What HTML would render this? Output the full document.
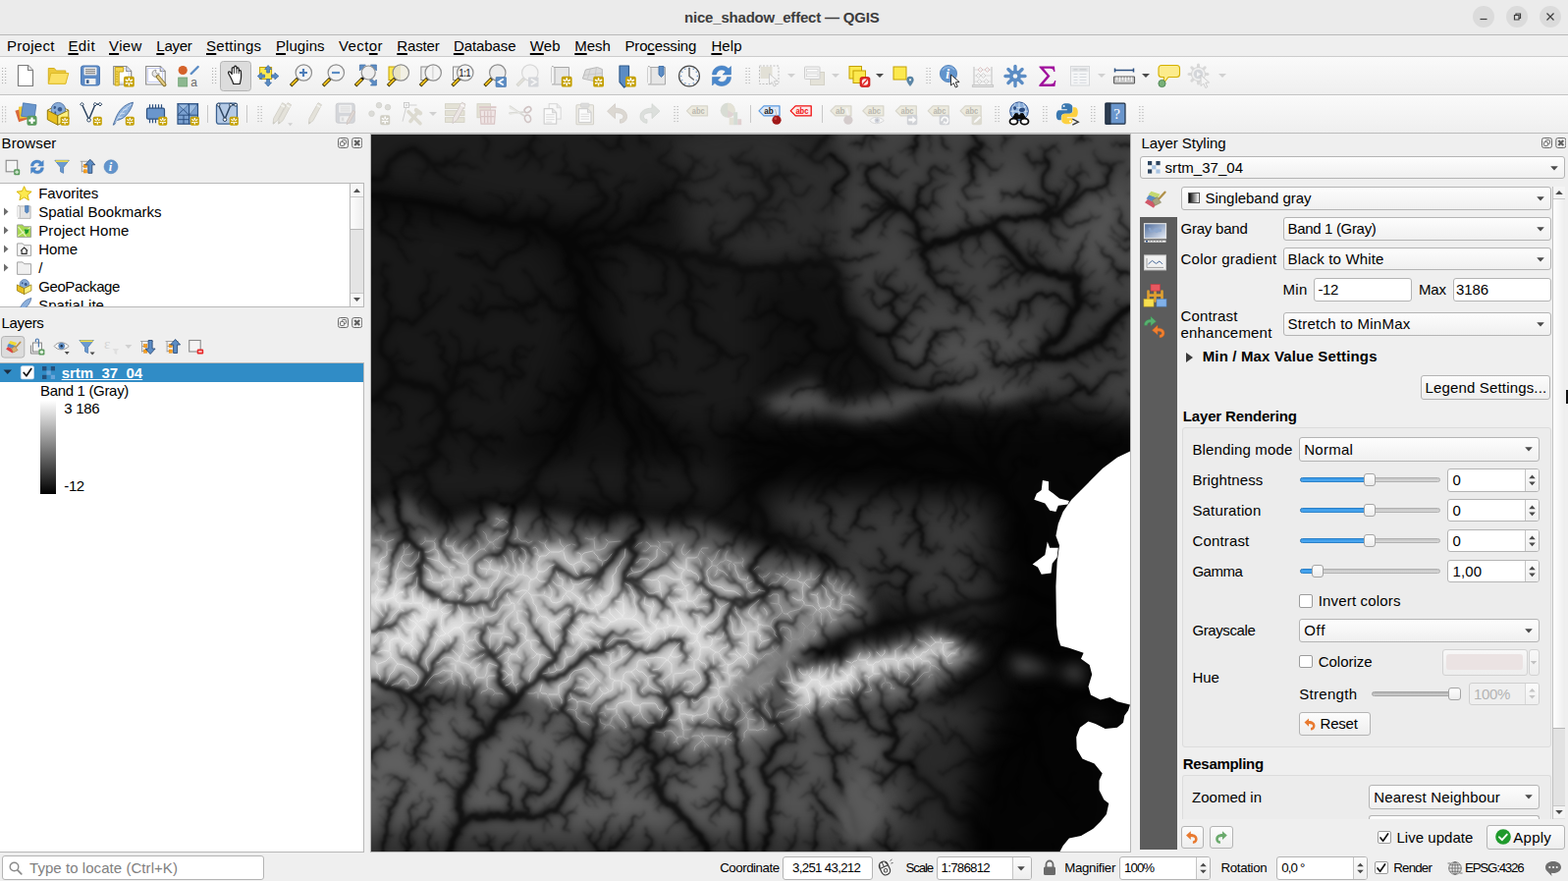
<!DOCTYPE html>
<html lang="en"><head><meta charset="utf-8"><title>nice_shadow_effect — QGIS</title>
<style>
html,body{margin:0;padding:0;background:#efefef;}
body{width:1597px;height:897px;overflow:hidden;font-family:"Liberation Sans",sans-serif;font-size:15px;color:#000;}
#app{position:relative;width:1597px;height:897px;overflow:hidden;background:#efefef;}
#app div,#app span.t,#app svg{position:absolute;box-sizing:border-box;}
span.t{white-space:nowrap;}
u{text-decoration:underline;text-underline-offset:2px;text-decoration-thickness:1.5px;}
.combo{background:linear-gradient(#fdfdfd,#f0f0f0);border:1px solid #b4b4b4;border-radius:3px;}
.btn{background:linear-gradient(#fcfcfc,#eeeeee);border:1px solid #b4b4b4;border-radius:3px;}
.edit{background:#fff;border:1px solid #b4b4b4;border-radius:3px;}
.chk{background:#fff;border:1px solid #9c9c9c;border-radius:2px;}
.grp{border:1px solid #dcdcdc;border-radius:3px;background:#ececec;}
.fs{font-family:"Liberation Sans",sans-serif;}
.fr{font-family:"Liberation Serif",serif;}

</style></head>
<body>
<div id="app">
<div style="left:0px;top:0px;width:1597px;height:35px;background:#ebebeb;"></div>
<div style="left:0px;top:35px;width:1597px;height:1px;background:#b9b9b9;"></div>
<span class="t" style="left:697px;top:7.5px;font-size:15px;line-height:20px;color:#3d3d3d;letter-spacing:-0.196px;font-weight:bold;">nice_shadow_effect — QGIS</span>
<div style="left:1500px;top:6px;width:22px;height:22px;background:#dbdbdb;border-radius:50%;"></div>
<div style="left:1534px;top:6px;width:22px;height:22px;background:#dbdbdb;border-radius:50%;"></div>
<div style="left:1568px;top:6px;width:22px;height:22px;background:#dbdbdb;border-radius:50%;"></div>
<svg style="left:1500px;top:6px" width="90" height="22" viewBox="0 0 90 22"><g stroke="#3d3d3d" stroke-width="1.2" fill="none"><path d="M7.5 13.5h7"/><path d="M42.5 9.5h4.5v4.5h-4.5z"/><path d="M44 9.5v-1.5h4.5v4.5h-1.5"/><path d="M75.5 7.5l7 7M82.5 7.5l-7 7"/></g></svg>
<div style="left:0px;top:36px;width:1597px;height:21px;background:#efefef;"></div>
<div style="left:0px;top:57px;width:1597px;height:1px;background:#cccccc;"></div>
<span class="t" style="left:7px;top:36.5px;font-size:15px;line-height:20px;color:#000;letter-spacing:0.273px;">Pro<u>j</u>ect</span>
<span class="t" style="left:69.4px;top:36.5px;font-size:15px;line-height:20px;color:#000;letter-spacing:0.435px;"><u>E</u>dit</span>
<span class="t" style="left:111px;top:36.5px;font-size:15px;line-height:20px;color:#000;letter-spacing:0.388px;"><u>V</u>iew</span>
<span class="t" style="left:159.3px;top:36.5px;font-size:15px;line-height:20px;color:#000;letter-spacing:-0.246px;"><u>L</u>ayer</span>
<span class="t" style="left:210px;top:36.5px;font-size:15px;line-height:20px;color:#000;letter-spacing:0.262px;"><u>S</u>ettings</span>
<span class="t" style="left:281px;top:36.5px;font-size:15px;line-height:20px;color:#000;letter-spacing:0.057px;"><u>P</u>lugins</span>
<span class="t" style="left:345px;top:36.5px;font-size:15px;line-height:20px;color:#000;letter-spacing:0.411px;">Vect<u>o</u>r</span>
<span class="t" style="left:404.3px;top:36.5px;font-size:15px;line-height:20px;color:#000;letter-spacing:-0.148px;"><u>R</u>aster</span>
<span class="t" style="left:461.9px;top:36.5px;font-size:15px;line-height:20px;color:#000;letter-spacing:-0.077px;"><u>D</u>atabase</span>
<span class="t" style="left:539.8px;top:36.5px;font-size:15px;line-height:20px;color:#000;letter-spacing:0.141px;"><u>W</u>eb</span>
<span class="t" style="left:585.3px;top:36.5px;font-size:15px;line-height:20px;color:#000;letter-spacing:-0.072px;"><u>M</u>esh</span>
<span class="t" style="left:636.4px;top:36.5px;font-size:15px;line-height:20px;color:#000;letter-spacing:-0.130px;">Pro<u>c</u>essing</span>
<span class="t" style="left:724.4px;top:36.5px;font-size:15px;line-height:20px;color:#000;letter-spacing:0.110px;"><u>H</u>elp</span>
<div style="left:0px;top:58px;width:1597px;height:38px;background:linear-gradient(#fafafa,#efefef);"></div>
<div style="left:0px;top:96px;width:1597px;height:1px;background:#c4c4c4;"></div>
<div style="left:0px;top:97px;width:1597px;height:38px;background:linear-gradient(#fafafa,#efefef);"></div>
<div style="left:0px;top:135px;width:1597px;height:1px;background:#bcbcbc;"></div>
<svg style="left:0;top:0" width="1597" height="137" viewBox="0 0 1597 137"><g fill="#b0b0b0"><rect x="2.0" y="69" width="1.1" height="1.1"/><rect x="5.1" y="69" width="1.1" height="1.1"/><rect x="2.0" y="72" width="1.1" height="1.1"/><rect x="5.1" y="72" width="1.1" height="1.1"/><rect x="2.0" y="75" width="1.1" height="1.1"/><rect x="5.1" y="75" width="1.1" height="1.1"/><rect x="2.0" y="78" width="1.1" height="1.1"/><rect x="5.1" y="78" width="1.1" height="1.1"/><rect x="2.0" y="81" width="1.1" height="1.1"/><rect x="5.1" y="81" width="1.1" height="1.1"/><rect x="2.0" y="84" width="1.1" height="1.1"/><rect x="5.1" y="84" width="1.1" height="1.1"/></g><g transform="translate(14.0 65.0)"><path d="M4.5 1.5h10l5 5v16h-15z" fill="#fff" stroke="#7c7c7c" stroke-width="1.2" stroke-linejoin="round"/><path d="M14.5 1.5v5h5" fill="#e8e8e8" stroke="#7c7c7c" stroke-width="1.1" stroke-linejoin="round"/></g><g transform="translate(46.8 65.0)"><path d="M2.5 4.5h6l2 2.5h9.5v13h-17.5z" fill="#edc93a" stroke="#d4b020" stroke-width="1"/><path d="M5 9.5h18l-3 10.8h-17.5z" fill="#fbe064" stroke="#dcb928" stroke-width="1" stroke-linejoin="round"/></g><g transform="translate(80.0 65.0)"><rect x="2.5" y="2" width="19" height="20" rx="2.2" fill="#5d8bc6" stroke="#4a78b4" stroke-width="1"/><rect x="5.5" y="3.5" width="13" height="8" rx="0.8" fill="#ededed"/><path d="M7 5.7h10M7 7.7h10M7 9.7h10" stroke="#6e6e6e" stroke-width="0.9"/><rect x="6.5" y="15" width="11" height="6" rx="0.6" fill="#f2f2f2"/><rect x="8" y="16.3" width="2.6" height="3.6" fill="#3d5f8f"/></g><g transform="translate(113.2 65.0)"><path d="M2.5 2.5h13l5 5v13.5h-18z" fill="#fff" stroke="#8a8a8a" stroke-width="1.2" stroke-linejoin="round"/><path d="M15.5 2.5v5h5" fill="#e8e8e8" stroke="#8a8a8a" stroke-width="1.1" stroke-linejoin="round"/><rect x="5" y="5" width="13" height="14" fill="none" stroke="#b8c8f0" stroke-width="0.8"/><path d="M4 3.5h8.5v4.5h-4.5v14h-4z" fill="#f5d550" stroke="#c8a410" stroke-width="1"/><path d="M5 8h2M5 10.5h1.5M5 13h2M5 15.500h1.5M5 18h2" stroke="#a88a00" stroke-width="0.7"/><rect x="12.8" y="12.8" width="10.8" height="10.8" rx="1.9" fill="#c4a000"/><g stroke="#fff" stroke-width="1.62" stroke-linecap="round"><path d="M18.200000000000003 14.74v6.91M15.18 16.47l6.05 3.46M15.18 19.93l6.05 -3.46"/></g><circle cx="18.200000000000003" cy="18.200000000000003" r="1.19" fill="#c4a000"/></g><g transform="translate(146.2 65.0)"><path d="M2.5 2.5h14.5l5 5v13.5h-19.5z" fill="#fff" stroke="#8a8a8a" stroke-width="1.2" stroke-linejoin="round"/><path d="M17.0 2.5v5h5" fill="#e8e8e8" stroke="#8a8a8a" stroke-width="1.1" stroke-linejoin="round"/><rect x="4.5" y="4.5" width="15" height="14" fill="none" stroke="#b8c0f0" stroke-width="0.8"/><path d="M11 6.5a3.6 3.6 0 1 0 5 3.3l-2 0.3-1.6-1.8 0.4-2.1z" fill="#e8e8e8" stroke="#8c8c8c" stroke-width="0.9"/><path d="M14.5 13l6.8 8.2" stroke="#8a7430" stroke-width="4" stroke-linecap="round"/><path d="M14.8 13.2l6.3 7.7" stroke="#e6cf86" stroke-width="2.2" stroke-linecap="round"/></g><g transform="translate(178.7 65.0)"><circle cx="7.5" cy="6.500" r="4.6" fill="#d4622a"/><rect x="3" y="14" width="9" height="9" fill="#8cb890" stroke="#6ea072" stroke-width="0.8"/><path d="M16 10l7-7" stroke="#5b8cc4" stroke-width="2.4" stroke-linecap="round"/><text x="15.5" y="22.500" class="fs" font-size="12" fill="#6a6a6a">a</text></g><g fill="#b0b0b0"><rect x="216.0" y="69" width="1.1" height="1.1"/><rect x="219.1" y="69" width="1.1" height="1.1"/><rect x="216.0" y="72" width="1.1" height="1.1"/><rect x="219.1" y="72" width="1.1" height="1.1"/><rect x="216.0" y="75" width="1.1" height="1.1"/><rect x="219.1" y="75" width="1.1" height="1.1"/><rect x="216.0" y="78" width="1.1" height="1.1"/><rect x="219.1" y="78" width="1.1" height="1.1"/><rect x="216.0" y="81" width="1.1" height="1.1"/><rect x="219.1" y="81" width="1.1" height="1.1"/><rect x="216.0" y="84" width="1.1" height="1.1"/><rect x="219.1" y="84" width="1.1" height="1.1"/></g><rect x="224.500" y="62.500" width="31" height="30" rx="3" fill="#dcdcdc" stroke="#b4b4b4" stroke-width="1"/><g transform="translate(228.0 65.0)"><path d="M6.200 12.500c-1.200-2.200-2.400-3.600-1.400-4.400 1.100-0.800 2.200 0.400 3.400 2.400l0.100-6c0-1.300 2-1.300 2.100 0l0.300-1.500c0.300-1.200 2.100-1.100 2.200 0.200l0.200 1.600c0.200-1.200 2-1.100 2.100 0.100l0.300 2.400c0.300-1 1.800-0.900 1.900 0.300 0.300 3.600 0.400 7-0.400 9.400l-0.700 3.500h-6.600c-0.300-2.100-1.800-4.600-3.500-8z" fill="#fff" stroke="#1a1a1a" stroke-width="1.2" stroke-linejoin="round"/><path d="M10.400 4.800v5M12.900 4.600v5.200M15.200 5.600v4.600" stroke="#1a1a1a" stroke-width="0.9" fill="none"/></g><g transform="translate(261.1 65.0)"><rect x="3.500" y="3.500" width="12" height="12" fill="#fce94f" stroke="#c4a000" stroke-width="1"/><g fill="#5b8cc4" stroke="#3e6da6" stroke-width="0.8" stroke-linejoin="round"><path d="M12 1.500l3.400 4h-2v3.500h-2.800v-3.500h-2z"/><path d="M12 23l3.400-4h-2v-3.500h-2.800v3.500h-2z"/><path d="M1.200 12.500l4-3.400v2h3.300v2.800h-3.300v2z"/><path d="M22.800 12.500l-4-3.400v2h-3.300v2.800h3.300v2z"/></g></g><g transform="translate(294.5 65.0)"><path d="M8.800 15L1.600 22.200" stroke="#3a3000" stroke-width="3.500" stroke-linecap="butt"/><path d="M8.200 15.600L2.300 21.500" stroke="#f4c21c" stroke-width="2"/><circle cx="9.300" cy="14.500" r="1.500" fill="#111"/><circle cx="14.800" cy="9" r="8.2" fill="#f4f4f4" stroke="#8e8e8e" stroke-width="1.200"/><path d="M10.500 9h8M14.500 5v8" stroke="#4c7cb8" stroke-width="2.2"/></g><g transform="translate(327.5 65.0)"><path d="M8.800 15L1.600 22.200" stroke="#3a3000" stroke-width="3.500" stroke-linecap="butt"/><path d="M8.200 15.600L2.300 21.500" stroke="#f4c21c" stroke-width="2"/><circle cx="9.300" cy="14.500" r="1.500" fill="#111"/><circle cx="14.800" cy="9" r="8.2" fill="#f4f4f4" stroke="#8e8e8e" stroke-width="1.200"/><path d="M10.500 9h8" stroke="#5b8cc4" stroke-width="2.2"/></g><g transform="translate(360.4 65.0)"><g fill="#5b8cc4" stroke="#3e6da6" stroke-width="0.7"><path d="M6 1h6l-2 2 3 3-2 2-3-3-2 2z"/><path d="M23 1v6l-2-2-3 3-2-2 3-3-2-2z"/><path d="M23 18v-6l-2 2-3-3-2 2 3 3-2 2z" transform="translate(0 4)"/></g><path d="M8.800 15L1.600 22.200" stroke="#3a3000" stroke-width="3.500" stroke-linecap="butt"/><path d="M8.200 15.600L2.300 21.500" stroke="#f4c21c" stroke-width="2"/><circle cx="9.300" cy="14.500" r="1.500" fill="#111"/><circle cx="14.800" cy="9" r="7" fill="#eeeeee" stroke="#8e8e8e" stroke-width="1.200"/></g><g transform="translate(393.5 65.0)"><rect x="2.500" y="3" width="11" height="13.500" fill="#fce94f" stroke="#c4a000" stroke-width="1"/><path d="M8.800 15L1.600 22.200" stroke="#3a3000" stroke-width="3.500" stroke-linecap="butt"/><path d="M8.200 15.600L2.300 21.500" stroke="#f4c21c" stroke-width="2"/><circle cx="9.300" cy="14.500" r="1.500" fill="#111"/><circle cx="14.800" cy="9" r="8.2" fill="#f2f0e4" stroke="#8e8e8e" stroke-width="1.200"/><path d="M14.500 2v14a7 7 0 0 1 0-14z" fill="#e8e2c0" opacity="0.9"/></g><g transform="translate(426.4 65.0)"><rect x="2.500" y="3" width="11" height="13.500" fill="#f0f0f0" stroke="#8c8c8c" stroke-width="1"/><path d="M8.800 15L1.600 22.200" stroke="#3a3000" stroke-width="3.500" stroke-linecap="butt"/><path d="M8.200 15.600L2.300 21.500" stroke="#f4c21c" stroke-width="2"/><circle cx="9.300" cy="14.500" r="1.500" fill="#111"/><circle cx="14.800" cy="9" r="8.2" fill="#f4f4f4" stroke="#8e8e8e" stroke-width="1.200"/><path d="M14.500 2.500v13" stroke="#c0c0c0" stroke-width="0.8"/></g><g transform="translate(459.0 65.0)"><rect x="2.500" y="3" width="11" height="13.500" fill="#f0f0f0" stroke="#8c8c8c" stroke-width="1"/><path d="M8.800 15L1.600 22.200" stroke="#3a3000" stroke-width="3.500" stroke-linecap="butt"/><path d="M8.200 15.600L2.300 21.500" stroke="#f4c21c" stroke-width="2"/><circle cx="9.300" cy="14.500" r="1.500" fill="#111"/><circle cx="14.800" cy="9" r="8.2" fill="#f4f4f4" stroke="#8e8e8e" stroke-width="1.200"/><text x="8.800" y="12.800" class="fs" font-size="10.500" font-weight="bold" fill="#3a3a3a" textLength="11.500" lengthAdjust="spacingAndGlyphs">1:1</text></g><g transform="translate(492.0 65.0)"><path d="M8.800 15L1.600 22.200" stroke="#3a3000" stroke-width="3.500" stroke-linecap="butt"/><path d="M8.200 15.600L2.300 21.500" stroke="#f4c21c" stroke-width="2"/><circle cx="9.300" cy="14.500" r="1.500" fill="#111"/><circle cx="14.800" cy="9" r="8.2" fill="#ececec" stroke="#8e8e8e" stroke-width="1.200"/><rect x="13" y="13.500" width="10.500" height="10" rx="0.8" fill="#5b8cc4" stroke="#3e6da6" stroke-width="0.6"/><path d="M20.800 15.500l-5 3 5 3" stroke="#fff" stroke-width="1.800" fill="none"/></g><g transform="translate(525.0 65.0)"><path d="M8.800 15L1.600 22.200" stroke="#d4d4d0" stroke-width="3.500" stroke-linecap="butt"/><path d="M8.200 15.600L2.300 21.500" stroke="#e2e0d8" stroke-width="2"/><circle cx="9.300" cy="14.500" r="1.500" fill="#dcdcdc"/><circle cx="14.800" cy="9" r="8.2" fill="#f4f4f4" stroke="#d8d8d8" stroke-width="1.200"/><rect x="13" y="13.500" width="10.500" height="10" rx="0.8" fill="#d4d6da"/><path d="M15.800 15.500l5 3-5 3" stroke="#f4f4f4" stroke-width="1.800" fill="none"/></g><g transform="translate(559.0 65.0)"><path d="M3 3.500h17.500v17.500h-15a2.500 2.500 0 0 1-2.500-2.500z" fill="#e6e6e6" stroke="#a8a8a8" stroke-width="1" stroke-linejoin="round"/><path d="M3 2.500c2.500 0 3 1.500 3 3v13.500c0 1.500-1 2-3 2" fill="#f4f4f4" stroke="#a8a8a8" stroke-width="1"/><rect x="12.8" y="12.8" width="10.8" height="10.8" rx="1.9" fill="#c4a000"/><g stroke="#fff" stroke-width="1.62" stroke-linecap="round"><path d="M18.200000000000003 14.74v6.91M15.18 16.47l6.05 3.46M15.18 19.93l6.05 -3.46"/></g><circle cx="18.200000000000003" cy="18.200000000000003" r="1.19" fill="#c4a000"/></g><g transform="translate(591.4 65.0)"><path d="M5 6l12-2.500 5 2v9l-4 4-16-3.500z" fill="#dcdcdc" stroke="#b4b4b4" stroke-width="0.9" stroke-linejoin="round"/><path d="M10 5l-3 10M16 4l-2 13M3.500 11.500l18-2" stroke="#c4c4c4" stroke-width="0.8" fill="none"/><rect x="12.8" y="12.8" width="10.8" height="10.8" rx="1.9" fill="#c4a000"/><g stroke="#fff" stroke-width="1.62" stroke-linecap="round"><path d="M18.200000000000003 14.74v6.91M15.18 16.47l6.05 3.46M15.18 19.93l6.05 -3.46"/></g><circle cx="18.200000000000003" cy="18.200000000000003" r="1.19" fill="#c4a000"/></g><g transform="translate(627.0 65.0)"><path d="M4 2h9.500v18.500l-4.800 3.500-4.700-5.500z" fill="#5b8cc4" stroke="#2f5a8c" stroke-width="1.200" stroke-linejoin="round"/><rect x="10" y="12.8" width="10.8" height="10.8" rx="1.9" fill="#c4a000"/><g stroke="#fff" stroke-width="1.62" stroke-linecap="round"><path d="M15.4 14.74v6.91M12.38 16.47l6.05 3.46M12.38 19.93l6.05 -3.46"/></g><circle cx="15.4" cy="18.200000000000003" r="1.19" fill="#c4a000"/></g><g transform="translate(657.0 65.0)"><path d="M3 3.500h17.500v17.500h-15a2.500 2.500 0 0 1-2.500-2.500z" fill="#e6e6e6" stroke="#a8a8a8" stroke-width="1" stroke-linejoin="round"/><path d="M3 2.500c2.500 0 3 1.500 3 3v13.500c0 1.500-1 2-3 2" fill="#f4f4f4" stroke="#a8a8a8" stroke-width="1"/><path d="M14 2.500h5v8.500l-2.500 2.500-2.500-2.500z" fill="#5b8cc4" stroke="#3e6da6" stroke-width="0.9"/></g><g transform="translate(690.0 65.0)"><circle cx="12" cy="12.500" r="10.400" fill="#f6f6f6" stroke="#4a4a4a" stroke-width="1.300"/><g fill="#5b8cc4"><circle cx="20.3" cy="12.5" r="0.700"/><circle cx="19.2" cy="16.6" r="0.700"/><circle cx="16.2" cy="19.7" r="0.700"/><circle cx="12.0" cy="20.8" r="0.700"/><circle cx="7.9" cy="19.7" r="0.700"/><circle cx="4.8" cy="16.6" r="0.700"/><circle cx="3.7" cy="12.5" r="0.700"/><circle cx="4.8" cy="8.3" r="0.700"/><circle cx="7.8" cy="5.3" r="0.700"/><circle cx="12.0" cy="4.2" r="0.700"/><circle cx="16.2" cy="5.3" r="0.700"/><circle cx="19.2" cy="8.3" r="0.700"/></g><path d="M12 4.500v8l4.300 3.500" stroke="#6a6a6a" stroke-width="1.500" fill="none" stroke-linecap="round"/></g><g transform="translate(723.0 65.0)"><g fill="#4a88cc" stroke="#3a70b0" stroke-width="0.500"><path d="M2.500 11c0-5.500 4.500-9 9.500-9 3 0 5.300 1.200 7 3l2.500-2.500v8.500h-8.500l3-3c-1-1.200-2.400-2-4-2-2.800 0-5 2-5.500 5z"/><path d="M21.500 13.500c0 5.500-4.500 9-9.500 9-3 0-5.300-1.200-7-3l-2.500 2.500v-8.500h8.500l-3 3c1 1.200 2.400 2 4 2 2.800 0 5-2 5.500-5z"/></g></g><g fill="#b0b0b0"><rect x="759.5" y="69" width="1.1" height="1.1"/><rect x="762.6" y="69" width="1.1" height="1.1"/><rect x="759.5" y="72" width="1.1" height="1.1"/><rect x="762.6" y="72" width="1.1" height="1.1"/><rect x="759.5" y="75" width="1.1" height="1.1"/><rect x="762.6" y="75" width="1.1" height="1.1"/><rect x="759.5" y="78" width="1.1" height="1.1"/><rect x="762.6" y="78" width="1.1" height="1.1"/><rect x="759.5" y="81" width="1.1" height="1.1"/><rect x="762.6" y="81" width="1.1" height="1.1"/><rect x="759.5" y="84" width="1.1" height="1.1"/><rect x="762.6" y="84" width="1.1" height="1.1"/></g><g transform="translate(772.0 65.0)"><rect x="1.500" y="2" width="19.500" height="18.500" fill="none" stroke="#c0c0c0" stroke-width="1" stroke-dasharray="2 1.500"/><rect x="2.500" y="3" width="12" height="12" fill="#e2e0d6"/><path transform="translate(11.5 10) scale(1.0)" d="M0 0l0 11 2.800-2.400 2 4.400 2-0.900-2-4.300 3.800-0.300z" fill="#f4f4f4" stroke="#c8c8c8" stroke-width="0.9" stroke-linejoin="round"/></g><g transform="translate(817.0 65.0)"><rect x="8.500" y="8.500" width="14" height="13" fill="#e4e2d8" stroke="#d4d2c8" stroke-width="1"/><rect x="2.500" y="3" width="15.500" height="12.500" rx="0.800" fill="#f2f2f2" stroke="#cfcfcf" stroke-width="1"/><rect x="4.500" y="5.500" width="11.500" height="2.500" fill="#fff" stroke="#d4d4d4" stroke-width="0.800"/><rect x="4.500" y="10.200" width="11.500" height="2.500" fill="#fff" stroke="#d4d4d4" stroke-width="0.800"/></g><g transform="translate(863.0 65.0)"><rect x="2" y="2.500" width="12.500" height="12.500" fill="#fce94f" stroke="#c4a000" stroke-width="1"/><rect x="6" y="7" width="12.500" height="12.500" fill="#fce94f" stroke="#c4a000" stroke-width="1"/><rect x="13" y="13.500" width="10" height="10" rx="2" fill="#e02828" stroke="#b80000" stroke-width="0.600"/><circle cx="18" cy="18.500" r="3.200" fill="#fff" opacity="0.900"/><path d="M15.800 20.700l4.400-4.400" stroke="#e02828" stroke-width="1.500"/></g><g transform="translate(907.5 65.0)"><rect x="2.500" y="3" width="13" height="13" fill="#fce94f" stroke="#c4a000" stroke-width="1"/><path d="M19.500 13a3.300 3.300 0 0 1 3.300 3.300c0 2.500-3.300 6.200-3.300 6.200s-3.300-3.700-3.300-6.200a3.300 3.300 0 0 1 3.300-3.300z" fill="#5a86a8" stroke="#45708f" stroke-width="0.600"/><circle cx="19.500" cy="16.300" r="1.100" fill="#fff"/></g><path d="M802 75h8l-4 4z" fill="#d0d0d0"/><path d="M847 75h8l-4 4z" fill="#d0d0d0"/><path d="M892 75h8l-4 4z" fill="#4a4a4a"/><g fill="#b0b0b0"><rect x="943.5" y="69" width="1.1" height="1.1"/><rect x="946.6" y="69" width="1.1" height="1.1"/><rect x="943.5" y="72" width="1.1" height="1.1"/><rect x="946.6" y="72" width="1.1" height="1.1"/><rect x="943.5" y="75" width="1.1" height="1.1"/><rect x="946.6" y="75" width="1.1" height="1.1"/><rect x="943.5" y="78" width="1.1" height="1.1"/><rect x="946.6" y="78" width="1.1" height="1.1"/><rect x="943.5" y="81" width="1.1" height="1.1"/><rect x="946.6" y="81" width="1.1" height="1.1"/><rect x="943.5" y="84" width="1.1" height="1.1"/><rect x="946.6" y="84" width="1.1" height="1.1"/></g><g transform="translate(955.0 65.0)"><circle cx="11" cy="10" r="8.600" fill="#6294cc" stroke="#4a7cb8" stroke-width="0.800"/><path d="M5 6.500a7.500 7.500 0 0 1 12-0.500" stroke="#9cc0e8" stroke-width="1.400" fill="none" opacity="0.700"/><text x="8.200" y="15" class="fr" font-size="14" font-weight="bold" font-style="italic" fill="#fff">i</text><path transform="translate(13.5 11) scale(1.0)" d="M0 0l0 11 2.800-2.400 2 4.400 2-0.900-2-4.300 3.800-0.300z" fill="#fff" stroke="#1a1a1a" stroke-width="0.9" stroke-linejoin="round"/></g><g transform="translate(989.0 65.0)"><path d="M3 3v18.500M21 3v18.500M1.500 21.500h21v2h-21z" stroke="#c8c8c8" stroke-width="1.200" fill="#e0e0e0"/><path d="M3 6h18M3 12h18M3 18h18" stroke="#d4d4d4" stroke-width="0.800"/><g fill="#f0f0f0" stroke-width="0.900"><path d="M7 6l2.500-2.500 2.500 2.500-2.500 2.500z" stroke="#dcc0c0"/><path d="M14 6l2.500-2.500 2.500 2.500-2.500 2.500z" stroke="#dcc0c0"/><path d="M5 12l2.500-2.500 2.500 2.500-2.500 2.500z" stroke="#d0d0d0"/><path d="M10 12l2.500-2.500 2.500 2.500-2.500 2.500z" stroke="#d0d0d0"/><path d="M6 18l2.500-2.500 2.500 2.500-2.500 2.500z" stroke="#d0d0d0"/><path d="M13 18l2.500-2.500 2.500 2.500-2.500 2.500z" stroke="#d0d0d0"/></g></g><g transform="translate(1022.0 65.0)"><g stroke="#5b8cc4" stroke-width="3.400" stroke-linecap="round"><path d="M17.00 12.50L22.00 12.50" /><path d="M15.54 16.04L19.07 19.57" /><path d="M12.00 17.50L12.00 22.50" /><path d="M8.46 16.04L4.93 19.57" /><path d="M7.00 12.50L2.00 12.50" /><path d="M8.46 8.96L4.93 5.43" /><path d="M12.00 7.50L12.00 2.50" /><path d="M15.54 8.96L19.07 5.43" /></g><circle cx="12" cy="12.500" r="6" fill="#5b8cc4"/><circle cx="12" cy="12.500" r="2.300" fill="#f4f4f4"/></g><g transform="translate(1055.0 65.0)"><path d="M3.500 2.500h15.500l0.500 5.500h-1.200c-0.500-2.500-1.500-3.300-4-3.300h-6.300l6.500 7.800-7 8h7.500c2.500 0 3.500-1 4.200-3.500h1.200l-1 6h-16v-1.500l8-9.300-7.900-8.700z" fill="#a0109c"/></g><g transform="translate(1088.0 65.0)"><rect x="2.500" y="2.500" width="19" height="19.500" fill="#f4f5f6" stroke="#d6d8da" stroke-width="1"/><rect x="3.500" y="3.500" width="17" height="4.500" fill="#e2e4e6"/><path d="M5.500 5.800h4M11.500 5.800h7" stroke="#cfd2d4" stroke-width="1.600"/><path d="M5.500 10.500h4M11.500 10.500h7M5.500 13.500h4M11.500 13.500h7M5.500 16.500h4M11.500 16.500h7M5.500 19.300h4M11.500 19.300h7" stroke="#d4d8dc" stroke-width="0.900"/></g><g transform="translate(1133.0 65.0)"><path d="M2 6.500h20M2.500 4.500v4M21.500 4.500v4" stroke="#2c5080" stroke-width="1.500" fill="none"/><rect x="1.500" y="13" width="21" height="7" rx="0.800" fill="#c8c8c8" stroke="#5a5a5a" stroke-width="1.100"/><path d="M4.500 13.500v3M7.500 13.500v4.500M10.500 13.500v3M13.500 13.500v4.500M16.500 13.500v3M19.500 13.500v4.500" stroke="#f4f4f4" stroke-width="1.100"/></g><g transform="translate(1178.0 65.0)"><path d="M5 1.500h15.500a3 3 0 0 1 3 3v6a3 3 0 0 1-3 3h-8.500l-5 6.500 0.500-6.500h-2.500a3 3 0 0 1-3-3v-6a3 3 0 0 1 3-3z" fill="#fcec8c" stroke="#d4b000" stroke-width="1.100" stroke-linejoin="round"/><circle cx="5.500" cy="20" r="3.600" fill="#78b078" stroke="#4a8050" stroke-width="0.900"/></g><g transform="translate(1210.0 65.0)"><g stroke="#d8d8d8" stroke-width="3" stroke-linecap="round"><path d="M15.50 10.50L20.00 10.50" /><path d="M14.04 14.04L17.22 17.22" /><path d="M10.50 15.50L10.50 20.00" /><path d="M6.96 14.04L3.78 17.22" /><path d="M5.50 10.50L1.00 10.50" /><path d="M6.96 6.96L3.78 3.78" /><path d="M10.50 5.50L10.50 1.00" /><path d="M14.04 6.96L17.22 3.78" /></g><circle cx="10.500" cy="10.500" r="7" fill="#f0f0f0" stroke="#d0d0d0" stroke-width="0.900"/><circle cx="10.500" cy="10.500" r="4.800" fill="#d4d6da"/><path d="M9 8l4 2.500-4 2.500z" fill="#f4f4f4"/><path transform="translate(13 11.5) scale(1.0)" d="M0 0l0 11 2.800-2.400 2 4.400 2-0.900-2-4.300 3.800-0.300z" fill="#f4f4f4" stroke="#c8c8c8" stroke-width="0.9" stroke-linejoin="round"/></g><path d="M1118 75h8l-4 4z" fill="#d0d0d0"/><path d="M1163 75h8l-4 4z" fill="#4a4a4a"/><path d="M1241 75h8l-4 4z" fill="#d0d0d0"/>
<g fill="#b0b0b0"><rect x="2.0" y="108.3" width="1.1" height="1.1"/><rect x="5.1" y="108.3" width="1.1" height="1.1"/><rect x="2.0" y="111.3" width="1.1" height="1.1"/><rect x="5.1" y="111.3" width="1.1" height="1.1"/><rect x="2.0" y="114.3" width="1.1" height="1.1"/><rect x="5.1" y="114.3" width="1.1" height="1.1"/><rect x="2.0" y="117.3" width="1.1" height="1.1"/><rect x="5.1" y="117.3" width="1.1" height="1.1"/><rect x="2.0" y="120.3" width="1.1" height="1.1"/><rect x="5.1" y="120.3" width="1.1" height="1.1"/><rect x="2.0" y="123.3" width="1.1" height="1.1"/><rect x="5.1" y="123.3" width="1.1" height="1.1"/></g><g transform="translate(14.0 103.7)"><rect x="3" y="7" width="12" height="12" fill="#d8683a" transform="rotate(-18 9 13)"/><rect x="5.500" y="4.500" width="12" height="12" fill="#f0c830" transform="rotate(-6 11 10)"/><rect x="8.500" y="2" width="13.500" height="13.500" fill="#6a96cc" stroke="#4a78b0" stroke-width="0.800" transform="rotate(8 15 9)"/><rect x="13.500" y="14" width="10" height="10" rx="2" fill="#5a9a5c"/><path d="M18.500 15.800v6.400M15.300 19h6.400" stroke="#fff" stroke-width="2.200"/></g><g transform="translate(46.8 103.7)"><circle cx="12.500" cy="8" r="7.300" fill="#88acd8" stroke="#4a6a9a" stroke-width="0.800"/><path d="M8 4.500c2-1 3 0.500 2 2s-3 1-2-2zM12.500 6c1.500-1.500 4-0.500 4 1.500s-2 3-3.500 2-1.500-2.500-0.500-3.500zM9 9.500c1.500 0 2 1.500 1 2.500s-2-1-1-2.500z" fill="#3a5a8c"/><path d="M1.500 8.500l10.500 5.500v9.500l-10.500-5.500z" fill="#e8c020" stroke="#8a7000" stroke-width="0.900" stroke-linejoin="round"/><path d="M12 14l11-5.500v9.500l-11 5.500z" fill="#fcf080" stroke="#8a7000" stroke-width="0.900" stroke-linejoin="round"/><path d="M1.500 8.500l4-2M23 8.500l-3.500-1.700" stroke="#8a7000" stroke-width="0.900"/><rect x="14.8" y="15" width="9" height="9" rx="1.6" fill="#c4a000"/><g stroke="#fff" stroke-width="1.35" stroke-linecap="round"><path d="M19.3 16.62v5.76M16.78 18.06l5.04 2.88M16.78 20.94l5.04 -2.88"/></g><circle cx="19.3" cy="19.5" r="0.99" fill="#c4a000"/></g><g transform="translate(80.0 103.7)"><path d="M3.500 2.500l7 15.500 6.500-15.500h5" stroke="#2c4460" stroke-width="1.500" fill="none" stroke-linejoin="round"/><g fill="#fff" stroke="#2c4460" stroke-width="1"><path d="M3.500 0.700l1.800 1.800-1.800 1.800-1.800-1.800z"/><path d="M17 0.700l1.800 1.800-1.800 1.800-1.800-1.800z"/><path d="M22 0.700l1.800 1.800-1.800 1.800-1.800-1.800z"/><circle cx="10.500" cy="18.500" r="1.800"/></g><rect x="14.8" y="15" width="9" height="9" rx="1.6" fill="#c4a000"/><g stroke="#fff" stroke-width="1.35" stroke-linecap="round"><path d="M19.3 16.62v5.76M16.78 18.06l5.04 2.88M16.78 20.94l5.04 -2.88"/></g><circle cx="19.3" cy="19.5" r="0.99" fill="#c4a000"/></g><g transform="translate(113.0 103.7)"><path d="M22.500 0.500c-9 2-15 8-18.500 18.500l-1.800 4.500 1.500-0.500 2-4c5-1 9-3.500 12-8 2.500-3.500 4-7 4.800-10.500z" fill="#8cb0dc" stroke="#4a6c9c" stroke-width="0.900" stroke-linejoin="round"/><path d="M21 2.500c-7 4-12 9.500-16.500 19M9 12.500l5-1M12 8.500l5-1.500M7.500 16l4-0.500" stroke="#dce8f8" stroke-width="0.800" fill="none"/><rect x="14.8" y="15" width="9" height="9" rx="1.6" fill="#c4a000"/><g stroke="#fff" stroke-width="1.35" stroke-linecap="round"><path d="M19.3 16.62v5.76M16.78 18.06l5.04 2.88M16.78 20.94l5.04 -2.88"/></g><circle cx="19.3" cy="19.5" r="0.99" fill="#c4a000"/></g><g transform="translate(146.5 103.7)"><rect x="3" y="6.500" width="18" height="11" rx="1.500" fill="#6a96cc" stroke="#2c5080" stroke-width="1.200"/><path d="M6 2.500v4M9 2.500v4M12 2.500v4M15 2.500v4M18 2.500v4M6 17.500v4M9 17.500v4M12 17.500v4" stroke="#2c5080" stroke-width="1.200"/><rect x="14.8" y="15" width="9" height="9" rx="1.6" fill="#c4a000"/><g stroke="#fff" stroke-width="1.35" stroke-linecap="round"><path d="M19.3 16.62v5.76M16.78 18.06l5.04 2.88M16.78 20.94l5.04 -2.88"/></g><circle cx="19.3" cy="19.5" r="0.99" fill="#c4a000"/></g><g transform="translate(179.0 103.7)"><rect x="2" y="2" width="20.500" height="20.500" fill="#7aa0d0" stroke="#2c5080" stroke-width="1.200"/><path d="M13.500 2v20.500M2 13.500h20.500M2 2l11.500 11.500M13.500 2l-11.500 11.500M22.500 2l-9 11.500M8 13.500v9M2 18h11.500" stroke="#2c5080" stroke-width="1" fill="none"/><path d="M3 3h9.500l-4.700 4.500zM14.500 3.500v9l7-9z" fill="#a8c4e4" opacity="0.800"/><rect x="14.8" y="15" width="9" height="9" rx="1.6" fill="#c4a000"/><g stroke="#fff" stroke-width="1.35" stroke-linecap="round"><path d="M19.3 16.62v5.76M16.78 18.06l5.04 2.88M16.78 20.94l5.04 -2.88"/></g><circle cx="19.3" cy="19.5" r="0.99" fill="#c4a000"/></g><g transform="translate(219.0 103.7)"><rect x="1.500" y="1.500" width="21" height="21" rx="2.500" fill="#b4cae6" stroke="#3a6090" stroke-width="1.300"/><path d="M3.500 3l6.500 14.500 6-14.500h5" stroke="#2c4460" stroke-width="1.500" fill="none" stroke-linejoin="round"/><g fill="#fff" stroke="#2c4460" stroke-width="1"><circle cx="3.500" cy="3" r="1.500"/><circle cx="16" cy="3" r="1.500"/><circle cx="21" cy="3" r="1.500"/><circle cx="10" cy="18" r="1.800"/></g><rect x="14.8" y="15" width="9" height="9" rx="1.6" fill="#c4a000"/><g stroke="#fff" stroke-width="1.35" stroke-linecap="round"><path d="M19.3 16.62v5.76M16.78 18.06l5.04 2.88M16.78 20.94l5.04 -2.88"/></g><circle cx="19.3" cy="19.5" r="0.99" fill="#c4a000"/></g><path d="M211.5 107v18" stroke="#c8c8c8" stroke-width="1"/><path d="M251.5 107v18" stroke="#c8c8c8" stroke-width="1"/><path d="M764.5 107v18" stroke="#c8c8c8" stroke-width="1"/><path d="M837.5 107v18" stroke="#c8c8c8" stroke-width="1"/><g fill="#b0b0b0"><rect x="262.5" y="108" width="1.1" height="1.1"/><rect x="265.6" y="108" width="1.1" height="1.1"/><rect x="262.5" y="111" width="1.1" height="1.1"/><rect x="265.6" y="111" width="1.1" height="1.1"/><rect x="262.5" y="114" width="1.1" height="1.1"/><rect x="265.6" y="114" width="1.1" height="1.1"/><rect x="262.5" y="117" width="1.1" height="1.1"/><rect x="265.6" y="117" width="1.1" height="1.1"/><rect x="262.5" y="120" width="1.1" height="1.1"/><rect x="265.6" y="120" width="1.1" height="1.1"/><rect x="262.5" y="123" width="1.1" height="1.1"/><rect x="265.6" y="123" width="1.1" height="1.1"/></g><g transform="translate(275.6 103.7)"><g transform="translate(1 0.5)"><path d="M11 0.500l3.500 2-8.500 16-4.500 3.500 0.500-5.500z" fill="#e4e2da" stroke="#d0cec6" stroke-width="0.900" stroke-linejoin="round"/><path d="M9.800 2.800l3.500 2" stroke="#f4f4f0" stroke-width="1.600"/><path d="M1.800 19.500l1.700 1.500-2 1z" fill="#c8c8c0"/></g><g transform="translate(6.5 0.5)"><path d="M11 0.500l3.500 2-8.500 16-4.500 3.500 0.500-5.500z" fill="#e4e2da" stroke="#d0cec6" stroke-width="0.900" stroke-linejoin="round"/><path d="M9.800 2.800l3.500 2" stroke="#f4f4f0" stroke-width="1.600"/><path d="M1.800 19.500l1.700 1.500-2 1z" fill="#c8c8c0"/></g><path d="M17.500 21.500h5l-2.500 3z" fill="#d0d0d0"/></g><g transform="translate(308.0 103.7)"><g transform="translate(5 0.5)"><path d="M11 0.500l3.500 2-8.500 16-4.500 3.500 0.500-5.500z" fill="#e4e2da" stroke="#d0cec6" stroke-width="0.900" stroke-linejoin="round"/><path d="M9.800 2.800l3.500 2" stroke="#f4f4f0" stroke-width="1.600"/><path d="M1.800 19.500l1.700 1.500-2 1z" fill="#c8c8c0"/></g></g><g transform="translate(340.7 103.7)"><rect x="1.500" y="1.500" width="19" height="20" rx="2.200" fill="#d4d6da" stroke="#cccdd0" stroke-width="1"/><rect x="4.500" y="3" width="13" height="8" rx="0.800" fill="#f0f0f0"/><path d="M6 5.200h10M6 7.200h10M6 9.200h10" stroke="#d8d8d8" stroke-width="0.900"/><rect x="5.500" y="14.500" width="11" height="6" rx="0.600" fill="#f0f0f0"/><rect x="7" y="15.800" width="2.600" height="3.600" fill="#dcdcdc"/><g transform="translate(11.500 8.500) scale(0.660)"><path d="M11 0.500l3.500 2-8.500 16-4.500 3.500 0.500-5.500z" fill="#e0d8d4" stroke="#ccc4c0" stroke-width="1.200" stroke-linejoin="round"/></g></g><g transform="translate(374.0 103.7)"><g fill="#dcdcd8" stroke="#d0d0cc" stroke-width="0.800"><circle cx="4.500" cy="12" r="2.800"/><circle cx="12" cy="3.500" r="2.800"/><circle cx="21" cy="5.500" r="2.800"/></g><rect x="13.2" y="13.5" width="10" height="10" rx="1.8" fill="#d0cec4"/><g stroke="#fff" stroke-width="1.50" stroke-linecap="round"><path d="M18.2 15.30v6.40M15.40 16.90l5.60 3.20M15.40 20.10l5.60 -3.20"/></g><circle cx="18.2" cy="18.5" r="1.10" fill="#d0cec4"/></g><g transform="translate(408.0 103.7)"><rect x="3.500" y="0.800" width="5" height="5" fill="#f4f4f4" stroke="#c8c8c8" stroke-width="0.900"/><path d="M5 3.300l2 0M6 2.300v2" stroke="#c8c8c8" stroke-width="0.700"/><path d="M8.500 3.300h8M5.500 6l-3.500 14" stroke="#d0d0d0" stroke-width="1" fill="none"/><path d="M8 10l12 12M18 10l-8 10" stroke="#dcdad0" stroke-width="3.600" stroke-linecap="round"/><path d="M16 8.500l4 3" stroke="#dcdad0" stroke-width="4.500" stroke-linecap="round"/></g><g transform="translate(452.0 103.7)"><g fill="#e4e2d6" stroke="#d4d2c6" stroke-width="0.900"><rect x="1.500" y="2" width="19.500" height="4.800"/><rect x="1.500" y="9" width="19.500" height="4.800"/><rect x="1.500" y="16" width="19.500" height="4.800"/></g><g transform="translate(7.500 0)"><path d="M11 0.500l3.500 2-8.500 16-4.500 3.500 0.500-5.500z" fill="#ece6e4" stroke="#d0c8c6" stroke-width="0.900" stroke-linejoin="round"/><path d="M9.800 2.800l3.500 2" stroke="#faf8f8" stroke-width="1.600"/></g></g><g transform="translate(484.0 103.7)"><rect x="2" y="2" width="13.500" height="14" fill="#e4e2d6" stroke="#d4d2c6" stroke-width="0.900"/><path d="M4 4.500h17.500v2h-17.500z" fill="#dcc8c8"/><path d="M5 8.500h15.500l-1 14h-13.500z" fill="#f0e6e6" stroke="#d8c4c4" stroke-width="1.200" stroke-linejoin="round"/><path d="M9.500 9.500v12M12.800 9.500v12M16 9.500v12M6 15h13.500" stroke="#d8c4c4" stroke-width="1.200"/></g><g transform="translate(518.0 103.7)"><path d="M1.500 4.500l14 9.500M1 11.500l14-1" stroke="#d8d8d4" stroke-width="1.800" stroke-linecap="round" fill="none"/><path d="M0.800 4l13 8.500-13-5.500zM0.500 11.800l13.500-1.300-13 3z" fill="#e8e8e4"/><ellipse cx="19.500" cy="8" rx="3.600" ry="2.600" transform="rotate(-30 19.500 8)" fill="none" stroke="#d0c4c4" stroke-width="1.600"/><ellipse cx="19.500" cy="17" rx="3" ry="3.800" transform="rotate(-20 19.500 17)" fill="none" stroke="#d0c4c4" stroke-width="1.600"/></g><g transform="translate(550.7 103.7)"><path d="M8.5 2h8l4 4v11.5h-12z" fill="#f8f8f8" stroke="#dcdcdc" stroke-width="1.2" stroke-linejoin="round"/><path d="M16.5 2v4h4" fill="#e8e8e8" stroke="#dcdcdc" stroke-width="1.1" stroke-linejoin="round"/><path d="M3.5 7h8.5l4 4v11.5h-12.5z" fill="#fbfbfb" stroke="#d0d0d0" stroke-width="1.2" stroke-linejoin="round"/><path d="M12.0 7v4h4" fill="#e8e8e8" stroke="#d0d0d0" stroke-width="1.1" stroke-linejoin="round"/><path d="M5.500 13h8.500M5.500 15.500h8.500M5.500 18h8.500M5.500 20.500h6" stroke="#d8d8d8" stroke-width="0.900"/></g><g transform="translate(584.0 103.7)"><rect x="3" y="3" width="17.500" height="20" rx="1" fill="#eeece6" stroke="#d4d2ca" stroke-width="1.100"/><rect x="7.500" y="1.500" width="8.500" height="4" rx="0.800" fill="#dcdcdc" stroke="#d0d0d0" stroke-width="0.800"/><path d="M5.5 7h9.0l3.5 3.5v10.5h-12.5z" fill="#fbfbfb" stroke="#d0d0d0" stroke-width="1.2" stroke-linejoin="round"/><path d="M14.5 7v3.5h3.5" fill="#e8e8e8" stroke="#d0d0d0" stroke-width="1.1" stroke-linejoin="round"/><path d="M7.500 12.500h8.500M7.500 15h8.500M7.500 17.500h8.500" stroke="#d8d8d8" stroke-width="0.900"/></g><g transform="translate(616.5 103.7)"><path d="M2 9.500l8-7.500v4.500c7 0 12 3 12 8.500 0 4-3.500 6.500-7 6.500v-3.500c2 0 3.500-1 3.500-3 0-2.500-3-4-8.500-4v6z" fill="#dcd8d2" stroke="#d0ccc6" stroke-width="0.800" stroke-linejoin="round"/></g><g transform="translate(650.0 103.7)"><path d="M22 9.500l-8-7.500v4.500c-7 0-12 3-12 8.500 0 4 3.500 6.500 7 6.500v-3.500c-2 0-3.500-1-3.500-3 0-2.500 3-4 8.500-4v6z" fill="#dcdfdc" stroke="#d0d4d0" stroke-width="0.800" stroke-linejoin="round"/></g><path d="M437 114h8l-4 4z" fill="#d0d0d0"/><g fill="#b0b0b0"><rect x="686.5" y="108" width="1.1" height="1.1"/><rect x="689.6" y="108" width="1.1" height="1.1"/><rect x="686.5" y="111" width="1.1" height="1.1"/><rect x="689.6" y="111" width="1.1" height="1.1"/><rect x="686.5" y="114" width="1.1" height="1.1"/><rect x="689.6" y="114" width="1.1" height="1.1"/><rect x="686.5" y="117" width="1.1" height="1.1"/><rect x="689.6" y="117" width="1.1" height="1.1"/><rect x="686.5" y="120" width="1.1" height="1.1"/><rect x="689.6" y="120" width="1.1" height="1.1"/><rect x="686.5" y="123" width="1.1" height="1.1"/><rect x="689.6" y="123" width="1.1" height="1.1"/></g><g transform="translate(698.0 103.7)"><path d="M1.5 9.2l5 -5h16v10h-16z" fill="#eceade" stroke="#d8d6cc" stroke-width="1.3" stroke-linejoin="round"/><text x="6.7" y="12.8" class="fs" font-size="9.5" font-weight="bold" fill="#b8b6ae" textLength="13" lengthAdjust="spacingAndGlyphs">abc</text></g><g transform="translate(731.7 103.7)"><circle cx="9.500" cy="8.500" r="7.500" fill="#d8dcd4"/><path d="M9.500 8.500v-7.500a7.500 7.500 0 0 1 6.500 11.200z" fill="#e4e2d6"/><path d="M9.500 8.500l6.500 3.700a7.500 7.500 0 0 1-6.500 3.800z" fill="#e0d4d4"/><rect x="11" y="16" width="4.500" height="7.500" fill="#e4e2d6"/><rect x="15.500" y="10.500" width="4" height="13" fill="#d4dcd4"/><rect x="19.500" y="17.500" width="4" height="6" fill="#e0d0d0"/></g><g transform="translate(771.5 103.7)"><path d="M1.5 9.2l5 -5h16v10h-16z" fill="#dce8f8" stroke="#5b9ae0" stroke-width="1.3" stroke-linejoin="round"/><text x="6.7" y="12.8" class="fs" font-size="9.5" font-weight="bold" fill="#1a1a1a" textLength="9.5" lengthAdjust="spacingAndGlyphs">ab</text><path d="M18 7.500l1.500 6" stroke="#f4f4f4" stroke-width="2.200" stroke-linecap="round"/><path d="M18 7.500l1.500 6" stroke="#8a8a8a" stroke-width="0.600"/><circle cx="19.500" cy="18.500" r="4.600" fill="#a01818"/><circle cx="18.300" cy="17" r="1.400" fill="#d05050" opacity="0.800"/></g><g transform="translate(803.7 103.7)"><path d="M1.5 9.2l5 -5h16v10h-16z" fill="#fde8e8" stroke="#f01010" stroke-width="1.3" stroke-linejoin="round"/><text x="6.7" y="12.8" class="fs" font-size="9.5" font-weight="bold" fill="#f01010" textLength="13" lengthAdjust="spacingAndGlyphs">abc</text></g><g transform="translate(844.4 103.7)"><path d="M1.5 9.2l5 -5h16v10h-16z" fill="#eceade" stroke="#d8d6cc" stroke-width="1.3" stroke-linejoin="round"/><text x="6.7" y="12.8" class="fs" font-size="9.5" font-weight="bold" fill="#b8b6ae" textLength="9.5" lengthAdjust="spacingAndGlyphs">ab</text><path d="M18 7.500l1.500 6" stroke="#f4f4f4" stroke-width="2.200" stroke-linecap="round"/><circle cx="19.500" cy="18.500" r="4.600" fill="#d4cccc"/></g><g transform="translate(877.3 103.7)"><path d="M1.5 9.2l5 -5h16v10h-16z" fill="#eceade" stroke="#d8d6cc" stroke-width="1.3" stroke-linejoin="round"/><text x="6.7" y="12.8" class="fs" font-size="9.5" font-weight="bold" fill="#b8b6ae" textLength="13" lengthAdjust="spacingAndGlyphs">abc</text><path d="M8.500 19c3-4.500 10-4.500 14.500 0-4.500 4-11.500 4-14.500 0z" fill="#f6f6f6" stroke="#d4d4d4" stroke-width="0.900"/><circle cx="16" cy="18.800" r="2.600" fill="#d0d4dc"/><circle cx="16" cy="18.800" r="1" fill="#b8b8c0"/></g><g transform="translate(910.8 103.7)"><path d="M1.5 9.2l5 -5h16v10h-16z" fill="#eceade" stroke="#d8d6cc" stroke-width="1.3" stroke-linejoin="round"/><text x="6.7" y="12.8" class="fs" font-size="9.5" font-weight="bold" fill="#b8b6ae" textLength="13" lengthAdjust="spacingAndGlyphs">abc</text><rect x="13" y="13" width="10.500" height="10.500" rx="1.800" fill="#d0d2d6"/><path d="M14.500 17h4v-2.500l4 3.800-4 3.800v-2.500h-4z" fill="#fafafa"/></g><g transform="translate(943.7 103.7)"><path d="M1.5 9.2l5 -5h16v10h-16z" fill="#eceade" stroke="#d8d6cc" stroke-width="1.3" stroke-linejoin="round"/><text x="6.7" y="12.8" class="fs" font-size="9.5" font-weight="bold" fill="#b8b6ae" textLength="13" lengthAdjust="spacingAndGlyphs">abc</text><rect x="13" y="13" width="10.500" height="10.500" rx="1.800" fill="#d0d2d6"/><path d="M15.500 19.500a3.200 3.200 0 1 1 3.200 2.500" stroke="#fafafa" stroke-width="1.700" fill="none"/><path d="M16.500 22.500l3-1.500-1.500-2z" fill="#fafafa"/></g><g transform="translate(976.6 103.7)"><path d="M1.5 9.2l5 -5h16v10h-16z" fill="#eceade" stroke="#d8d6cc" stroke-width="1.3" stroke-linejoin="round"/><text x="6.7" y="12.8" class="fs" font-size="9.5" font-weight="bold" fill="#b8b6ae" textLength="13" lengthAdjust="spacingAndGlyphs">abc</text><rect x="13" y="13" width="10.500" height="10.500" rx="1.800" fill="#dcdad0"/><path d="M15 21.500l1-2.500 5-4.500 1.500 1.500-5 4.500z" fill="#fafafa"/></g><g fill="#b0b0b0"><rect x="1013.5" y="108" width="1.1" height="1.1"/><rect x="1016.6" y="108" width="1.1" height="1.1"/><rect x="1013.5" y="111" width="1.1" height="1.1"/><rect x="1016.6" y="111" width="1.1" height="1.1"/><rect x="1013.5" y="114" width="1.1" height="1.1"/><rect x="1016.6" y="114" width="1.1" height="1.1"/><rect x="1013.5" y="117" width="1.1" height="1.1"/><rect x="1016.6" y="117" width="1.1" height="1.1"/><rect x="1013.5" y="120" width="1.1" height="1.1"/><rect x="1016.6" y="120" width="1.1" height="1.1"/><rect x="1013.5" y="123" width="1.1" height="1.1"/><rect x="1016.6" y="123" width="1.1" height="1.1"/></g><g transform="translate(1026.0 103.7)"><circle cx="12" cy="9.500" r="9.300" fill="#88acd8" stroke="#2c5090" stroke-width="1"/><path d="M3 9.500h18M12 0.500v13M5 4.500c4 2 10 2 14 0M4.500 14c4-2 11-2 15 0M8 1.500c-3 5-3 11 0 16M16 1.500c3 5 3 11 0 16" stroke="#e8f0fc" stroke-width="0.700" fill="none"/><path d="M6 5c2-1 4 0 3 2s-3 2-3-2zM13 6.500c2-1.500 5-0.500 5 1.500s-3 3-5 2-1-2.500 0-3.500z" fill="#2c4c80"/><path d="M5 17.500l3-5.500h2.500l1.500 3 1.500-3h2.500l3 5.500" fill="#0a0a0a" stroke="#0a0a0a" stroke-width="1" stroke-linejoin="round"/><ellipse cx="6.500" cy="20" rx="4" ry="3" fill="#fff" stroke="#0a0a0a" stroke-width="1.800"/><ellipse cx="17.500" cy="20" rx="4" ry="3" fill="#fff" stroke="#0a0a0a" stroke-width="1.800"/></g><g fill="#b0b0b0"><rect x="1062.3" y="108" width="1.1" height="1.1"/><rect x="1065.4" y="108" width="1.1" height="1.1"/><rect x="1062.3" y="111" width="1.1" height="1.1"/><rect x="1065.4" y="111" width="1.1" height="1.1"/><rect x="1062.3" y="114" width="1.1" height="1.1"/><rect x="1065.4" y="114" width="1.1" height="1.1"/><rect x="1062.3" y="117" width="1.1" height="1.1"/><rect x="1065.4" y="117" width="1.1" height="1.1"/><rect x="1062.3" y="120" width="1.1" height="1.1"/><rect x="1065.4" y="120" width="1.1" height="1.1"/><rect x="1062.3" y="123" width="1.1" height="1.1"/><rect x="1065.4" y="123" width="1.1" height="1.1"/></g><g transform="translate(1074.8 103.7)"><path d="M11.500 1.500c-4.500 0-5 2-5 3.500v2.500h5.500v1h-8c-2 0-3 2-3 5s1 5 3 5h2v-3c0-2 1.500-3.500 3.500-3.500h5c1.500 0 3-1.200 3-3v-4c0-1.500-1.500-3.500-6-3.500z" fill="#3a78b0"/><circle cx="8.800" cy="4.300" r="1" fill="#fff"/><path d="M12.500 22.500c4.500 0 5-2 5-3.500v-2.500h-5.500v-1h8c2 0 3-2 3-5s-1-5-3-5h-2v3c0 2-1.500 3.500-3.500 3.500h-5c-1.500 0-3 1.200-3 3v4c0 1.500 1.500 3.500 6 3.500z" fill="#fcd040"/><circle cx="15.200" cy="19.700" r="1" fill="#fff"/><path d="M17.500 17.500l6 3-6 3" stroke="#3a3a3a" stroke-width="1.300" fill="none"/></g><g fill="#b0b0b0"><rect x="1111.2" y="108" width="1.1" height="1.1"/><rect x="1114.3" y="108" width="1.1" height="1.1"/><rect x="1111.2" y="111" width="1.1" height="1.1"/><rect x="1114.3" y="111" width="1.1" height="1.1"/><rect x="1111.2" y="114" width="1.1" height="1.1"/><rect x="1114.3" y="114" width="1.1" height="1.1"/><rect x="1111.2" y="117" width="1.1" height="1.1"/><rect x="1114.3" y="117" width="1.1" height="1.1"/><rect x="1111.2" y="120" width="1.1" height="1.1"/><rect x="1114.3" y="120" width="1.1" height="1.1"/><rect x="1111.2" y="123" width="1.1" height="1.1"/><rect x="1114.3" y="123" width="1.1" height="1.1"/></g><g transform="translate(1124.0 103.7)"><rect x="2" y="1.500" width="20" height="21" rx="1" fill="#6a96cc" stroke="#1c2c40" stroke-width="1.200"/><rect x="2" y="1.500" width="5" height="21" fill="#2c3c50" stroke="#1c2c40" stroke-width="1"/><text x="10.300" y="17.500" class="fr" font-size="15" fill="#fff">?</text></g><g fill="#b0b0b0"><rect x="1160.3" y="108" width="1.1" height="1.1"/><rect x="1163.4" y="108" width="1.1" height="1.1"/><rect x="1160.3" y="111" width="1.1" height="1.1"/><rect x="1163.4" y="111" width="1.1" height="1.1"/><rect x="1160.3" y="114" width="1.1" height="1.1"/><rect x="1163.4" y="114" width="1.1" height="1.1"/><rect x="1160.3" y="117" width="1.1" height="1.1"/><rect x="1163.4" y="117" width="1.1" height="1.1"/><rect x="1160.3" y="120" width="1.1" height="1.1"/><rect x="1163.4" y="120" width="1.1" height="1.1"/><rect x="1160.3" y="123" width="1.1" height="1.1"/><rect x="1163.4" y="123" width="1.1" height="1.1"/></g></svg>
<span class="t" style="left:1.5px;top:136.0px;font-size:15px;line-height:20px;color:#000;letter-spacing:0.141px;">Browser</span>
<div style="left:0px;top:186px;width:371px;height:127px;background:#fff;border:1px solid #b8b8b8;border-left:none;"></div>
<span class="t" style="left:39.2px;top:187.0px;font-size:15px;line-height:20px;color:#000;letter-spacing:-0.076px;">Favorites</span>
<span class="t" style="left:39.2px;top:206.0px;font-size:15px;line-height:20px;color:#000;letter-spacing:0.020px;">Spatial Bookmarks</span>
<span class="t" style="left:39.2px;top:225.0px;font-size:15px;line-height:20px;color:#000;letter-spacing:0.119px;">Project Home</span>
<span class="t" style="left:39.2px;top:244.0px;font-size:15px;line-height:20px;color:#000;letter-spacing:-0.054px;">Home</span>
<span class="t" style="left:39.2px;top:263.0px;font-size:15px;line-height:20px;color:#000;">/</span>
<span class="t" style="left:39.2px;top:282.0px;font-size:15px;line-height:20px;color:#000;letter-spacing:-0.393px;">GeoPackage</span>
<div style="left:0px;top:302px;width:356px;height:10px;overflow:hidden;"><span class="t" style="left:39.2px;top:-1px;font-size:15px;line-height:20px;">SpatiaLite</span></div>
<div style="left:356px;top:187px;width:14px;height:125px;background:#e4e4e4;border-left:1px solid #b8b8b8;"></div>
<div style="left:357px;top:187px;width:13px;height:14px;background:#f6f6f6;border-bottom:1px solid #c8c8c8;"></div>
<div style="left:357px;top:298px;width:13px;height:14px;background:#f6f6f6;border-top:1px solid #c8c8c8;"></div>
<div style="left:357px;top:201px;width:13px;height:33px;background:linear-gradient(90deg,#fdfdfd,#ededed);border-bottom:1px solid #b8b8b8;"></div>
<svg style="left:357px;top:187px" width="13" height="125" viewBox="0 0 13 125"><path d="M3 9l3.5-4 3.5 4z M3 116l3.5 4 3.5-4z" fill="#505050"/></svg>
<span class="t" style="left:1.5px;top:319.0px;font-size:15px;line-height:20px;color:#000;letter-spacing:-0.339px;">Layers</span>
<div style="left:0px;top:369px;width:371px;height:499px;background:#fff;border:1px solid #b8b8b8;border-left:none;"></div>
<div style="left:0px;top:370px;width:370px;height:19px;background:#308cc6;"></div>
<span class="t" style="left:62.7px;top:370.0px;font-size:15px;line-height:20px;color:#fff;letter-spacing:-0.008px;font-weight:bold;text-decoration:underline;">srtm_37_04</span>
<span class="t" style="left:41px;top:388.0px;font-size:15px;line-height:20px;color:#000;letter-spacing:-0.325px;">Band 1 (Gray)</span>
<div style="left:41px;top:408px;width:16px;height:95px;background:linear-gradient(#ffffff,#000000);"></div>
<span class="t" style="left:65.3px;top:406.0px;font-size:15px;line-height:20px;color:#000;letter-spacing:-0.309px;">3 186</span>
<span class="t" style="left:65.3px;top:485.0px;font-size:15px;line-height:20px;color:#000;letter-spacing:-0.396px;">-12</span>
<div style="left:377px;top:136px;width:775px;height:732px;background:#0c0c0c;border:1px solid #b8b8b8;"></div>
<svg style="left:378px;top:137px" width="773" height="730" viewBox="378 137 773 730">
<defs>
<filter id="bE" filterUnits="userSpaceOnUse" x="278" y="38" width="973" height="929" color-interpolation-filters="sRGB"><feGaussianBlur stdDeviation="14"/></filter>
<filter id="bM" filterUnits="userSpaceOnUse" x="278" y="38" width="973" height="929" color-interpolation-filters="sRGB"><feGaussianBlur stdDeviation="7"/></filter>
<filter id="bF" filterUnits="userSpaceOnUse" x="278" y="38" width="973" height="929" color-interpolation-filters="sRGB"><feGaussianBlur stdDeviation="5"/></filter>
<filter id="bV" filterUnits="userSpaceOnUse" x="278" y="38" width="973" height="929" color-interpolation-filters="sRGB">
<feGaussianBlur in="SourceGraphic" stdDeviation="0.9" result="core"/>
<feGaussianBlur in="SourceGraphic" stdDeviation="2.4" result="h0"/>
<feComponentTransfer in="h0" result="halo"><feFuncA type="linear" slope="1.5"/></feComponentTransfer>
<feGaussianBlur in="SourceGraphic" stdDeviation="5" result="h1"/>
<feComponentTransfer in="h1" result="halo2"><feFuncA type="linear" slope="1.7"/></feComponentTransfer>
<feGaussianBlur in="SourceGraphic" stdDeviation="10" result="h2"/>
<feComponentTransfer in="h2" result="halo3"><feFuncA type="linear" slope="1.2"/></feComponentTransfer>
<feMerge><feMergeNode in="halo3"/><feMergeNode in="halo2"/><feMergeNode in="halo"/><feMergeNode in="core"/></feMerge>
</filter>
<filter id="bR" filterUnits="userSpaceOnUse" x="278" y="38" width="973" height="929" color-interpolation-filters="sRGB">
<feGaussianBlur in="SourceGraphic" stdDeviation="0.7" result="core"/>
<feGaussianBlur in="SourceGraphic" stdDeviation="2.2" result="h0"/>
<feComponentTransfer in="h0" result="halo"><feFuncA type="linear" slope="2.2"/></feComponentTransfer>
<feMerge><feMergeNode in="halo"/><feMergeNode in="core"/></feMerge>
</filter>
</defs>
<g filter="url(#bE)"><rect x="178" y="-62" width="1173" height="1129" fill="#121212"/>
<g fill="#1e1e1e"><polygon points="300,100 640,100 700,150 640,215 520,215 440,195 300,185"/></g>
<g fill="#191919"><polygon points="300,215 440,225 560,250 575,330 540,420 470,470 300,470"/></g>
<g fill="#1b1b1b"><polygon points="620,245 700,250 770,290 770,420 700,440 650,400 625,330"/></g>
<g fill="#0a0a0a"><polygon points="300,192 440,200 510,218 560,225 595,245 610,300 618,345 640,400 700,450 720,503 690,503 640,440 615,400 590,440 550,480 520,470 570,420 595,360 590,300 575,255 540,240 500,232 430,215 300,207"/></g>
<g fill="#424242"><polygon points="850,100 1200,100 1200,440 1100,410 1000,395 930,395 880,330 850,260 830,200"/></g>
<g fill="#2e2e2e"><polygon points="680,130 780,120 860,150 860,260 770,275 700,250"/></g>
<g fill="#505050"><ellipse cx="1010" cy="205" rx="50" ry="30"/></g>
<g fill="#545454"><ellipse cx="1120" cy="230" rx="40" ry="50"/></g>
<g fill="#505050"><ellipse cx="990" cy="355" rx="80" ry="30"/></g>
<g fill="#3a3a3a"><ellipse cx="1110" cy="340" rx="50" ry="40"/></g>
<g fill="#080808"><polygon points="740,435 1000,430 1200,420 1200,530 1000,515 900,505 740,500"/></g>
<g fill="#202020"><polygon points="298,475 740,475 740,505 298,505"/></g>
<g fill="#3a3a3a"><polygon points="780,505 1000,508 1010,620 950,625 870,600 830,560 790,528"/></g>
<g fill="#626262"><polygon points="298,700 780,712 780,850 298,850"/></g>
<g fill="#545454"><polygon points="780,712 1000,720 1000,850 780,850"/></g>
<g fill="#303030"><polygon points="298,848 1000,848 1000,950 298,950"/></g>
<g fill="#2a2a2a"><polygon points="925,740 1010,720 1010,950 940,950 915,800"/></g>
<g fill="#050505"><polygon points="1035,490 1200,490 1200,950 990,950 975,860 990,780 1010,730 1030,700 1012,650 1025,600 1018,540"/></g>
<g fill="#070707"><polygon points="1040,440 1200,420 1200,520 1040,520"/></g>
</g>
<g filter="url(#bM)">
<g fill="#585858"><polygon points="301.2,535.6 323.9,529.2 379.6,516.8 412.8,502.3 448,535.5 495.3,521.7 504.7,515.9 574,526.7 619.6,536.9 630.8,527.6 685.7,535.9 712.6,530 758.7,553 791.1,562.3 823,569.2 874.5,580.2 889.4,619.1 889.7,634.5 848.5,648.9 817.1,679.6 801.7,728.9 786.9,765.6 750.7,760.1 717.7,766.4 700.7,770.2 664.3,776.7 646.1,746.4 610.6,734.5 568.4,738.9 551,721.6 518.5,722.2 493.8,706.2 477.1,719.4 441.7,710.2 413.3,704.9 380,698.7 361.5,706.2 325.6,707.8 302.8,717.8 295.5,675.2 299.8,645.1 309.5,634.9 304.2,599.4 304.7,583.7 302.5,545.6"/></g>
<g fill="#8e8e8e"><polygon points="282.8,556.5 322.2,537.7 360.7,545.7 367.2,539.1 412.6,553.9 432.9,546.5 483.8,559.8 510.2,517.5 534.2,549 580.6,564.9 603.6,544.8 634.6,553.2 651.5,554.8 691.5,547.9 700.8,560.4 739.4,558.7 782.1,583.4 827,595.4 846.2,609.2 862.1,598.4 863.7,625.2 831.1,652.6 800.4,678 779.6,706.2 792.1,740.1 756.3,756.4 722.2,760.2 701.9,766.3 660.9,740.4 624.1,741.7 604.8,738.2 571.4,729.9 559.9,717.8 538.6,703.5 494.7,713.7 475.8,697.4 441.3,697.9 421.1,708.3 378.2,706.1 352.4,701.1 327.4,695.8 301.8,704.1 301.8,679.5 295.6,625.9 293.6,610.6 298.2,583.6"/></g>
<g fill="#c6c6c6"><polygon points="305.3,572.9 327.4,563.5 368.1,568.4 379.5,559.2 415.9,581.6 457,550.8 478.9,569.6 515.6,571.5 534.2,573.3 565,550.6 593.6,565.8 641.9,584.2 657.3,578.9 700.8,567.1 711.5,587.2 761.2,590.6 775.6,615.7 784.8,652 757.1,689.8 735,718.1 695,738.5 669.7,719.3 638.7,725.9 597.7,712.8 590.5,701.8 572.7,711.3 531,700.4 525.5,691.8 473.3,690.4 442.8,681.5 430.9,689.2 405,696.8 369.7,690 348,685.2 316.7,693.4 296.7,693 307,670.1 288,624.3 295.7,604.1"/></g>
<g fill="#e4e4e4"><ellipse cx="415" cy="630" rx="62" ry="36"/></g>
<g fill="#dcdcdc"><ellipse cx="645" cy="635" rx="92" ry="38" transform="rotate(4 645 635)"/></g>
<g fill="#9c9c9c"><ellipse cx="835" cy="606" rx="42" ry="20" transform="rotate(18 835 606)"/></g>
<g fill="#747474"><polygon points="800.4,713.3 816.1,684.2 861.1,681.9 870.9,655.1 902.7,657.1 944,638.8 979.5,652.7 1000.8,665.1 957.1,699 930.2,713 891,716.6 851.1,730.5 849.6,719.5 794.3,750.1"/></g>
<g fill="#dcdcdc"><polygon points="798.7,687.9 840.5,675.2 867.3,673.7 873.6,670.2 929.8,662.4 964.5,650.7 983.9,666.4 942.5,677.2 889.1,689.3 851,712.3 815.4,724.1"/></g>
<g fill="#505050"><polygon points="772.6,409.9 827.7,386 847.6,412 871.4,408.4 920.5,395.6 965.4,390.5 996.6,383.1 1049.1,391.5 1057.8,395.7 1014.7,413.3 952.9,404.6 906.2,425.9 870.8,428.4 846.9,421.3 800.1,425.1"/></g>
<g fill="#484848"><polygon points="1027.8,668.9 1045.8,669.1 1102.9,696.9 1101.7,676.5 1076.9,682.5 1036.2,687.6"/></g>
<g fill="#222222"><polygon points="1096.8,723.5 1132.1,729.6 1161.4,731 1155.4,729.5 1114.5,731.5"/></g>
</g>
<g filter="url(#bV)" fill="none" stroke="#000" stroke-linecap="round" stroke-linejoin="round" opacity="0.5">
<path d="M420 505l2 0M868 293l-2 2M826 241l-2 2M776 235l2-2M930 837l4-4M930 819l4 0M956 719l2-2M390 507l-2-2M1078 403l2 2M742 185l0 2M982 687l2 2M904 603l2 2M810 233l-2 0-2 2M718 159l-2 2M638 527l2-2M896 519l-2-2-2 0M1040 407l2 0M842 401l2-2M784 243l0-2M754 179l2 0M930 857l2 2M822 519l-2-2M1146 415l0 2-2 2M972 409l0 2M1052 403l0 2M802 171l0 4-2 2M846 147l-6 0M922 859l-6 4M968 723l2-2 2 0M852 651l0 2 2 0M934 611l2 2 2 0M448 529l2-2M782 245l0-4M736 173l-4 0M822 163l2-2M794 163l-2 2M732 163l-2 0 0 2-2 2M932 817l6 0M938 755l0 2-2 2M974 739l0 2M954 709l2 0 2-2M970 641l0-2 2 0M628 527l0-4M766 241l0-2-2-2M816 237l0 4-2 2 0 2M816 219l0-4-2-2M730 217l0 2-4 4M736 207l-4-4M732 191l2 0 2 2M794 189l-6 4M810 161l0-2M772 159l-2 2 0 4 2 2M846 139l-2 0M916 865l-6 2M960 703l0 2M966 639l2-2 2 0M872 641l0 6M870 641l0 6M938 635l-2-2 0-2 2-2M794 559l2-2M694 531l-4-4 0-2M692 531l-4-4 0-2M590 527l2-2M446 529l2-2 0-2M532 517l-2-2M1024 411l0 6M978 409l-2 2 0 2 2 2M1076 401l0 2 2 0M840 231l0 4-2 2M828 213l4 4 4-4M830 193l0-2-2-2-2 0M752 193l-2 2 0 2 2 2M820 179l-2 2-2 0M842 175l0-2M776 165l-2 2 0 2M846 137l-2 0M856 665l0-2M972 641l0-2" stroke-width="0.8" stroke-opacity="0.36"/>
<path d="M1044 593l-2 2M1006 413l-2 2M522 391l-2-2M638 363l-2 0M692 247l-2 2M422 243l-2 2M590 505l2 2M560 475l-4-4M496 405l-2 2-2 0M686 373l2-2M726 209l-2 0M506 199l2 2M604 139l2 2M1102 815l-4 4M1080 701l2 2 0 2M702 159l2 0M492 157l2-2M582 375l2 0M536 365l0-2M772 299l2 2 0 2M1022 717l4 4 2 0M910 637l0-2 2 0M740 507l4 0M670 311l-2-2 0-4M548 175l4-4M980 795l2 0 4 6M452 235l-6-6M802 203l-4 0M648 181l0 2-2 2M986 641l2 2 4 0M1032 631l2 2 0 2M774 511l-4-4M388 471l4 4M576 465l2-2 4 0M550 425l0-4M1002 765l0 2 2 2M964 519l0-4M490 503l-2 2 0 2M544 351l0 2M638 323l-2-2 0-2M538 215l0 2M978 817l2 0M946 753l2 2 0 2-6 4M904 613l4 4M1000 555l2 2 8 0M732 515l6 2M842 171l-4-4M976 797l2 0 2-2M1012 737l-2 2 2 2 0 2M978 417l0 6M712 399l-4 0M802 257l-2 2M386 239l2-2M782 237l0-2-4-4M678 209l-2-2 0-2-2 0M984 805l2-2 4 0M660 149l2-2-2-2M1018 687l0-2M1078 675l-6-6M892 601l0-2 2-2M712 517l-4 0M502 465l2-2 0-2M406 463l2 2 4 0M484 291l2 0 0 2 4 4M634 281l2-2 2 0 0-8M844 235l-6 6M598 143l2 0 4-4M932 799l2-2 0-2 2 0 2-2M1070 745l-4-4 2-2 0-2M466 417l-6 2M1044 409l2 2 0 2 2 0M624 177l-6 0M1032 861l0 2M528 427l2 2 0 4 2 2M488 391l-6-2M746 389l4 0 2-2M392 379l4-4M856 339l4 4 2 0M696 243l-4 4M524 153l2 2 4 0M442 513l2-2 0-4M676 495l-4-4 0-2M484 481l2-2 0-2M576 469l0-4M816 295l4-4-2-2M660 271l2-2 0-4-2-2-2-6M424 233l-4-4-2 0M664 201l2 2 0 2-2 2M676 191l2 2 0 4M454 159l0 2M716 517l-2-2-2 2M754 491l2 2M460 481l-2-2M590 387l4 0 2 2 2 0 2-2M574 343l0-4M798 307l-2 2-2-2-2 0-2 2M456 297l-2 2 0 2-4 0M800 235l0-8-2 0M470 185l-2 2-2 0M718 171l-2-2 0-2-2 0-2-2M532 171l2-2M1062 855l2 2 4 0 2 2 2 0M1102 785l-2 2-4 0M982 643l2-2 2 0M764 515l0-4M920 495l2-2 0-2M468 453l-2-2 0-4-2 0M774 415l0 2-6 2M552 379l-2 2 0 4-2 2M690 377l-4-4M670 375l2-2 0-4M684 327l-4-4 0-4M640 297l6 0 2 2 4 0 2-2 2 2M762 243l-4-4 0-4M494 239l4 0 2-2M836 217l2-2 0-2M808 205l-4 0-2-2M500 197l2 2 4 0M1016 835l2-2 2-6M1048 649l-2-2 0-2M1048 589l0 2-2 0-2 2M742 431l2 0 0 2 2 0 4 4 2 0M746 419l2 2 0 10 4 0M1130 411l-4 6M636 355l-2 2M490 329l0-2 2-2M654 307l2-2 2 0 0-2M504 217l-2 2 0 2M864 503l-6 2M1062 463l-4 4M430 245l-2 0-2-2-4 0M832 233l6 6M702 211l2-2-2-6M400 183l-4-4-2 0M678 175l6-4M934 761l0 6M1078 479l2 2 4 0M384 465l0 2 4 4M602 439l6-6 0-2M502 437l0 4-2 2-2 0M694 397l-2 2 0 2M772 387l4 4 2-2 2 0M646 357l-2 2 0 2-4 0-2 2M390 267l0 4M1016 721l2 2 0 2M630 521l4-4M948 501l2-2 4 0 2-2-2-2 2-2-2-2M382 441l-2-2 0-2-2 0M862 407l-4-4M758 409l4-4M492 175l-6-6-2 2M1028 705l2 0 0 2 2 2M1010 653l-4-4M900 627l0 6M652 511l0-2 2-2 0-4-2-2 0-2M570 509l-6 4-4 0M502 497l4 0 2 2M596 489l6 0M394 443l2-2 0-2 2 0 2-2M524 425l2 0 2 2M670 421l-4 4M772 351l4 4M632 345l0 8M486 345l2 2-2 6M690 343l-4 0M696 155l2 2 2 0 0 2 2 0M938 861l2-2 2 0 0-2 2-2M1084 767l4-4 2 0M984 753l-2 2 2 2M964 735l0 4 4 4M890 605l0-2M892 603l0-2M680 495l-2 2-2-2M1140 425l-2 0-6 4M514 411l0-2-4-4M710 381l0-2 4-4M614 313l-2 0M432 277l4 4M744 537l2 0 4-4M738 469l2-2 0-2 2 0 6-4M436 463l2-2 0-2 4-4M1060 447l-2 2-4 0-2-2 0-2M706 439l-2 0-2 2M1050 409l0 2 2 2M718 401l-4 0-2-2M720 363l2-2 6 2 0-2 2-2M794 359l2 0 2 2 4 0 2 2 4-4M550 327l-2 0-2-2M458 293l-2 0 0 4M422 265l-2 2-4 0M566 207l-2 2-2 0 0 2-4 4M532 193l0 4-2 2 0 4-4 4M674 187l0 2 2 2M592 167l6 2M654 149l-2-2 0-4M970 713l-2-2 0-2M1034 585l0 8-2 2M1008 547l2 2 0 6 2 2M996 523l0-2 2-2 0-4M722 475l-2 0-6-6M1110 469l2-2 0-4 2-2M1096 465l2-2 0-2 2 0 2 2 2 0 2-2M796 423l-2 0-4 4 0 2M728 411l-2 2M554 375l0 2-2 2M404 353l0 6M398 269l-2 2-2 0M550 253l2-2 0-2-2-2-2 0M814 247l4 4 2 0 2-2 2 2M644 213l4 0 2 2M740 191l0 4M526 175l6-4M620 155l0-2 2-2M766 149l0 2-4 4-4 0M706 139l-2-2-2 0M1108 817l-2-2-4 0M1090 747l2 0 2-2M1136 719l-4-4 0-2M1000 719l2 2M1002 657l0-6M932 635l0-2M1056 629l2-2 2 2 2 0M1026 543l2 2 8 0 4 4M470 501l4 4 0 2 2 2 2 0M608 467l-2 0-2 2M586 449l0-14M434 441l2 2 2 0 4 4M1144 437l-4 4M428 435l2-2 0-2-2-2M718 419l0-2 2-2 2 2 2 0M522 397l0-6M796 371l2 0 2-2 2 0 2 2M408 361l-2-2-2 0M566 311l0 4M482 289l0 2 2 0M536 273l-2 2 2 2M538 209l2 2 0 2-2 2M562 177l4 0M564 155l-4 0-4 4M1038 861l-2 2-4 0M990 851l4 0 6 4M1034 833l6-6 0-4-4-4M1060 797l0-2 2-2 2-6M988 781l10 0 2-2M1002 743l2 0M1032 691l6 6M1018 691l2 0 0-2-2-2M994 679l6 0 2 2 6 0M894 649l0-8M1006 631l0 6 2 2M422 501l0-2 2 0M516 499l0 2 4 4 2 0 2-2M746 477l4 0 2-2 4 0 2-2M414 455l2-2 4 4 4 0M1030 447l-2-2-2 0-2 2 0 2M842 433l-2 0-4 4 4 4M702 429l0 2-4 4 0 4M814 427l0 4 2 2M392 425l6-6M384 417l4-4 0-2-4-4-2 0M1016 413l0 2 4 4 4 0M480 405l0-2-2-2 2-2M424 367l-2 2-2 0M690 363l-2 2 0 2M576 359l2 0 2-2 2 2M716 351l4-6M594 351l0-8 2-2 2 0 0-2M690 349l-4-6M430 341l4 0M460 335l-2 2M568 329l0-2 2 0 2-2M728 317l-4-4-2 0-2-2M478 305l2-2M748 279l0-4-4-6M724 277l0-8-6 0-2-2M508 251l2 0 2 2 0 2 4 4M454 221l2-2 0-6M650 201l0 2 2 2 0 8M576 193l2-2 2 0M430 183l-2 0 0-2 4-4 0-2M472 181l-2 2 0 2M398 173l-4 6M986 841l2 2 8 0M1102 837l-2-2-2 0 0-2M996 761l6 4M1010 733l0 2 2 2M1112 715l0-6M982 707l0-4M1052 663l6 0M1060 643l6-6 2 0 2-2M972 639l0-2M912 607l2 2 2 0 6 6M994 547l0 2 6 6M1012 531l4-4 4 0M588 525l2 0M566 493l0 4 2 2 0 2M1096 483l-6 0-2 2 0 4 2 2M482 483l0-2 2 0M528 479l6 4 4 0M604 463l0 4M1076 453l2-2 0-2M512 445l-4 0M806 437l-2 6M1072 425l0 2 2 2 4 0 2 2M690 419l-2 0-2 2 0 2-6 6 0 2M568 415l2-2 6 4 6 0 6-4M686 405l0-2-2-2M570 349l0-2 2 0 0-2 2-2M754 325l2 2 2 0M786 305l2 2 0 4M492 285l4 0 0 2 2 0M432 273l2 2-2 2M380 273l-2 2 2 2 0 2-2 0M482 269l4 0 2-2 4 0M486 255l0 4M828 229l4 4M396 209l0-6-2-2M600 201l2 2 4-4 2 0M494 197l6 0M516 195l2 2 2 0 4 4 0 6-2 0M498 165l-2 0-4-4 0-4M512 157l2 2 2 0M552 145l-4-4-4 0M970 855l0 4M940 833l-4 0-2-2M1102 799l-2 2 0 2-2 0-2 2M988 725l2 0 2 2 6-6 4 0M1130 721l0-6 2-2M1010 691l2 0 6-6M1022 547l2 2 16 0M744 535l2-2 4 0M1030 533l4 0M674 521l4 4 2-2 2 0M942 519l-2-2 0-4-4-4M386 503l-2 0 0-2-4-6M750 497l2 0 2-2 0-2 2 0M710 495l-2 0-4-4M452 485l2-2 2 0 0-2 2-2M678 477l0-4-6-2-2-2 0-2-4-4M690 441l-4 4-6 0M1104 433l0 6 2 2M1076 433l2-2 2 0M498 411l0-4-2-2M432 399l4 0 2-2-4-4M1066 399l2 6-2 2-2 0M402 393l-4 0-2 2M658 387l-2 2-4 0M504 353l2 2 0 2M796 337l4-4 4 0 6 4M590 337l0-2 2 0 6-6M446 299l2 2 0 2M834 293l2 2 4 0M730 293l-2 0 0-2-2-2M732 289l-6 0M446 277l-6 0-2 2M396 195l-2 6M640 177l-4 4 0 2-2 2M424 173l2 0 2 2 4 0M604 165l-4 4 0 2M514 163l2-2 0-2M476 155l-2-2-4 0M664 153l-4-4M804 147l2 0 4 4M576 145l-2 2 0 2 2 2 0 6M684 143l-2 2 0 2 2 2 0 2-2 2M998 565l4 0 0 2 4 6M884 519l-2-2 0-2M846 407l0-2 2-2 4 0 4-4M942 615l4 4M956 613l2 2 0 4 4 0M788 169l2-2 2 0 2 2M840 557l-4 6M808 531l0 6 2 2M736 193l0 2 4 0M934 413l4 4 0 4-2 2 2 2M928 803l4-4M790 235l-4-4-2 0-6-6M800 225l-2 0-2 2M1000 589l-6-6M798 561l0-2M814 531l-2 2 0 4-2 2M740 225l-2 2-10 0M850 245l-2-2-2 2 0 4-2 2-2 0-2-2-2 2M800 215l-10 0M720 169l0 2-2 0M978 643l4 0M884 427l4 6 2 0 2-2M814 425l0 2M848 219l0-8-2-2 2-2 0-6M788 163l-2 2 0 2 2 2M812 563l0-2M830 545l-2-2M422 505l0-4M866 295l-2-2-4 0-2 2M824 243l0 4 2 2M778 233l0-2M934 833l0-2M934 819l2 0M958 717l2 0M388 505l-2-2M1080 405l0 2M742 187l-2 2 0 2M932 765l0 2 2 2M984 689l0 2-2 2 2 2M906 605l4 4 2-2M870 405l-2-2 0-4-4-4M806 235l-2 2-2 0-2-2M716 161l-2 2-4 0-2 2M942 749l4 4M640 525l2-2 0-2M892 517l-2 0-4-4 0-2M1042 407l2 2M844 399l0-6 4-4 0-2 6-6M784 241l-2-2 0-2M848 237l-2-2-2 0M756 179l2 2 2 0 2-2 2 2 2 0M932 859l6 2M936 759l-2 2M950 713l4 4M820 517l0-6 4-4 0-2M1144 419l0 2-4 4M972 411l6 6M1052 405l0 2-2 2M1062 399l4 6-2 2M840 147l0-6M916 863l-4 0M972 721l0-6-2-2M902 651l0-2-8-8M842 657l2 0M932 637l0-2M938 613l2 0 2 2M974 611l2 2 0 2 2 0M450 527l0-2-2-2M884 403l4-4M782 241l0-2M732 173l-2 2M824 161l0-2M792 165l0 2M728 167l0 2 4 4M974 741l0 2M958 707l6 0M858 663l-2 0M740 541l4-4M612 531l2-6M628 523l2-2M828 423l2 2 0 8M764 237l-2-2 2-2 0-4-4-4M814 245l0 2M814 213l-4-4 0-2-2-2M726 223l2 2 0 2M732 203l-6 6M788 193l-2 2M810 159l0-2 6-4M772 167l2 2 0 4M844 139l0-2-2 0M930 787l2 2M954 635l2-2 0-4-2-2 0-2 2-2M760 551l4-4M992 543l0 2 2 2M690 525l0-4 4-6M688 525l0-2 2-2M592 525l2-2 0-2M448 525l0-2M530 515l0-2 6-6M1024 417l0 2M780 413l-2 2-4 0M978 415l0 2M960 407l0 2-4 4M838 237l0 2M836 213l2 0M752 199l2 0M816 181l-6-4M842 173l0-2M998 661l4-4M894 651l0-2M930 639l0-6 2 0M598 529l2-6M838 665l0-2M992 679l2 0M916 645l0-2-6-6M866 645l2 2M966 697l2 2 0 4-2 0 0 2" stroke-width="1.0" stroke-opacity="0.5"/>
<path d="M726 439l2 2M1028 561l2-2M544 159l0-2M464 259l4 0M964 757l2-2 0-2M706 453l-4 0M848 199l2-2M724 235l2 2M446 351l2 2 4 0M758 281l0-2 2-2-2-2M994 641l2-2 6 0M532 153l2-2 4 0M1086 803l-2 2-4 0-2 2-2 0M1026 725l6-6M624 297l-6-4M576 283l2-2 0-4 2-2M930 775l-2 0M548 441l6 0 2-2 2 0M906 497l0-4 2-2M724 427l0 4-2 2 4 6M550 397l6 4M756 361l-2 0-2 2-6 2M628 195l2 2 2 0M998 809l2 2 0 2 2 0 4 4M982 491l0-6 2-2 2 0M882 637l0 4 2 0M482 461l8-10M556 413l2-2 0-6 2-2M446 341l2 2 0 2-4 4 2 2M968 783l2-2 6-2M766 413l2 2 0 4M676 357l-4 0-4 4M1088 799l-2 2 0 2M454 529l2-2 0-6M482 397l-6-6-2 0-4 4-2-2M534 353l-6 0-4 4M1054 703l2-2 4 0M858 265l-2-2M660 229l-4-4M996 579l6-2M724 421l0 6M462 169l-4-4-2 0M382 511l-4-6M678 167l2 2 0 2 4 0M408 255l-2-2 0-6-2-2 0-2-2 0M478 317l4 0 2 2M820 157l2 2 2 0 2-2M408 419l0-2M1090 435l4 6 6 0 2 2M984 609l2 2 0 2 2 0M542 355l-2 2-2 0-4-4M792 377l2 2M436 283l2 2 0 2-2 2 0 8M994 629l8 8 2 0M756 291l2-2 0-2-2-2 0-2 2-2M708 205l-2-2-2 2-2-2M990 803l4 4 2 0 2 2M444 415l2-2 0-2-2-2 2-2-2-2 2-2 0-2M588 527l2-2M1088 431l2 2 0 2M410 257l0-2-2 0M468 209l0 4M910 507l-4-4 2-2 0-2-2-2M750 547l0-2 4-4M1086 489l2 2 2 0M404 369l-2 2-2 0 0 2M698 401l-2 2-2 0-2-2-6 0M388 279l6 6 0 2-4 4 4 4M1046 821l-10-10M410 233l0-2 4-4 0-6 2 0M466 159l-4 4-4 0-2 2M1014 559l4 0 6 4 2 0 2-2M578 229l-2 2-2-2-6 6-4 0-2 2M534 441l2 2 8 0 2-2 2 0M652 141l0-4-2 0M408 429l-2-2 0-2 4-4-2-2M792 277l-4-4M442 311l-2 2-2 0-4 4M960 789l4-4 2 0 2-2M970 511l-2-2 0-2 2-2-4-4 0-2M960 755l2 2 2 0M1050 537l0 6-4 4M756 295l0-4M650 217l0 4 2 2-4 4-2 0M764 407l2 2 0 4M410 367l-4 0-2 2M988 629l2-2 2 0 2 2M1000 505l4-4 2 0 2-2 6 0 2-2 2 0M684 365l0-4-2-2 0-2-6 0M814 199l-4 0-4-4 0-6-6-6M944 611l-2 2 4 4 0 2 6 6M390 273l-2 6M636 269l-2-2-4 0-2-2M752 297l2 0 2-2M564 289l2 0 0-2 2-2 4 0 2-2 2 0M956 785l4 4M608 173l-2 2-2-2-4 4M588 325l6 0M420 475l0 6M748 203l2 0 6-6 2 0 2 2 2-2 2 0M1032 517l4 0M602 471l-2 6 6 6 0 2 2 2M1084 813l-2 0M750 301l2-2 0-2M484 401l-2 0-2-2 2-2M396 289l-2 0 0 6M960 749l0 6M984 511l2-2 0-2-2-2 0-2-4-4 0-6 2-2M720 181l-2 2-6 0-2 2-4 0-4-4-2 2M766 325l6 0 2-2M540 161l0-4 2-2M408 435l2-2-2-2 0-2M398 481l0 2 4 4M436 421l4 0 0-2 4-4M974 517l-4-6M1084 433l2-2 2 0M474 167l-10 0 0 2-2 0M670 223l-4 4-6 2M778 353l6-6 0-6 14-14 2 0 2-2M558 207l2 2 0 2-2 2 0 4M462 185l-2-2-4 0-2-2 0-2-4 0-4-4M402 361l-4 4 0 2M930 825l0-2 2 0 2-2M1074 729l0-2 4-4M474 203l-6 2 0 4M952 853l0 2 2 2 2 0M1090 791l0 6-2 2M468 313l2-2 2 2 0 2 6 2M982 635l2 0 0-2 4-4M810 359l2 2 2 0 4 4M718 203l-2 0-4 4-2-2-2 0M574 173l-2 2 2 2M1066 655l6 2M804 511l4-4 0-6 6-6 0-4 14-10M862 283l-2 2-2 0-4-4 0-2M770 315l-2 2 6 6M718 291l-4-4 0-2-2-2-2 0-4-4-4 0M794 225l-2 0-2-2-4 0-2 2-2-2-2 2-2 0-2-2-6 0M614 173l-6 0M568 177l6 0M1034 713l0 2 2 0 2 2 6 2 4 4M434 455l4-4 4 0M512 393l2-2 0-4 2 0 2-2M612 145l2 0 0 2 4 4 8 0 4-4M684 341l-2 0-6-4-4 0-2 2-2 0-4 4 0 4M820 197l-2 2-4 0M550 163l-2 0-4-4M752 161l-2 2 0 2 2 2M456 477l0-4 2-2-8-8-2 0-2-2M1052 535l-2 0 0 2M416 243l-2 0-6-6 0-2 2-2M566 503l-2 2 0 2-2 0-2 2-6-4-4 0M480 171l-4-4-2 0M520 161l6-2 0-2 2 0 4-4M686 313l4-4 6-2M1032 637l0 2 6 6M430 495l4-4 0-4M752 379l0-2 10-10 0-4-2-2-4 0M722 205l-2-2-2 0M972 693l2 2 10 0 2 2M670 489l-10 0-4-4 2-2 0-6 2-2-2-2 0-2-6-6M588 363l4 4 0 6 2 2 6 0 2 2 6-4M460 341l2 2 2 0 4 4 0 8 2 2-2 2 0 10M952 845l0 4 2 2-2 2M1060 661l2-2 0-4 4 0M1078 441l2-2 6 0 2 2 0 4 2 2 12-4M956 415l-2 2 0 2 6 6 2 0 8 10-2 6M502 359l-4 0-4 4-2 0-2 2-4 0M576 339l6-4 0-4 6-6M1050 467l-2 2 0 2M680 225l-4 0-2-2-4 0M638 185l-4 0 0 2-2 2-2 0-4 4 2 2M744 159l4 4 0 2 2 0M1094 787l-2 0-2 2 0 2M484 475l-4-4 0-8 2-2M414 467l2 2 2 0 2 6M528 363l0-2-4 0M574 163l4 4 0 2-2 0 0 2-2 2M1040 701l4 4 6 0 2-2 2 0M824 565l-2-2-2 2-2-2-6-2-4-4M974 519l0-2M818 289l-8-8 2-2-4-4-4 0-4-4M824 191l-4 6M588 377l6 6 2-2 4 4 2 0M434 341l2 0 6-4 4 4M760 325l2-2 2 0 2 2M986 819l4 0 2 2 0 4 2 0 4 4-6 6M582 461l0-4-4-4 0-10 8-8 0-8M482 433l-2 0-4 4-4 0M430 427l6-6M512 401l0-4-2-2 2-2M1094 831l-2-2 0-4-6-6 0-2-4-4M974 637l6-4 2 2M918 519l0-2-2-2-2-6-2 0-2-2M858 503l-2-2-2 0-4-4-2 0 0-2 2-2M1118 421l-2-2-2 2-2 0-2-2-2 2-4 0 0-2-6-2-10-10-2 2-4-4M794 289l2-2 0-4-2 0 0-4-2-2M678 435l-2 0-2-2M532 275l2 2 2 0 6 6 0 4 4 4 0 2M658 145l-6-2 0-2M1024 521l4-4 4 0M544 419l4 0 2-2 2 0 4-4M492 323l-2-2 2-2M772 307l-2 2 0 6M746 257l-4 4 0 2-4 0-6 4M942 761l-2 2-2 0-2 2 0 2-2 0 0 2-4 6M398 417l-2-2 0-4M728 177l-4 4-4 0M426 497l2 0 2-2M426 455l2 0 2-2 2 2 2 0M532 363l-2 2-2-2M910 619l4 4 2 0 4 4 0 2 4 0M502 461l-4-4-2 0-6-6M618 531l0-4 2 0 0-4M714 465l2-6-4-4-6-2M594 509l2-2 4 4 2-2 2 0 6 6 2 0 2 2 4 0M508 499l0 4-4 4 0 2M1052 463l-2 2 0 2M574 159l0 4M484 355l0 6 2 2 0 2M756 233l-4 0M548 199l4 4 4 0 0 2 2 2M646 185l-8 0M464 447l-4-4-2-6M400 437l6 0 2-2M816 433l0 2-2 2 0 4 8 8 2 0 4 4 6 0 2 2 0 2 2 2 2 0M394 271l-2-2-2 2 0 2M682 153l-6 6-2 0-4 4 4 4 4 0M1036 535l0 6 2 0M1096 805l-4 4-2 0-2 2-8 0M460 419l-2 2-4 0M1126 417l-2 2 0 2-6 0M570 389l6 6 0 2 2 2 4 0 4 4M794 169l0 6-6 2-4 4M636 153l-4-4-2 0 0-2M1042 595l0 4M428 511l0-2 4-4 2 0 0-4 2-2M1004 415l0 8-2 0-4 6 4 4 2 6M520 389l0-2-2-2M636 363l-8 0-2-2-2 0M690 249l0 4-6 4M420 245l-2 0-2-2M592 507l0 2 2 0M556 471l0-2M492 407l-6-6-2 0M688 371l0-4-2 0-2-2M724 209l-2-2 0-2M508 201l2 0 4 4 0 6 2 2 0 2M606 141l6 4M1098 819l0 2-2 2-2 0-2-2-2 0-2-2 0-2-4-4M1082 705l2 2 2-2 4 4M866 285l-2 0-2-2M704 159l4 6-2 2 0 2M494 155l2-2 0-4 2-2 0-2-2-2 0-2-2 0-2-2M584 375l2 0 2 2M536 363l-4 0M774 303l-2 2 0 2M1028 721l2-2 2 0M744 507l4 0M668 305l6-4M552 171l0-4-2-2M986 801l4 0 0 2M696 531l0-4-4-4 0-2 4-4M446 229l-4 0-2-2 0-18M798 203l-8 12-4-4-4 4-4-4-4 4-4 0M992 643l2-2M1034 635l-2 2M770 507l-4-4 0-2M392 475l6 6M582 463l0-2M550 421l0-2 2-2M964 515l0-14 2-2M488 507l2 2M544 353l-2 2M636 319l-2-2-2 0 0-4 2-2-4-4 0-2-4-4 0-2-2-2M538 217l0 4-4 4M980 817l4 0 2 2M908 617l2 2M1010 557l2 0 2 2M738 517l2-2M838 167l-2-2M1012 743l0 2 2 2 4-4 2 0 2 2M460 529l0-4-2 0 0-2-2-2M978 423l2 2 8 0 4 4 0 2 4 4-4 6 2 2 0 2M708 399l-6 0-2 2-2 0M800 259l2 6-2 2-2 0-6 6M388 237l0-4M778 231l-8-8M660 145l-2 0M1018 685l0-2-2-2 0-6-2-2M1072 669l0-4-2-2 0-4 2-2M894 597l2-2M708 517l-4-4 0-2 2-2 0-4M504 461l-2 0M412 465l2 2M490 297l0 10-4 4 0 2M638 271l-2-2M838 241l0 6-4 4M1068 737l4-4 0-2 2-2M1048 413l4 4M618 177l-4-4M1032 863l-4 4M532 435l-2 2 4 4M1002 413l2 2M482 389l-2-2-4 0-6 6-2 0M752 387l0-4 2-2-2-2M396 375l2 2 0 4 2 2 0 2M862 343l2 2 4-4M672 489l-2 0M486 477l-2-2M658 257l-4-4 0-2M418 229l-2-2 0-6M454 161l0 4-4 4M756 493l4 4M458 479l-2-2M600 387l2-2M574 339l2 0M790 309l-2 2 2 2-2 2M450 301l-4 4 0 2-2 0-2 2 0 2M798 227l-2 0-2-2M466 187l-2 0-2-2M712 165l-4 0M534 169l0-2 6-6M1072 859l2 2-2 2 0 2 2 2M1096 787l-2 0M548 387l2 2-4 4 4 4M672 369l-4-4-2 0M680 319l6-6M656 299l2 0 2 2 4 0 2-2 6 0M758 235l-2-2M500 237l2-2 0-8-2 0-2-2-2 2M838 213l8-8 2-6M1020 827l4-4 0-10 2-2-2-2 0-4 12-12M986 525l-2-2-2 0 0-2-2-2 0-2 4-6M752 437l2 2 4 0M752 431l2 2 0 2 4 4M634 357l0 2-2 0-4 4M492 325l0-2M658 303l2-2M858 505l0-2M1058 467l-2 0-2 2 2 2 0 2-2 2-2 0-4-4M838 239l0 2M394 179l-2 0M844 655l0 2 2 0 2-2 4 0 4-4M1084 481l2 2 0 6M608 431l0-2 2 0 4-4M780 389l2-2 0-2 6-6 2 0 2-2M954 743l2 2 0 2 2 0 2 2M1018 725l8 0M954 491l6-6M858 403l8-10 0-4 2-2-2-2 0-2-4-4 0-8 2-2M762 405l2 2M484 171l-4 0M1032 709l0 2 2 2M1006 649l6-6 4 0 4-4M900 633l2 0M800 561l-6-6 0-2-2-2M652 499l-2-2 0-4-2-2-2 0-2-2 0-2M560 513l-4 0-2-2M602 489l2 0 4 4M776 355l2-2M632 353l2 2 0 2M486 353l-2 2M686 343l-2-2M944 855l8 0M1090 763l2 0 2-2M968 743l2 2 2 0 0 2M1132 429l-4 4-6 0-4 4 0 2-2 2-4 0-2 2 0 2M510 405l2-2 0-2M714 375l2 2 2 0 4-4 6-2 4-4-2-2 4-4M612 313l-2-2 0-2-12-12M436 281l0 2M750 533l4 0 4 4M748 461l2 0 2-2 2 2 6 0 2-2 6 0 2 2 2 0 10 6M1052 445l-8-8 2-6M702 441l-2-2-6 0-2 2 0 6-6 6M730 359l2-2M808 359l2 0M546 325l-4 4-2 0-4-4 0-2-4-4 0-2M416 267l-6-10M526 207l-2 2-2-2-4 4 0 2-2 2M598 169l2 2 0 6M998 515l-2-2 2-2 0-4 2-2M714 469l0-4M1114 461l6-4M1106 461l8 0M790 429l0 6 2 2 0 2 4 4M726 413l-2 2 0 2 2 2-2 2M404 359l-2 2M548 247l0-4-2-2 0-2-2-2-4 0M824 251l2-2 2 2 2-2 4 4M650 215l0 2M740 195l2 0 4 4 0 2 2 2M758 155l-6 6M1002 721l2 0 2 2 6 0 4 4 2-2M854 665l0-8M1002 651l2-2 2 0M932 633l4-4M1062 629l0 2 2 2M478 509l2 0 2 2 6 0M604 469l-2 2M442 447l4 0M1140 441l0 2 2 2 0 6-2 2-6 0-2 2 0 6M428 429l2-2M566 177l2 0M556 159l-2 0-4 4M1000 855l4 4 2 0M1036 819l2-2-2-2 0-4M1004 743l2 2 6 0M1038 697l0 2 2 2M880 651l-2-6M894 641l0-4M424 499l2-2M524 503l4-4 2 0 6-6 2 0M758 473l2 2 6 0 2-2 4 4 10-10M424 457l2-2M840 441l2 0 2 2M398 419l0-2M1024 419l0 2-8 8 0 4-8 8 0 2M420 369l-2 2-4 0-4-4M582 359l2 0 4 4M598 339l0-2 4-4M458 337l0 2 2 2M572 325l2-2 0-4 2-2M720 311l-4-4-4 0-2-2-2 2-2 0-2-2M480 303l4 4 0 2 2 2M716 267l-2-2 0-2M652 213l-2 2M580 191l4-4 0-2 2-2 2 0M432 175l4-4 0-8M1098 833l-2 0-2-2M1058 663l2 0 0-2M972 637l2 0M1020 527l4-4 0-2M568 501l-2 2M538 483l2-2 0-2 4 0 2-2 2 0M604 467l0 2M1078 449l-2-2 0-4 2-2M804 443l2 2 0 2 6 6M1080 431l2 2 2 0M680 431l0 2-2 2M758 327l2-2M498 287l2 0 2 2 6 0 4 4 0 6 6 6 2-2 2 2 2 0M608 199l2 0 2-2M516 159l2 0 2 2M934 831l2-2 0-4-2-2 0-2M680 531l0-2 2-2 0-4 4-4M1034 533l2 2M666 463l0-6 2-2-4-4 2-2 0-2-2-2 2-2-2-2 0-2-4-4-2 0-2-2M1064 407l-2 2M506 357l-2 2-2 0M810 337l4-6M726 289l-4 4-2 0-2-2M438 279l-2 2M470 153l-4 6M810 151l6 2 4 4M576 157l-2 2M1006 573l-4 4M718 531l6-6 4 0 10-8M856 399l0-6-2-2 0-2 4-6 0-2-2-2 2-2 2-6M848 665l0-4M986 649l6-2 0-4M810 539l0 8-2 2M938 425l6 6 2 0 2 2 0 2 6 6 6 0 6 6M728 227l-6 6 2 2M838 251l-4 0M892 431l2 0 2-2 2 2 4 0 6 6M828 543l-2 0-6 6-2 0-2 2-2-2-6 0M960 717l2 0 2-2 0-8 2-2M856 663l-2-2M926 639l-2-2 0-4 2 0 4-4M854 381l2-2M766 181l2 0 2-2-2-2 0-2 2-2M954 717l2-2 2 0 2 2M824 505l6-6 0-4 6-6 0-2 4-4 4 0 4-4 0-2 2-2M902 399l-6-6 0-2-2-2M800 177l-2 2M912 863l-2 2M960 705l6 0M448 523l2-2 0-6M888 399l6-6-2-2 2-2M730 175l-2 2M830 433l0 4 2 0 6 6 2 0 2 2 2-2M764 547l2-2 0-2-2-2 0-8-2 0M956 413l0 2M826 189l-2 2M810 177l-6 0-2 2-2-2M600 523l2 0 2-2" stroke-width="1.4" stroke-opacity="0.66"/>
<path d="M482 445l-2-2 0-2-2 0-6-4M834 565l-4-4-2 0-6-6-2 2-2 0-2-2-2 2-2-2-2 2-2 0M602 267l-6-6 0-2-2-2M986 697l10-8 2 0 2-2 2 0 4-4 2 0 0-2 2-2 2 0 0-4 2-2M1090 403l-4 0-6 4M732 353l-6-6-2 2-6-6M668 361l-2 2 0 2-6 6-4 0-6 4-2 0-2-2-4 4-2 0-6-4M434 317l-10 10-2 0 0 2-2 2-6-6-2 0-2 2-4-4-2 0-8 8M818 365l8-8 4 0 2-2M1036 793l0-2 4-4 0-8 4-4 0-2 2-2-4-4 2-6 4-4-2-2 0-2M850 493l2-2 0-6 2-2 4 0 6-6M696 517l6-6 0-2 8-10-6-6 0-2-2-2 0-4-2-2M1076 807l-8-10M944 445l4 4M554 511l-2-2 0-2-6-6 0-2-4-4 0-4 2-2M788 315l6 6 2 0 4 4 4 0 10 6M922 391l-2 0-2 2-4-4-4 0-8-8 0-2-6-6-2 2-16-16 0-2-2-2-2 0M696 183l-6 0-2 2 0 2-2 2 0 4-2 2M1048 723l2 2 2 0M932 519l0-4 4-4 0-4 2-2 0-2-2-2 2-2-2-2 2-6 2-2 6 0 2 2 2 0 2-2 0-2 4-4M488 511l4-4 6 0 2 2 4 0 6 4M512 513l2 2M516 513l4 0 2 2M758 439l2 2 4 0 2 2 0 2 4 4M652 389l-4-4-2 0-6-6-2 0-6-6M1020 781l2-2 0-2 6-6 0-2 6-6M450 515l-2-2 0-2-10-8 0-2-2-2 2-2-2-2 2-2-4-6M760 451l6-4 2 2 2 0M846 157l-2 0-8 8-6 0-4-4 0-4 4-4M602 183l4 0 2 2 0 4 2 2 0 2 4 4M830 479l6-4 2 2 8-8 2 0 4-4 8 0 4-4 0-2M984 757l4 4 2 6 2 0 4 4 4 0 2-2 4 0 2-2 6 2M920 605l0 2 2 2 0 6M614 525l2 0 2-2 2 0 4-4 4 0 2-2M398 311l0 4-2 2 0 6 2 2-2 2 0 4M1008 639l4 0 2-2 2 0 2 2 4 0 4 4 4 0 2 2 2-2 2 2 2 0M678 277l0-2 2-2-4-4 0-2-4-4-2 0-6-6-2 0-4-6M618 507l6 6 2 0 4 4M614 401l0-2-6-6 0-2-2-2M452 381l2 2 0 2 4 4 2 6M444 167l-2 2-6-6M530 385l-2 0-2-2-6 0-2 2-4-4 0-4-2-2-2 0-2-2-4 4-6 0-4-4 0-2-2 0-2-2-4 0M968 453l8 8M1006 445l0 2 2 2 0 2-2 2 4 6-2 2 2 6M866 365l2-2 0-2 4-4M394 219l-2-2 0-6-2-2 0-6-2-2-2 0M490 265l2 2 2 0 0 2 4 4 2 0 2 2 4-4 0-4 4-4 2 0 6-6 6 0 2-2 2 0 4-4 2 0 4-4-2-6 2-2 2 0 0-2M982 703l0-4 2-2 2 0M676 287l2-2 0-4-2-2 2-2M656 397l-2-2 0-4-2-2M666 349l0 10 2 2M834 255l4 4 2 0 2 2 0 2-6 4M772 173l2 0 0 4 2 2 0 4 4 4 0 2 6 6M944 813l8 0 4-4M762 535l0-8 2-2 0-2 2-2 0-4 2-2M392 409l-4-4-4 0M388 225l2-2 2 0 2-2 0-2M942 815l0-2 2 0M1104 443l2-2 4 4 2 6 6 6 2 0M666 401l-4-4-6 0M786 181l-2 0-2 2 0 4 4 4 0 4M758 499l4-4 2 0 6-6 2 0 10-10 2 0 4-4 2 0 2-2 4 0M496 445l-2 2-4 0-2-2-6 0M390 299l8 12M540 153l-2 0 0-2 2-2 0-4 4-4 0-4M670 403l-2-2-2 0M834 507l6-6-2-2 4-4 2 0 2-2 4 0M524 369l-2 2 2 2 2 0 8 8-4 4M796 177l-4 0-6 4M780 319l2-2 4 0 2-2M676 299l2 0 0-6-2-2 0-4M1060 707l2 6M524 365l0 4M978 861l4 4 0 2M456 165l-4 4-2 0-2-2-4 0M1062 703l0 2-2 2M972 707l2-2 6 0 2-2M752 503l4-4 2 0M688 195l-4 0M970 859l2 2 2-2 2 0 2 2M876 519l0-2 2-2 4 0 4-4 0-4 2-2 4 0 2-2 0-2 4-4 0-2 4 0 4-4 2 0 2 2 6-6 2 0 4 4 8-8M416 215l-2 0-2-2 0-8M630 145l0-2 2-2 0-4M1034 475l2 2 0 2-4 4 0 2-8 8 0 2-2 2M480 263l4-4 2 0 4 6M514 217l-2 2 0 4-2 0-2-2-2 2-2 0M698 197l-2-2-8 0M966 857l2 0 2 2M506 445l-2 2-2 0-4-4-2 2M966 705l2 2 0 2 2 0 2-2M1014 813l0-4 4-6-2-2 0-6-2-2 4-4 0-2 2-2 0-4M472 261l6 0 2 2M984 775l2-2 2 0 2 2 6 0 4 4 2 0 6-6 2 0 4-4M796 377l4-6 6 0 2 2 4 0 6-6 0-2M844 515l-6-4-6 0 0-2 2-2M1008 819l6-6M726 247l0 2 6 0M556 219l-2 2 0 4-2 0-2 2M406 415l-4-4-8 0-2-2M760 167l6 0 0 2 4 4 2 0M980 777l2-2 2 0M628 207l2 6-18 18M908 867l2 0M846 519l0-2-2-2M560 401l4 0 8 8 2 0 4-4 2 2 4-4 2 0 2 2 6 0M970 749l2-2 6 2 2 2 0 4 2 2 2 0M490 519l0-6-2-2M744 511l8-8M1032 557l0-2 4-4 4 0M616 291l-8-8 0-2-2-2 2-2-4-4 0-4-2-2M398 239l-2 0-4-4-2 0-2-2 0-2-2-2 0-2 2-2M632 201l-4 6M484 315l0 4 2 2 2-2 6 0 4-6 10 0 2 2 2-2 2 2 2-2 6 0 4 4 6-6M724 241l0 4 2 2M996 575l6 0 0 2 2 2 2 0 8 8-2 2 4 4 6 0 2-2 2 2 4 0 2 2-4 4 2 2M576 177l6 0 8 8 2-2 10 0M512 449l-4-4-2 0M764 197l2 0 2 2 0 4 4 4 0 2M740 515l2-2 2 0 0-2M728 441l6 4 2 0 2-2 6 0 2 2 2 0 2-2 10 8M1030 559l2-2M544 157l-4-4M468 259l2 0 2 2M966 753l4-4M702 453l-2 0-2 2-10 0-2-2-2 0M848 193l0-2 2-2M726 237l0 2-2 2M452 353l0 6-4 4 10 10 0 2-6 6M1002 639l2-2 2 2 2 0M1032 719l6 4 2-2 4 4 2-2 2 0M618 293l-2-2M580 275l2-2M558 439l4 4 4 0 6-6 0-2 12-14M556 401l4 0M746 365l-2-2-2 0-10-10M632 197l0 4M1006 817l2 2M490 451l-4-4-2 0-2-2M840 565l-2 0-2-2-2 2M976 779l2 0 2-2M768 419l-2 2-2 6-8 8 2 2 0 2M456 521l0-2-6-4M468 393l-6 4M524 357l0 4-2 2 2 2M1060 701l2 2M856 263l-6 0-2 2-2-2-4 4-2 0-2 2M684 171l2 0 8 8-4 4M402 243l-4-4M408 417l-2-2M1102 443l2 0M794 379l2-2M436 297l-2 2-2 0-4 4 0 2 4 4-2 2 0 2 4 4M702 203l-4-4 0-2M590 525l4-4 0-2 2 0 2-2 2 0 4 4 2 0 2 2 6 2M754 541l4-4 2 0 2-2M1090 491l6 6M686 401l-4 0-2 2-2-2-4 0-2 2-2 0M394 295l-4 4M1036 811l0-2-2-2 0-2 4-4 0-6-2-2M416 221l2-2 0-2-2-2M552 519l0-6 2-2M966 499l10-14M1046 547l0 2-2 2M834 393l6 0 0-2 2-2-2-2 0-2 2-2 0-2-2-2 2-2 2-6 12-14M800 183l-4-6M628 265l-2-2-2 2-2-2-2 0-2 2-6 0-4-4-6 6M600 177l4 6M608 487l0 6 4 4 0 6 4 4 2 0M1082 813l-6-6M700 183l-4 0M774 323l4-4 2 0M558 217l-2 2M446 175l-4-4 0-2M934 821l4-4 2 0 2-2M956 857l4 4 4-4 2 0M574 177l2 0M1072 657l2-2M828 481l2-2M770 223l-2-2-4 4-2-2M630 147l0-2M664 347l2 2M752 167l2-2 6 2M652 465l0-2 2-2-2-2 0-2-4-4M468 369l-2 2 0 2M968 441l-2 2 0 4 2 2 0 4M486 365l-4 4M1048 471l-2 0-6-6-2 0-6 4 0 4 2 2M546 293l8 8M618 517l2 2 4 0M1004 439l4 4-2 2M516 215l-2 2M706 169l0 2-2 2-2 0 0 4-6 6M674 301l2-2M1022 745l6 0 2 2 2-2 4 4 4 0 2-2 2 0 2 2 4-4 2 0 2-2M994 445l2 2 2 6 2 0 8 10M486 313l-2 2M834 251l0 4M672 299l2 2M856 651l2 0M614 425l-2-2 0-4 2-2-2-2 0-2 4-4-4-6 2-2M864 369l0-2 2-2M792 551l-2 2-6-6M734 361l0-2-2-2 0-4M782 467l4 0 2-2 4 0 6 6M532 317l2-2 0-2M796 443l12 12 2-2 8 0 2 2 0 2M844 443l4 4 8-8 2 2 6 0 10 8 4 0 2 2M524 305l6 6 2 0M686 519l6-6 4 4M656 433l-2-2 0-6-2-2 0-8 2-2 0-2M840 295l8-8M860 371l2-2 2 0M808 549l-6 0M908 437l4 4 2 0 2 2 2-2 2 2 2 0 2-2 2 0 4-4 6 6 2 0 2 2 4 0M850 475l2-2 2 2 4 0 2 2 2-2 2 2M894 389l0-8-4-4-2 0-2-2 0-2-4-4 0-2-10-10" stroke-width="1.9" stroke-opacity="0.82"/>
<path d="M472 437l-2 0-2 2-8 0-6-6M808 557l-4-4 0-2-6-6-2 0-2-2-4 4-2-2-2 2-4 0M522 515l6-6 2 0 10-10-2-2 0-4 4-4 2 0 2-2 0-4 2-2 0-4 8-8 0-2 6-4 0-2 6-6-2-2 0-2 2-2 2 0 6-6 0-2 4-4 2-6 4-4M1014 673l4-4 4-12 6-2 0-4 2-2 4 0 4-4 2 2 4 0 4-4 2 0 2-2 0-2 2 0 6-6 4 0 2 2 8 0M1080 407l-4 4-6 0-2-2-2 0-2 2-2-2-4 4-6 0 0 4 2 2 0 4 4 4-4 4-8 0-2-2-6 0-16 16 0 2 2 2-2 2 0 2-2 2-2 0-4 4 0 4-6 6 2 2-2 2 6 6 0 4 4 4 0 2 2 2 0 2 2 2 2 6M718 343l-2-2-4 0-2-2-2 0 0-4-2-2 0-10 2-2 0-2-2-2 0-2-2-2-2 0-4-4 0-2 4-4-2-6 4-4 0-4-2-2 0-8-4-4-2 0 0-2-4-4 0-2 2-2-2-2M634 373l-2 0-4-4 0-4-4-4-2 0M782 557l2 0 2-2 0-4-4-4M396 331l-2 6-4 4 0 2-2 2 0 14 10 10 0 2 2 2 0 4 4 4-4 4M832 355l2 2 4 0 6 4 4-4 10 0 12-12M1046 753l4-4 2 0 2-2M652 529l-4-4 0-6-2-2-2 0-2 2-2-2-2 0M864 477l2 2 4 0 2-2 2 2 10-8 6 0 4-4 2 2 2 0 4 4 6 0 4-4 2 0 8 8 2 0 2-2 10 8 2 0 4-4 2 0 2 2 2 0 2-2 4 4 4 0 2 2M700 483l0-2-2-2 2-2 0-4-2-2 0-4-6-6-2 0-4-4 0-2-4-4-2-6-6-6 2-2-2-2 0-2-2-2-2 2-6-6 2-2-6-6 0-2-22-22-2 0-2-2 0-2-4-6M1068 797l-2-2 2-2-4-6 2-2-8-8 0-4 2-2-2-6 2-2-4-6 2-2 0-2-4-4 0-2M814 331l2 0 4-4 2 2 2-2 6 6 0 2-2 2-2 0-4 4 0 2 6 6 0 2 4 4M838 663l6-4 2 2 4 0 6-6 0-2 2-2 2 2 6-6 8 0 2-2 4 0 6-6 2 0 2 2 4-4 4 0 4-4 2 2 2-2 2 2 2-2 10 0 4-4 2 0 2-2M874 355l-4-4 0-6M684 195l-2 2-6 0 0 6-2 2-4 0-2 2-4 0-4 4 0 2 2 2-6 6 0 4-2 0-4 4-2 0-2-2-6 0 0 2-2 2-6 2-4 4-6 0-2 2-8-8-4 4-4 0-2 2-2-2-2 0-2 2-4 0-6 6-2 0-2 2-4 0M402 501l2-2 0-2-4-6 0-2 2-2 6-2 4-4 8 0 2 2 2-2 2 0 4-4M770 449l2 2 6 0 2 2 4-4 4 4 2 0 2-2 2 2 6 2 4 4 2-2 2 0 6 4M930 781l2 2 0 6 4 4 4 0 16 16M1034 763l8-8 2 0 2-2M434 487l-2-2 0-6-2-2M830 153l2-2 0-2 2 0 2-6 2 0 4-4 0-2M614 197l4 4 0 2-2 2 0 2-2 0 0 2-6 6-2-2-6 6-6 2-6 6 0 2-8 8-2 0-6 4-4 0M1014 769l4-4 2 2 2 0 2-2 4 0 2-2 4 0M922 615l0 2 2 2 0 4 2 2 0 2 2 0M630 517l8 0M894 341l-6-6-4 0-10-10-12 0M460 395l0 2-4 4 0 2-6 2M436 163l-8-8-2 0-4-4-2 0-2 2-4 0-2 2-4 0-8 8-2 0-2 2 0 2-2 2 0 6-2 2 0 2-4 4-6 0-2-2-2 2M486 369l-6 0-2 2-2 0-2-2-2 2-4 0-4 4 0 2 2 2-4 4 0 10-2 2M872 357l2-2M540 237l-4-6-6-2M786 195l-2 6-12 8 0 2-6 10-2 0-4 4-2 0-2 2 0 2-10 10-2 0-2 2-4 0-4 4-2 0-2 2 4 4 0 2-2 2 0 2-4 4-6 0-2 2-2-2-2 2-2 0M1120 457l2-2 6 2 2 2 2 6M930 483l2-2 2 0M532 311l2 2 4-4 2 2 6-2 0-4 4-4 4 0 6 6 0 4 4 4 2 0 2 2 10 0 2-2 2 2 8 0 0-2 4-4" stroke-width="2.6" stroke-opacity="0.93"/>
<path d="M454 433l2-2-2-2 2-2-2-2 2-2-4-4 0-2-4-6 4-4-14-14-4 0-2 2-6-4-2 2-2 0-2-2 0-2-10 0-2-2-4 0-2-2-2 0-2 2-2 6-2 2-2 0-4 4 0 2-6 6-4 0M782 547l-4-4 0-4 2-2 0-6-2-2 0-4-2-2 0-2-4-4 0-2-4 0-6-6 0-4 2-2 0-2 2 0 2-2 0-2 14-14 2 2 2-2 2 2 4-4 0-2 4-4 0-2 2-2 2 0 2-2 4 0 12-12 2 0 4 4 2 0 6 6 2 0 4-4 0-2 2-2 2 0 4-4 6 6 2-2 4 0 2 2 14-10 10 0 2-2 2 0 2 2 2 0 8 8 4 0 4 4 2-2 4 0 2 2 2-2 6 0 2-2 2 0 2-2 0-2 4 0 2-2 2 2 2 0 4-4 2 0 2-2 6 6 4 0 2 2 2-2 2 0 6 6 6 0 6 6 2-2 16 16 2 0 4 4-2 2 4 4 2 0 4 4 2 0 6 6 2 0 2 2 0 4 6 6 2 0 0 2 4 4 0 4 4 4 0 2-4 6 0 6 4 4-2 2 0 4 4 4 0 2-2 2 0 2 2 2 0 4 6 4M586 427l0-4-2-2 4-4 0-4 6-6 0-2 2-2 2-6 2-2 2 0 4-4 0-2-4-4 4-4-2-2 8-10 0-6 2-2-4-4 0-2 2-2-4-4 2-2-6-6 0-4-2-2 0-2-8-8 2-2-4-4 0-2 4-4-4-4 0-2-2-2 8-8-10-10 4-6-8-8-2 0-4-4 0-4 4-4-6-10 2-2-6-6-2 0-2-2-2 0-4-4-2 0-12-12-2 2-2 0-2-2-8 0-4 4-8 0-2 2-4-4-2 0-2 2-10-8-2 0-6 4-6 0-2-2-6-2-4-4-4 0-4-4-6 2-4-4-2 2-2 0-4-4-2 2-2 0-2-2-6 0-2-2-6 0-2-2-8 0-2-2-2 2-4 0-2-2-12 0-2-2-4 0-2-2-2 0-2 2-2 0-2-2-4 0M594 257l-4-4-2 0-4-4-2 0-6-6-4 0M692 263l-2 0-6-6-2 2-2-2-4 0-6-6-2 2-4 0-2-2-8 0-4-4-4 0-6-6-2 2-4 0-4 4-6 0-2-2-4 0-6 6-2 0-2-2-4 0-8 8-2 0M622 361l-6-6-2 0-2-2M870 345l-2-6 4-4-6-6-2 0 0-2-6-6 0-6-4-6 2-2-2-2 0-4 2-2 0-4-8-8 4-4 0-2 2-2-8-8-2 0-2-2-4 0-2-2-6 4-6-6-10 8-2-2-4 0-2-2-2 0-2 2-4 0-4 4-2-2-8 0-2-2-2 0-4 4-2 0-2-2-4 0-2 2-2 0-2-2-2 2-6 0-6-6-6 0-2-2-2 2-4 0-2-2-2 2-4-4-10 0-8-8-2 2-4 0-2 2-2-2-2 0-4 4M1054 747l0-8-6-6 0-2 2-2 0-2 2-2 2 0 4-4-2-2 6-6 2 2 2 0 2-2 10 10 4-4 2 0 6-6-2-2 4-4 2 0 2-2 2 2 8 0 2-2M638 517l0-2 2-2 0-4 4-4-4-4 0-2-2-2 6-10-4-4 0-6 4-4 0-4-4-4 0-4 10-10-4-4 0-2-2-2 2-2-6-6 0-2-8-8 0-2-2-2 0-2 2-2-6-4 0-4 2-2 0-2-2-2 0-8 2-2-2-2 0-2 4-4 0-2-10-10 0-2 2-2 0-4-2-2 2-2M960 485l6 2 2-2 8 0 4-4 4 0 6 6 2 0 2-2 6 6 8 0M928 627l2 2 12 0 6-6 2 2 2 0 2-2 4 0 4-4 4 4 2-2 6-2 4-4 2 2 2 0 6-4 10 0 2 2 2-2 4 0 2-2 2 2 6-4 2 0 2 2 10-10 4 0 2 2 2 0 4-4 4 4 4 0 6 6 2 0 4 4 2-2 2 0 6 6M430 477l0-2 2-2 4 0 10-10 0-2-4-4 0-6 8-8 0-2-2-2 6-6M956 809l2 0 4 4 0 2 2 2 0 6 4 4 2 0 6 6 6 0 2-2 6 0 0 2 4 4 2 6 2 2 2 0 6 6 0 2 2 2-2 2 0 2 2 2-2 2-2 0 0 2-6 2" stroke-width="3.4" stroke-opacity="1.0"/>
</g>
<g filter="url(#bV)" fill="none" stroke="#000" stroke-linecap="round" stroke-linejoin="round" opacity="0.8">
<path d="M666 861l-2 0M914 801l-2-2M472 787l2 0M574 773l2 2M734 757l0 2M406 755l0 2M656 655l-2 2M864 621l2 2M410 607l2 2M970 565l2 0M812 565l0-2M920 559l0-2M834 545l-2 0M946 523l-2-2M1048 393l-2-2M1078 385l2 0M974 363l-2 2M1146 337l-2-2M1002 273l0-2M922 265l2-2M1060 245l-2 2M1000 187l-2 2M1010 179l-2 0M984 175l2 0M1146 163l-2 2M890 155l-2-2M692 861l-2 2M584 861l2 2M798 853l2 0M472 849l-2 0M402 849l-2 2M742 845l0 2M562 843l0-2M810 835l2 2M766 801l-4 4M726 801l2 0M710 801l-2 0M636 789l-2-2M876 783l2-2M894 773l-2 2M552 747l2-2M382 737l0-2M962 729l0 2M676 683l-2 2M940 679l-4 4M484 675l2-2M890 669l0-2M390 669l-2-2M858 665l-2-2M612 625l0-2M840 611l-2-2 0-2M694 607l-2 0M926 597l-2 2M848 591l0-2M478 591l0 2M960 577l2 2M662 563l-2 2M500 545l2-2M568 533l-2 0M990 369l4 4M924 335l-2-2M880 293l2 2 2 0M992 273l-2-2M1124 251l0 2M1142 239l4 4M1018 205l2 0M956 205l-2 2-2 0M924 159l2-2M1034 139l-4 0M680 867l-4 0M588 829l-2-2M822 825l2 0 2-2M794 811l-4 0M498 811l-2-2M814 799l-4-4M634 799l2-2 2 0M834 791l0 2M824 787l-6 0M928 763l2 0 2 2M542 755l-2 0M436 755l-2 0M400 745l-2 0M928 743l-4 4M412 741l-2-2 0-2M440 735l-2 0 0-2M556 717l2 2M642 691l2 2M978 683l4 4M664 675l0 2M926 665l-4-4M672 629l-2 0M486 623l0-2M532 617l4 4M690 595l-2 0M962 555l-2 2 0 2M868 551l-4 0M638 543l0-2 2-2M870 413l0-2M964 355l-4-4-2 0M1104 343l4 4M1054 341l2 2M1146 329l-2 0M1014 313l0 4M1038 293l0-2M994 291l-2 0M978 279l-2-2M892 275l0 2M1048 243l0 2M1122 219l-2 2M1098 211l-2-2-2 0M966 187l-2 0-2 2M1024 147l0-4M1078 145l-2 2M484 851l0 2M528 845l0 2-2 2M442 843l-2 6M488 805l-2-2 0-2M826 797l0 2M868 791l0 2M608 789l-6 0M722 781l-2-2M418 781l2 0 2-2M528 749l4 4M450 749l-2-2M386 749l2 0 0 2M566 747l2-2 2 2M944 745l-2 2M768 737l2 0M670 727l-2 2M896 717l0 2M582 717l-4 0M780 707l-2 2 0 4M570 677l-4-4-2 0M454 677l-2-2M462 667l-4-4M464 629l-2-2 0-2M578 613l2 2 0 2M920 571l-2 2M876 569l2 2-2 2M598 569l2 2 2 0M466 557l2-2M384 545l0-4M702 541l0-2-2-2M926 533l2 0 2-2M840 403l2-2M1106 363l-4-4M1014 347l0 2 2 0M1080 333l2 2M974 333l-2 0M944 317l-2 0M1068 255l-2 2-2 0M1036 247l-2 2-2 0M914 237l2-2 2 0M856 235l-2 0-2 2M1036 215l0 6M1140 209l0 4M888 203l0 2 2 0 2 2M990 199l-2 2-4 0M1148 197l4 0M1076 191l2 2M1096 173l0 2 2 2M936 169l-2-2M962 167l2 2 2 0M896 145l-4-4M1150 143l2 2M446 857l-2 2M480 855l2-2M840 835l-2 0M926 833l0-2 2-2M824 817l2 2 0 2M814 813l2-2 2 0M438 811l-2 2 0 2M562 803l-2 0-2-2M532 795l0 2M886 789l2 2 0 4M884 779l2 2M812 765l-2 2 0 2M932 755l4 4M852 755l0 2-2 2M764 749l2 2M412 735l-2-2 0-4M888 723l-2 2-2 0M900 717l0 4M944 713l2 0M888 695l2 0M830 683l2-2 0-6M876 679l-2 2 4 4M604 659l2 0M406 655l-2 2M752 641l0-4M522 629l-4 4 0 2M628 617l-2-2M528 607l-4 0-2-2M882 599l2 0 2-2M976 585l2 2M408 583l4-4M820 575l0-2M956 551l-2 2M664 549l-2-2M908 535l2-2M502 531l-4 4M836 529l4-4M908 415l0-4M972 407l0 2M1120 403l-2-2M1058 395l4 4M1126 391l-2 0-2-2M968 383l-2 0-2-2 0-2M998 359l2 0M1032 357l0 2 4 4 0 2M992 353l2 0 2-2M982 353l-2-2M1112 343l4 0M948 333l0 2 2 2 2 0M1016 329l2-2M1052 323l0-2M1008 321l2-2 0-2M1070 313l4-4M966 299l-2-2M982 289l-2 0M1004 259l0-2M1082 257l-2-2 0-2M1116 245l0 2 2 2M1132 229l0 2M1008 219l2 0 0 2M874 187l2 0 2 2M926 173l-4 0M914 153l2 2 2 0M1020 145l2 0M902 143l-2 0-2-2M654 865l2 2M634 861l-2 0-2-2M676 859l-2 2 2 2M420 853l0 2 2 2M918 851l0 4-4 4M504 851l0 2M646 849l-4 4M626 849l-4 4M656 843l2 2M826 841l4 0M658 841l0 2M450 837l2 0 2 2M386 837l4 4 2 0M916 835l2-2 0-2M792 815l-2 0-2 2M770 807l-2 2-4 0 0 2M568 797l-6-2M706 791l-6 4M858 757l0 2 2 0M528 755l6 0M706 745l2-2M830 739l2 0 2 2M920 735l-4-4M838 731l-2 2M476 731l4 0M820 727l4 4M636 727l2 0M450 727l-4-4-2 0M568 715l2 6M954 701l2 2 2 0M564 701l-2-2-2 0M680 699l2 0M862 681l-4-4-2 0M626 681l2 0M692 679l0-2M942 677l0 2-2 0M922 675l0 2M906 665l0-6M840 657l2 0M946 651l-8-8M850 649l2 2M826 647l0 2-2 2 0 4M780 633l4-6M824 629l-4-4M542 625l0 2-2 2M412 619l2 2 0 2-2 2M552 611l2 2M968 605l4 4M936 603l4 4 2 0M764 599l4 0M990 595l0-4M950 595l2 0 2 2M520 589l-2 0-2-2M952 585l4 0 2-2M980 581l4 0 4-4M806 581l2 0M918 545l2 0 2-2M446 535l0-4 2-2M852 527l0-2M888 415l-2-2 0-4M1132 405l0 4M1036 395l2-2 0-2M1002 395l0 2-2 2M1060 377l-2 0-2-2M1008 375l2-2M1046 347l-4 0M1140 341l-2 0M984 337l-2-2-2 0M954 335l0 4M934 333l-2-2-2 0M944 297l-2 2M1062 295l-2 2 2 2M1032 291l4-4 0-2M1086 271l2 2 0 4M912 271l0 4M860 257l0 4-2 2M904 243l-4-4M896 243l-2-2 2-2M1038 235l-4 0M1076 233l-2-2M1110 215l2 6M918 203l-2 2-2 0 0 2M1122 175l2 2M1052 173l2 0 0-2M864 169l-4 0M1116 153l-2 0 0 4M884 867l-8 0M784 857l-2 0 0 2M388 857l2 0M734 853l-2 2M696 853l2 2 2-2 4 0M494 849l4 4M494 847l4 4M434 841l-2 2 0 2M632 839l0 4M878 837l-6 2 0 2M814 833l-2 0-2 2M888 829l4-4M666 825l4-4M656 825l0 4M624 823l-2-2 0-2M908 821l2 0 0 2M446 817l-4-4M804 807l-2-2 0-4M842 801l-4 0M518 773l0 2-2 2M552 771l4 4M542 769l-2 2 0 4M828 767l2 0M900 765l0 2M532 737l2-2 0-2M576 735l2 2M648 733l0 6 2 0M516 733l0-2-2 0M896 731l2 0 2-2M420 731l2 0 2-2M798 729l0 4M938 725l-2 2 0 2M942 715l2 0 2-2M848 715l2 2 0 2-2 2M636 701l0 2M476 701l0 2-2 2M780 699l2 2 2 0 0 2 2 2M700 697l0 2M542 673l-6 4M766 671l2 2 0 2M626 669l2-2M866 667l-4 0-4-4M964 663l2-2 2 0M812 659l2 0 2 2M790 657l0-2 4 0M450 657l2 2 0 2M756 651l-2 0M778 647l2-2 2 0 2 2M652 641l-4 0M434 637l2 2 2 0M674 633l0-2-2-2M612 633l-2-2-2 0 0-2M552 617l4 0M712 615l2-2 4 0M388 607l4-4M492 605l-2 2 0 6M698 587l2 2M470 581l-4-4M746 579l0 2-2 2M380 579l0 4M752 577l4 4 2 0 2-2M736 575l2 2M492 573l-2-2 0-2M944 569l0-2M676 567l0 4M744 565l0-2 2-2M692 553l-2 0-2 2M738 543l2-2M674 539l4-4M980 537l-2-2 0-2M610 537l2-2 0-4M922 533l2-2 2 2M630 533l-2-2 0-4M946 531l-2 0 0 2M398 513l4 0 2-6M828 415l0 8M808 407l-2-2 0-2M1118 383l2 2 0 6M934 379l-4-4M982 373l-2 2 0 2-2 2-2 0M1146 361l0 2M1142 347l-4-4 0-2M940 333l0 2-2 2M1068 325l-4 4 0 2M1118 317l-4-6M952 311l-2-2M954 299l-2-2 2-2 0-2M1008 297l0-2M1126 293l-4 0M922 287l0 2 2 2M974 285l-2 2 0 2M942 281l2-2M914 281l-6-2M966 271l-4 0M990 259l2-2M1094 257l4 0M1062 235l0-2 4-4 0-2M1052 227l0-2-2-2M952 221l-2 0-2-2 0-2M858 207l0-2 2-2M1102 205l-6-2M1136 199l-4 0M862 191l-2 0-2 2M930 187l4 0M974 181l-4-4M902 179l2 0 0-4-2-2M994 177l-2-2-2 0M910 159l-2 2M970 155l-4-4M950 155l-2 0-2-2M1046 151l2 2 0 2M1056 149l2 2 4 0M1060 147l0 2 2 2M1132 145l0 2M1100 145l0-4M850 143l-4-4M726 867l-4 0M658 863l0 4M576 863l-2 0M426 863l0 4M774 859l0 2-2 2M534 859l0 6M554 857l4 4M504 857l-6 0M596 855l2-2 2 0M910 849l-2 2-2 0M456 845l4 0M894 843l-2 2M884 841l-4 4M874 833l-4 0M806 831l-2 0-2 2-2-2M744 829l4-4M482 823l4 4 0 2M462 819l2-2M704 817l0 2 2 0 2 2M858 815l2 0 2 2M624 803l2 2 0 2M528 803l2-2M840 795l0 2-2 2M924 789l2 0 2-2M900 781l-2 2 0 2M526 761l2 6M872 757l-2 0-2 2 0 2M884 751l2-2 2 0M882 745l0-2M858 741l0-2 6-4M806 741l-2 2 0 2M550 739l2-2 2 0M850 735l0-2M948 733l0 4M730 721l-2 0M716 715l-2 0 0 2-2 2M382 711l-2 0M758 709l0 2M658 703l0 2 2 2M960 699l0 4M902 699l0 2-4 4M618 697l-4-4 0-2 2-2M458 695l-4 4M564 693l-4 4-2-2M922 689l-4 4 0 2M650 689l4 4M562 679l0-2-2-2M514 679l-4 0M830 671l4-4M474 669l2 2 2 0M730 657l4-4 2 0 2 2M506 651l0 4-2 2M952 647l0-2 2-2M606 645l2 2M424 645l2 2 0 4M964 641l2-2M942 639l-4-4M596 629l2-2 0-2M532 625l6 6M624 619l0-6M884 613l0-2 2 0 0-2M436 613l4-4 0-2M860 611l2 0 2 2M882 609l4 0M982 595l4-4M532 591l-4 4M502 587l-4 0M448 587l0-2-4-4M938 585l-6 0-2 2M830 585l4-4M938 583l-4 0M508 575l-2-6M792 561l2 0 0-2M758 561l0-2 2-2M864 559l-2-2-2 0 0-2M972 555l4 4M982 553l2 2 0 2M726 549l2 2 0 2 2 0M968 543l2-2 0-2M988 541l2 2 2 0M694 537l0-6M680 537l0-2M494 537l2-2 2 0M590 531l0-4M828 529l-2 2 0 2M434 527l-4-4M950 523l-4 0M534 521l0-2-2-2M510 517l2 0 2-2M804 413l0 4-2 2M784 411l-2 0-2 2M962 403l-2 2M826 403l4-4 0-4M1012 393l0 6M996 377l0 2-2 2M1108 375l0-2M970 375l0 4-2 2-2 0-2-2M1002 367l4 0 2-2M954 361l-2 0 0-2M1024 359l0 2 4 4M1096 351l0 4M960 349l-4 0M1128 347l-2-2 0-4M966 343l-4 0M1090 337l-2-2-2 0M1094 333l-2-2-4 0M1108 331l2 2 0 2 6 4M1014 319l4 0M1028 309l0 2-2 2M1110 305l-4 0-2 2M1140 303l-2 2M936 275l6-2 0-4-2-2M916 275l-4 0M1070 273l0 4 2 2M1014 271l6 0M864 267l-2 0-2-2M1108 265l-4 4M888 263l0-4M958 261l-4-4M1136 251l4 0M1106 251l-4 0M878 249l-2-2 0-2-2 0M962 241l-2 2 0 2 2 2M1128 239l2 2 2 0M920 239l0-2 2 0M1096 233l-2-2-2 0M1092 221l-6-6M1134 213l6 0M1122 207l0-4M1060 207l2-2 2 0M1112 197l0-4M920 197l-2-2M1044 187l0 2-2 2M1080 183l6 2M956 183l-4 0M1102 167l-2 2M1022 167l-2 0 0 2M1100 165l0 4M904 161l2 0 0 2M1022 155l-2-2 0-4M982 155l6 0M950 141l-2-2M1094 139l2 2 2 0M942 139l2 0 2-2M852 137l-6 0M630 829l-2 0-2 2M610 823l-2-2-2 0 0-4M498 821l0 4M708 815l0 6M638 807l4-4 0-2-2-2M396 797l2-2 0-2 2 0M458 775l0-2 2-2M416 775l4 0 4-4M604 767l-2-2-4 0M500 763l-2-2-2 0M612 757l-4-4M584 757l0-8M414 757l-2 6M682 749l0 2-2 2M608 743l-2 0-2 2M476 743l2 2 0 2-2 2M486 739l6 0M564 713l2 2 0 2 4 4M778 705l2 0 0 2M490 697l-2 0 0 2M762 695l-2 0M682 693l-2 2 0 2 2 2M758 691l2 2 0 2M656 679l2 0 2 2M936 677l-2 2 0 6M618 671l0-2M988 667l2 0 6-4M918 667l2-2 0-4M722 667l-2 2 0 2M466 663l-4-4M896 661l-2 0M482 657l2 0 2 2 0 2 2 2 2 0M940 649l-4-4-2 0M768 649l2 0 0 4M468 649l-4 0M388 647l0 4M800 645l-2-2-4 6M402 645l0-2-2-2M812 643l0-2M488 635l2 2 0 4M832 629l0 4 2 2M848 623l6 4M860 619l2 0 2 2M402 619l-2 2-4 0M396 615l0 2M828 613l-2-2-2 0M606 609l-2-2 0-4 2-2M548 609l2 0 2 2M566 607l2 0M426 607l0-4 2-2 0-2M548 603l2 0 4-6M382 601l-2 2-2 0M408 599l2 0 2-2M826 595l2 2 2 0 2-2M756 585l4-4 2 0M462 581l2 0 2-2 0-2M528 579l0-6M552 575l4-4 2 0M704 573l2 0 2 2M532 569l0-6M468 569l-2-2-6 0M586 567l-2-2 0-4M750 565l-2-2-2 0 0-2M704 563l2-2 0-4M418 561l4-4 0-2M700 559l2-2 2 0M612 553l0-2-2-2M680 547l0-2M458 825l2 0 2-2 4 0M426 825l-2-2-2 0 0-2-2 0M472 817l-4 0M656 813l4 0M616 807l-2 0-2 2M400 807l2 0 2 2 0 2M538 797l0 6M620 793l6-4M416 791l0 2M544 789l2 2 4 0M444 785l0 4M616 775l0-2 2 0M490 771l-6 0M438 771l-4-4M722 763l0 4-2 2M508 755l2-2M632 753l2 2 0 4M626 753l2 0 6 6M562 747l4 0M536 741l2 0 2-2M756 737l-2 2-2 0 0 2M700 733l0 4M404 733l4 0M596 729l2 0M622 727l-4 6M404 723l-4-6-2 0-2 2M492 719l2-2 6 2M508 715l2 0M916 711l0 2 2 2M882 709l-2 0M906 707l-8 0M840 707l-6 6 0 2M860 703l2 2 2 0M870 693l0 2 2 2 0 2-2 2M502 693l4 0 0 2M420 693l-4-4M842 691l2 0 0-2M708 689l-2 0-2 2-6 0M906 685l2 0M488 683l4-4 0-4M906 677l2 2 0 4M398 677l-2 0-2 2M782 671l2 2 2 0 0 2 2 2M514 669l-4 4 0 4M772 667l0-2 2-2M540 667l-4 4M584 661l-4-4M704 659l2 2-2 2M930 657l0-6M390 657l-2 0-2 2M380 657l2 0 0 2M820 653l6 6M702 651l-4 0-2-2M836 647l4 0M572 647l2 0 0 2M478 647l0-4M596 645l4 0 2 2M446 641l-2 0-2-2M662 637l-2 0-2-2 0-6M442 631l0 2-2 2M768 627l0-4 2 0 2-2M418 627l-2 0-2-2M456 621l2-2 4 0 2-2M644 619l-2-6M814 617l-6 0M714 611l6 0M660 611l0-4M482 593l0 2-2 0M554 589l6 0M690 585l-2-2M572 585l8 0M792 581l-2-2 6-6M594 577l0 2M718 567l0 2-2 2M612 567l4 0 4-4M544 567l-2-2M476 563l0-2 2-2M468 559l0-4M560 553l0-4M458 551l0-2 4-4M650 549l-4 0-2-2M428 547l-6 6-2 0M602 545l2-2-4-4 0-2-2-2M440 543l-6-6-2 0M596 541l-2-2 0-2 2-2M504 827l0 2-2 2M602 821l-2 0-2-2M666 819l6-6 2 0M422 815l-2 2 0 2M714 813l4 0M628 813l-6 0M384 813l2 0 2 2M658 807l4-6 6 0M432 805l-2 2-2 0 0 4M416 801l-2 0 0 2-2 2M498 799l4 4M386 797l-2-2 0-2-2 0M390 793l0-2 2-2 4 0M658 791l4 0M462 791l0 2 2 2M524 789l0 2-4 0M578 787l0-4 2 0M714 785l-2-2 2-2 0-2M468 785l0 2 4 0M766 783l2-2 4 0M644 783l2-6 2 0M732 777l4 0M586 775l-2 2 0 4-2 2M450 771l2-2 2 0M712 769l2 0M692 767l-4 0-2 2M446 765l2-2 2 0 2 2M714 763l2 2-2 2M554 763l6 4M570 759l0-4M462 759l0 2 2 2M726 757l0 2 4 4M668 755l-2-2M418 751l0 4 6 0 2-2M548 745l4-4 2 0M466 737l-4-6M626 733l0 2 6 6M386 733l-6-6M396 731l-2 0-2-2M644 727l-2 0-2 2M494 727l4 4 0 4M828 725l2 0M760 719l6 0M856 717l2-2 2 0M744 715l2 2M730 715l-2 2 0 2M768 713l4 0M494 709l4 0M848 705l4 4M740 705l0 2M940 703l-6 6M592 703l-4 0-2 2M442 703l-2 0-2-2-4 0M852 701l2 2 0 4M750 701l4 0 6 6 0 4M384 699l2 0 2-2M486 697l-2 6M726 695l-2 0M594 695l-2 2-2 0-2-2M412 695l0 2-4 4-2-2M736 693l0-2M690 693l2 2 0 4M802 691l-2-2-2 0 0-2M464 689l2 2 0 4M456 687l-2 0-4 4M626 685l2-2 0-2M872 683l2 2 0 4 2 2M838 683l0-2 2-2 0-8M406 683l2 2 0 2M824 681l-2-6 4-4 2 0 2-2M820 681l-2-2M458 679l-2 0-2-2M668 677l-2 2-2 0M982 675l6 0M734 675l-2 0M858 673l0-4-2-2 0-2M558 673l0 4M422 667l4 6M882 665l0-2-2-2 0-6M478 665l6 0M412 663l2 2M956 661l-2 2 4 4M916 655l0-8M580 655l-2 0-2-2M588 653l0 2-4 4-2-2-2 0M454 653l2 2 0 2M554 651l0 4M776 643l4 0M542 643l4 0M708 639l0-4M582 639l-6 0M508 639l-4 0 0-2-2 0M842 637l-2 0M768 637l0-2-4-4-4 0M416 637l-2-2 0-4-2-2M860 635l0 4M856 635l4 4M572 635l2 0 0 2M552 635l-4 4 0 2M824 623l-8 0M824 621l-6 0-2 2M516 621l-2 2-2 0 0 2M702 619l2 2 2 0M852 617l0-4M378 617l0 2 6 6M388 615l2 6M786 611l-4 0-2-2M584 611l2 2-4 4M688 609l-2-2-2 0M464 607l0 6-2 0M706 605l0-2 2-2M592 605l0-2 2-2M466 601l2 2 4 0M666 599l-2 2-2 0-2-2M448 599l-2 2 0 2-2 0M388 597l6 0M456 595l0 2-2 2-2 0M796 593l0 2-2 2M678 593l4 6M568 593l-4-4 0-2-2 0M496 593l0-2-2-2M390 587l8 0M492 585l-2 2-2 0M726 583l-2 2 0 2M434 583l-4 0-2-2M780 579l0 2-2 2-2 0M694 573l-4-4M656 573l-4 4M384 567l0-2 2-2M720 563l2 2 2 0 2-2M400 557l2 0 4-4M600 553l-4 0-2 2M580 547l0-4M534 547l2 0 0-2M624 543l-2-2-2 0M394 537l-2-2 0-4M734 831l-2 0 0-2M452 831l2 0 2 2 0 2 4 4M386 829l8 8M402 827l-2 0-2 2M490 823l2 2 0 2-4 0-2 2M386 823l4-4 2 2 2 0M588 819l0 2-2 2M554 817l0 2 2 2-6 6M546 817l0-2-4-4M406 817l-4 0M566 813l0 2M480 811l-2 0-4-4M454 811l6 0 2 2 2 0M462 807l2 0 0 2 4 4M380 805l0-2-2-2M548 803l-4 0-2-2M424 799l-2 0-6-6M394 799l2 0 0-2M608 795l-2 2 0 4M700 787l0-2-2-2-2 0-4 4M382 783l2 0 0-2M448 781l2 2 0 2M682 779l2 2 2 0 0 2-2 2M468 779l2-2 0-2M762 773l0 4M590 771l4 0M442 771l-2 0-4-4-2 0M738 765l-2 2-2 0M432 765l-4 0M586 763l4 0 4 4M460 763l4 0M702 761l-2-2-2 0-2 2M566 761l4-6M744 759l4 0M618 755l0 2 4 6M522 751l6 4M702 749l4-4M690 743l0-2-2-2-2 0M622 743l-2 2-2 0M396 743l0 4M612 741l-6 0M488 737l2 0 2 2M814 735l0 4-2 2M710 735l0 2 2 0M674 735l0 2-4 0M552 735l2 0 2 2M442 733l-4 0M684 729l0-2-2 0M742 727l2 2 6-2M592 727l2 0M748 725l2 0 0 2M464 723l0-2M736 721l0 2-4 4M634 721l2 2M596 721l0 6M846 719l0 2 2 2M806 719l-6-2M676 719l2-2 2 0M594 719l0 6M620 717l0-2-2-2M552 713l0 2 2 2 2 0M886 711l-4 0M818 709l-2-2-2 2-2 0M776 709l0 2-2 0 0 2M518 709l2 2 2 0 0 2M724 705l-2-2-4 0M808 703l-2-2-6-2M630 701l0 6M574 701l4 4M862 699l2 2 0 4M614 699l-2-2-2 0-2 2M938 695l-2 2M444 695l-2-2-2 0M778 693l2 0 0-2 2-2M748 693l2 0 4 4 2 0 2 2M738 693l0-2-2 0M798 691l-2 0-4-4M952 689l2 2 0 8M942 689l-6 6 0 2M898 689l0 2-2 2M480 685l-4 4M952 683l10 10M964 681l4 4M736 681l-6 0M470 679l4 4 0 2 2 2M522 673l0 2 2 0M458 673l-2 2-4 0M970 671l2-2 6 0 2-2M730 671l0 2 2 2M944 669l2 0 2-2 2 2M862 669l-4-4M790 669l2 0 2 2M636 663l4-4 2 0M934 661l2-2M800 661l-2 0 0 2 2 2M532 661l2 2 0 2M940 659l-2-2-2 0M596 659l-2 2 0 2-2 0M600 655l4 4M966 649l6-6 0-2M964 649l6-6 0-2M938 649l-4-4M654 649l-10 0-6-6M732 647l0-2 4-4M698 647l0 2-2 0M672 647l2 2 0 2-2 2M416 647l-2 0M682 645l0 6M776 641l2 0 2 2M530 641l-2 0-2 2 0 4M436 641l2 0 0 4M724 639l2 2 4 0M600 639l2 0 2 2M830 637l2-2 2 2M454 637l0-6M588 635l-6-2M776 631l2-2 0-2-2-2M716 631l2-2 2 0 0-2M666 631l4-4M578 629l0 2-2 2 0 2 2 2M482 629l-4-4M446 629l-2 2 0 4M842 627l0 2-2 2 0 4M592 619l0 2M692 617l0 4 4 0 2 2M600 615l0-2-2-2M576 615l2 0 2 2M514 611l-2 0 0-2-2 0M814 605l-2-2 0-2-2 0M558 603l-2-6M424 603l4-4M870 601l2-2 0-2 2 0M860 601l2-2M590 601l4 0M852 599l2-2 0-2 4-4M472 595l2 0 0 2M468 595l0 2 4 4M790 589l-2-2-2 0-2 2M766 589l2-2 0-2M822 585l0-12M454 585l-2-2M522 583l-2-2 2-6M846 581l0-4-2-2M538 581l4-4M798 579l-2-6M416 573l4-4M392 573l4 0 2-2M752 569l0-2-2-2M552 561l0-2-6-6-2 0M544 561l-4 0-2-2M506 561l2 0 2 2M498 561l4 4M498 559l6 6M680 557l2 0 0 2M656 557l-2 0-2 2M438 557l-6 2M508 555l4 0 2-2M492 553l0-2-4-4M414 553l0-4M566 551l-4 0-2-2M576 549l-2-2 0-2-2 0M552 549l2-2 2 0 0-4-2-2M540 549l-4-4M438 545l0-2-6-6M694 543l0-6M542 543l0-6M390 535l0-4M512 523l2 0" stroke-width="0.8" stroke-opacity="0.36"/>
<path d="M686 839l2-2M818 779l-2 2M744 587l2 2M426 513l2-2M520 859l-2 0M868 769l-2-2M1048 255l0 2M700 797l-2-2M586 689l0 4M758 683l4 4M930 347l-2 2M1118 309l-2 2M868 285l-2 0M476 761l2-2M816 623l-4 4M970 533l2-2 0-2M954 347l-2-2-2 0M990 303l-4 4M948 233l-2-2-2 0-2 2M564 863l2 2 0 2M508 597l-2 2M822 775l-4 4M1022 201l0-2 2-2M1020 193l0 4M806 793l0-2M534 757l0 2 2 2M930 685l2 2 0 2M878 621l2 2 2 0M708 553l0-2 2-2M474 549l2 0 2-2M1142 329l-2-2-2 0 0-4M576 845l-2 0 0-2M904 839l2 2 0 2M554 839l4-4M534 799l2 0 0 2 2 2M812 689l-2-2 0-6M1138 311l2 0 4 4 0 2M1140 287l-2-2 0-2M484 553l-6-6M500 537l2 2 2 0M962 521l2-2M998 251l0-2M958 191l-4 0-2 2M732 765l2 2M496 715l4 4M492 589l-2 0-2-2M1004 347l2 0M1086 175l0 2 2 2M890 817l-2-2-2 0M624 771l4 0M408 667l0 2 2 0M502 661l-2 2 2 2 0 4M466 539l-4-4 0-2-2-2M1030 385l2 0 2-2M994 323l-2-2 0-4M982 265l-4-4 2-2 0-2M892 855l2 2M432 779l-2 0-2-2 0-4-2 0M862 771l0-2-2 0-2-2M836 769l6 0 2-2M488 641l2 0M382 555l-4 0M1116 363l-2-2-2-6M906 279l-2 2M440 745l-6-10M554 739l0-2M664 727l2 2 0 4 2 0M810 601l-2 0-2 2-4 0M430 537l-2-2-2 0-4 4M1006 407l2 2 0 2-2 2M1106 243l-4 4 0 2M864 147l2 0 2-2 2 2M876 799l2 2 0 4 2 0M760 713l4 4 4 0 0 2M604 707l-4 4-2-2-2 0M630 679l2-2 4 0M752 633l0-2-2-2M620 617l4-6M556 617l4 4M1010 263l2-2 2 2 2 0 2-2M1082 193l-2 2M1140 165l-2 0-2 2M700 721l2 0 0-2M720 651l-2-2 0-2 2-2M520 641l2 2 2 0 0 2M848 605l-2-2 0-2-6-6M916 555l2-2 2 2M998 405l4 4 0 4M1108 141l-2 0-2 2M648 831l-2 0M592 687l-4 0-2 2M414 605l0-8M564 597l-4-4 0-2M1022 381l8-8M1134 235l0 2 2 0 8 8 2 0M914 199l0 4-2 2M906 165l0 2 2 2-2 2M1134 149l2-2 0-2 2 0 2 2M912 789l-2-2 0-2M380 777l-2-2 0-2M704 739l6 0M514 695l-2 2 0 2M720 671l4 4 0 2M460 625l2-2M958 525l4-4M1014 357l0 4-2 2M728 861l-2 0-4 4 0 2M658 771l2 2 0 2M626 765l4 0 2 2 2 0 0 2 2 2M636 747l2-2 2 0 2 2 0 2 4 4M910 687l0 4M610 577l0 4 2 0M980 343l-6-6 0-2M914 823l4 0M624 811l-2 2M452 765l2 2 0 2M662 681l0 2M522 601l-4 0M982 531l4-4M1098 367l-2-2 0-6M1134 339l-6-4M998 325l-2 0-2-2M1100 175l0 2M636 759l6-6 2 0 2 2M738 667l6-6 2 0 0-2M402 541l2-2 4 0 0-2 2-2M986 299l-4 4-6 0M1032 239l-6 10M1104 175l-2 0-2 2M848 863l4 4M510 773l4 4 0 2 2 2M838 639l0 2M788 623l-2-2 0-2-2 0 0-2-2-2M512 591l-4 6M974 563l2-2 2 0M958 559l-2-2-2 0 0 2-4 4M646 535l4-4 2 0 0-2M1116 299l-6-2M994 189l-2-2 0-6M1112 143l-2 0-2-2M572 865l-2 2-4 0M942 733l2 2 2 0 4 4M606 625l-8 0M642 613l0-4-4-4 2-2M910 525l0-2 2-2M858 415l2-2 2-6M1008 403l-2 2 0 2M928 297l-2 2-6 0M824 859l4 0 2 2M538 857l2 2 0 2 4 4M774 733l-2-2 0-2-2 0-2-2 0-2M806 575l0-4-4-4 0-4-2-2M800 831l-4-4-2 0M874 771l-2 2-4-4M760 697l0 2M482 639l4 0 2 2M888 607l2-2M890 603l2 0M1078 251l-2-2 2-6M1056 251l0 4-2 2M876 167l4 0 2 2 2 0M646 813l2-2 0-2 2-2 2 0 4-4M414 767l2 0 2 2 4 0 0-2M392 681l0 10M548 659l6-4M870 615l2 2 6 2 0 2M960 585l2 0M1026 315l2 2 0 4 2 2M874 281l-4 0 0 2-2 2M1116 159l4 6M1080 155l-2 0 0-2-4-4M554 847l0-8M916 819l0 2 2 2M484 799l-4-4-2 0M468 765l4 0 4-4M538 759l-2 0 0 2M730 589l2 0 2-2 0-2 2 0 4 4M798 421l-2 2M1026 389l2 0 0-2 2-2M936 341l-2 2-2 0-2 2 0 2M652 775l4-4 2 0M518 765l6 0 2 2 2 0M786 705l0 8M452 703l0 4-2 2M852 685l0-4 4-4M1048 387l2-2-2-2 0-4M1130 197l0-2-4-6M1090 169l-4 4 0 2M498 805l2-2 6 0 2 2M448 787l-2 0-2 2 2 2M706 753l-2 0-2 2 0 2-4 0-2 2M506 745l-2 2-2 0M810 711l-2 0-4-4-2 0-2-2 0-2M714 679l4 6M890 663l-10-10M754 659l-2-2-6 0M388 653l-6 6 2 2M428 625l-4-4-4 0M610 545l4-4 4 0M1144 377l-2 2-4 0M1038 349l0 2 8 8M956 229l-4 4 0 2-2 0-2-2M880 187l2-2 2 0M1042 157l4 0M770 865l-2 2-8 0M580 847l0-2-4 0M894 823l0-2-4-4M606 703l0 2-2 2M822 607l0-4 2-2 4 0M956 531l0-4 2-2M584 529l4-4M1144 291l-4-4M976 289l-4 0-2 2 0 2-2 0M1020 279l0-4 2-2 2 0M928 261l2-2-2-2 0-2 6 0M978 165l8-8M902 833l0 6 2 0M596 817l0-2-2-2 4-4M820 809l2-2 6 0M434 785l0-4-2-2M556 723l0 2 2 2 4 0M600 691l-2 0-4-4-2 0M700 621l2 2 2 0M680 543l-2-2 0-6M1066 395l0 4M1016 351l2 2 0 2-2 0-2 2M966 315l4 4 4 0 2-2M1094 147l2-2 0-2 2 0 2-2M688 809l2 2 0 6M382 779l0-2-2 0M934 697l-4 4 0 2-2 2M426 651l4 4 2 0 0 6M684 597l-2 0 0 2 2 2M770 595l0-4M934 565l4 0 2-2 0-4M718 547l0-16M642 535l4 0M886 521l-2-2M846 409l0-2M920 307l-2-2 0-2-2 0-2-2M1116 275l-2 2-2 0-4 6-4 0-2-2M1088 243l-2 2-2 0-2-2-4 0M1002 201l-10 0-2 2-4 0M732 827l0-4M442 799l4-4 2 0M868 753l0 4-6 6M510 719l2 2 0 4M828 701l0 2 4 4 0 4M744 671l-6-4M956 611l0 2M534 611l0 2 4 4 0 4M598 609l-2-2 0-4 4 0 6-6 0-2 2-2M568 605l0-4-4-4M1148 397l0 2 2 2M1120 295l0 4-4 0M1022 295l0-4-2-2 0-4M742 849l-2 2 0 6 4 6M772 847l6 4M836 835l-4 4M388 815l4-4 2 2 6 2M496 759l-6-6-2 0M510 745l-4 0M952 669l4 4 2 0M686 629l0-6-4-4M614 623l6-6M546 599l2 2 6-6 2 0M1006 291l2 2 2-2 4 0M1110 235l-4 4 0 4M732 803l4 6M404 759l-4 0-4 4M812 757l-2-2M820 751l-6-4-4 0M540 737l2-2 0-4-4-4M390 727l0-4-2-2-4 0M648 695l2 2 0 4M736 689l-8-10M844 687l0-2 2-2 0-4-2-2 0-4 4-6M896 679l2 2 0 2 8 8 4 0M980 667l-2-2 0-2 6-6 0-2 2-2 0-4M396 619l0 4-2 2M392 603l2-2 0-4 2-2M782 591l0 2-2 2M652 559l-4 4M842 555l-2 2M990 327l-2-2 2-2 0-8M1122 313l-2-2 0-2-2 0M994 255l4-6M974 205l2 2 0 2 4 4 2 0 2 2 0 2M856 195l-2 0-2 2M526 849l-4 4 0 4-2 2M410 839l2 2 0 4-4 6 0 6 2 2M686 829l2-2 0-2 2 0M436 815l4 4 0 4M718 779l-4 0-2-2M460 733l-2 2 0 2 4 4 0 2M900 729l2 0 2-2M712 719l-4 4-2 0-4-4M580 677l0 4M700 675l-2 0-2-2M958 669l0 4M478 643l4-4M616 601l-2-2-2 0 2-6-4-6M872 593l-2-2 0-4M860 543l4 0 2-2 0-4M1116 401l-2 2-2 0-2-2M1100 387l0 6M878 279l-2 2-2 0M704 863l4 0 6-4 4 0M380 793l-2-2 0-2M760 777l-2 2 0 2-2 0M500 683l2-2 2 0 4 4M740 581l4 4 0 2M732 569l2-2 0-4 4-4 0-2M932 411l2 2M1148 377l-4 0M948 357l-4 0M1000 307l-2-2-2 0-4-4-2 2M1126 279l8-8M560 859l2 0 2 2 0 2M818 857l4 0 2 2M594 847l4 4 2 0 0 2M454 839l6 6 2 0M624 829l-2 2-2 0 0 4-2 2M672 827l-2-2 0-2 4-4 0-2 4 0M924 805l2 0 2-2M734 789l2-2 2 0M388 753l0 2 2 2M508 751l-2-2-4 0 0-2M812 741l-2 2 0 4M818 693l-6 0 0-4M784 627l2-2 2 0 0-2M442 563l-2 2-8 0-2-2M570 543l-10-8 0-6M944 533l-4 4-2-2M1000 399l-2 2 0 4M1022 397l0-4 4-4M1106 373l-2-2-2 0 0-2-2 0-2-2M960 341l-2 2-6 0M1002 331l0-2-4-4M896 257l-2 0-2 2-4 0M1118 249l4 4 0 4M890 187l0 2 2 2 2 0 4 4 6 0M678 849l2-2 0-2 6-6M730 841l-4-4-2 0-2-2 2-2 0-2M898 807l2-2-2-2 0-6M416 807l-2-2-6 2M870 795l2 0 4 4M602 777l-4-4-2 0M664 755l-2 0-2 2M564 753l2 2 4 0 2-2M784 739l0-4M380 727l0-4M566 641l2 2 4 0 4 4M440 613l2-2 0-4-2 0M790 567l4-4 2 0 2-2M1144 383l-6-4M1122 367l-4 0-2-2 0-2M1046 327l0-2 2-2 0-6M1046 287l0-2 10-10M874 245l-6-4M960 213l-4-4-2 0-2-2M540 851l0 4-2 0 0 2M864 777l-2-6M560 767l2 2 0 4-2 2 0 4M860 759l2 2 0 2M534 733l0-6-2 0M708 635l0-4-4-4M578 593l0-6 2-2M386 563l2-2 0-2-4-4-2 0M924 525l6 0M926 305l-2 2-4 0M878 301l2 0 4-4 4 0 2 2M934 289l-2 2 0 2-4 4M900 277l-4 4 0 2-2 2 0 4M852 247l-2-2M974 229l6 6 0 2M1148 179l0-2 2-2 2 0 0-2M1116 165l4 0M1010 155l0-2-2-2-2 0-4-4M846 843l6 6 4 0 2 2 0 2-2 2M598 835l0 2 8 8-4 4M428 811l2 2 0 2-4 4-4 0-2 2M726 771l-2-2-4 0-4 4M618 745l-6 4-6 0-2 2M642 741l4 0M714 733l-2 2 0 2M810 725l-12 8M660 723l2 2 0 2 2 0M782 689l2-2 4 0 4-4M856 687l-2 0-2-2M882 685l-2 0-2 2 0 2 2 2-2 2M746 683l4-4 6 0 2 2 0 2M976 645l2-2M514 575l-2-2 0-4-2-2 0-4M690 569l-4-4-2 0M726 563l6-6M392 545l4-4 6 0M882 425l2 2M818 421l-4 4M1026 345l2-2 0-2 2 0 0-4-4-4M1118 333l2 2 2 0 6-6 4 0M1114 317l0-4-2 0M1090 293l6 0M998 215l2 0 4 4 0 2 6 2M860 203l-2-2-2 0-4-4M1110 181l-2-2 0-2-2-2-2 0M922 173l-2 2-2 0 0 2-4 4M874 173l0-4 2-2M876 153l2-2 0-4M664 861l-4 4M912 799l-2-2 0-4 2-2 0-2M474 787l4 0 0 2M576 775l0 2 6 6M734 759l-2 2-2 0 0 2 2 2M406 757l-2 2M654 657l0 4-2 0M866 623l2 0M412 609l2 0 2-2-2-2M972 565l2-2M920 557l0-2M832 545l-2 0M944 521l-2-2M1046 391l0-2 2-2M1080 385l4 0M972 365l-2 2-4 0-2 2-2 0-4 4-4 0M1144 335l-2-6M1002 271l8-8M924 263l2 0 2-2M1058 247l-2 2 0 2M998 189l-4 0M1008 179l0-4M986 175l4-4M1144 165l-4 0M888 153l0-2-2-2 0-6 4-4M690 863l0 2 2 2 2 0M586 863l0 2 2 2M800 853l4 4 2 6M470 849l-2 0 0-2-2 0M400 851l-6 0-2 2M742 847l0 2M562 841l-4-6M812 837l-2 2 0 2 2 2 0 4-2 2 0 2M762 805l0 4-2 2M728 801l2 0 2 2M708 801l-2 0-6-4M634 787l-4-4M878 781l4 0 2 2 6 2M892 775l0 4-2 2 0 4M554 745l0-6M382 735l-2 0-2 2M962 731l0 2 2 2M674 685l0 2-2 2M936 683l0 2-4 4M486 673l4 0 0-2 2 0M890 667l0-4M388 667l-6 0-2-2M612 623l2 0M838 607l0-6-4-4 0-2M692 607l-2 0-2-2-2 0-2 2-2-2M924 599l-2 0 0 2M848 589l4-4 0-2M478 593l2 2M962 579l0 2-2 2 2 2M660 565l-6 0-2-2-4 0M502 543l2-2 0-2M566 533l-6-4M994 373l0 8M922 333l-4 0-6 6-2 0M884 295l4 0 2 2 0 2M990 271l-2 0-4-4-2 0 0-2M1124 253l-2 2M1146 243l2 0M1020 205l2-2 0-2M926 157l2 0 2-2M1030 139l-2 2-4 0M586 827l-4 0M826 823l2 0 4 4M790 811l-2 0 0 6-2 2M496 809l0-2 2-2M810 795l-4-4M638 797l4 0M834 793l0 4-6 6M818 787l-2 2-4 0-2-2-2 2-2-2-6-2M540 755l0 2-2 2M434 755l-4 0 0-2M398 745l-6 6 0 4M924 747l-2 0-2 2 0 2-6 4M410 737l0-2-2-2 0-2 2-2M438 733l0-2-2-2 2-2 0-4M558 719l0 2-2 2M644 693l2 0 2 2M664 677l0 2-2 2M922 661l6-6 0-4 2-2M670 629l0-4 4-4M486 621l0-2-4-4M536 621l2 0M688 595l-2 0-2 2M960 559l-2 0M864 551l-4 0M640 539l0-2 2-2M870 411l0-2 2-2-2-2M958 351l-2 0 0-2-2-2M1108 347l2 0 2 2M1056 343l2 2 2 0 0 2 2 2 0 2-2 2M1144 329l-2 0M1014 317l2 0M1038 291l0-6 2-2 0-2M992 291l-4 4 0 2-2 2M976 277l-2 0-2 2-2-2-4 0-2-2-4 0M892 277l0 10 2 2M1048 245l0 6-2 2 2 2M1120 221l-2 0-2 2-2-2-2 0-2 2M1094 209l-2 2-4 0-2-2M962 189l-2 0-2 2M1024 143l0-2M1076 147l-2 2M484 853l0 2 4 4 0 2M440 849l-2 2M486 801l-2-2M826 799l2 2 0 2M868 793l2 2M602 789l-8 0-4 4M720 779l-2 0M422 779l2-2M532 753l2 2 0 2M448 747l-6 0-2-2M388 751l0 2M570 747l6 0 2-2 2 0 2 2M942 747l0 2M770 737l4-4M668 729l0 4M896 719l2 0M578 717l-4 4 0 4M778 713l-4 0-2 2M452 675l-4 4-4 0-2 2-2 0M458 663l-2 0M462 625l0-2M918 573l-2 2 0 2 2 2M876 573l4 4 2 0 2 2M602 571l4 0 4 4 0 2M468 555l6-6M384 541l-4-4 6-6 2 0M930 531l2-2M1102 359l0-2 2 0 4-4M1016 349l0 2M1082 335l0 2 2 2M972 333l-2 2M942 317l-2 0 0-2-2-2M1064 257l-2 2 0 2-2 0-2-2 0-2-4 0M1032 249l0 2-2 2M918 235l2 0 2 2M852 237l-4 0M1036 221l-2 2-2 0M1140 213l2 2 0 4M892 207l4 0 2 2 2 0M1078 193l2 2M934 167l-2-2 0-4-2-2 2-2-2-2M966 169l0 2-4 4-2 0M892 141l-2 0 0-2M1152 145l0 2M444 859l2 6-2 2-4 0M482 853l2 0M838 835l-2 0M928 829l0-2M826 821l2 0 0 2M818 811l2-2M532 797l2 2M888 795l2 2M886 781l0 2M810 769l0 4-6 6M850 759l0 4M766 751l10 10 0 2M884 725l-2 6M946 713l2-2 2 2M890 695l4 4M832 675l0-4 2-2 0-4 2 0M878 685l0 2M606 659l0 2M404 657l2 2 0 6 2 2M752 637l0-4M518 635l0 4 2 2M626 615l-2-2 0-2M522 605l-2 0 0-2-2-2M886 597l2 0 2 2 2-2 2 0M978 587l0 2 2 0 2 2 6 0M412 579l2 0 2 2 4 0 4-4M820 573l2 0 0-4M954 553l0 2-6 6-2-2-2 0M662 547l0-8-6-6 0-2M910 533l0-4 2-2-2-2M498 535l2 2M840 525l0-2 4 0 2-2M908 411l0-2-4-4 0-4M1118 401l-2 0M964 379l-6 0M1000 359l6 6 4 0 2 2M1036 365l2 0 2 2M996 351l4-4 2 2 2-2M980 351l0-2 2-2 0-2-2-2M1116 343l4-4 4 0M952 337l0 6M1018 327l2-2 2 2 2 0 2-2M1052 321l-4-4M1010 317l4 0M1074 309l8 0 2-2M964 297l-4-4M980 289l-2 2-2-2M1004 257l-6-6M1080 253l-2-2M1132 231l0 2 2 2M1010 221l0 2M878 189l2-2M918 155l4-4 4 0M1022 145l2-2M898 141l-6 0M656 867l2 0M676 863l0 4M422 857l0 2-6 6M914 859l-2 0 0 4M504 853l-6 4M642 853l-2 2-6-2M622 853l0 6-2 2 0 2M658 845l2 2-2 2M830 841l2 2M658 843l0 2M392 841l2 2M918 831l4-4M764 811l-2 2M562 795l-2 0M700 795l-2 0M708 743l0-2 2-2M834 741l2 2M916 731l-2-2M836 733l0 6M480 731l2-2M824 731l6 0 0 2 2 2M638 727l2 2M444 723l-6 0M570 721l2 2M958 703l2 2M560 699l-2-2 0-4M682 699l0 4-4 4 0 4M628 681l2-2M692 677l4-4M922 677l2 2 2 0 4 6M906 659l-4-4 0-4M938 643l-2 0-4-4 0-2M824 655l2 2 0 4M820 625l-2 0-2-2M554 613l0 2 2 2M972 609l2 2M768 599l0-2 2-2M990 591l0-2M954 597l0 2-2 2-4 0-2 2M516 587l-4 4M958 583l2 2M988 577l4-4 2 0M808 581l-2-6M922 543l2 0 2 2M852 525l-6-2M886 409l-2-2 0-4M1132 409l-2 2M1038 391l2-2 0-2 2-2 2 0 4-6M1056 375l-4 0M1010 373l6 0M1042 347l-2 0-2 2M1138 341l-2 0-2-2M980 335l-6 0M930 331l-2 0 0-2-2 0-4-4M942 299l0 2-2 0M1036 285l2 0M1088 277l6 2M912 275l-6 4M858 263l-2 0M900 239l-2 0 0-4 4-4M896 239l2-2M1034 235l0 2-2 2M1074 231l-4-4M1124 177l4 6M1054 171l0-4 2-2M1114 157l2 2M876 867l-2 0M390 857l0 2M732 855l0 2-4 4M704 853l2-2 6-2M498 853l0 4M498 851l0 2M432 845l6 6M632 843l0 2 4 6M872 841l0 2M892 825l2-2M670 821l4-4M656 829l-4 4-2 0-2-2M622 819l0-4M910 823l4 0M442 813l-2 0-2 2M802 801l2-2 0-4 2-2M838 801l-6 6M516 777l0 4M556 775l4 4M830 767l6 2M900 767l2 2M578 737l2 2 2 0 4 4M424 729l4 0 0-2M936 729l4 4 2 0M848 721l0 2 6 6M636 703l0 2-2 2-2-2-4 4M474 705l2 2-2 2 2 2 0 4M700 699l-2 2-2 0-4 4M536 677l-4 4M768 675l0 4 2 2M628 667l0-2 2-2-6-4M968 661l2 0 4-4 4 0 8-8M816 661l2 2 0 2M452 661l0 2M754 651l-6 2-6-4M784 647l2 0 4 4M648 641l-2 0-2 2-2 0-2-2M438 639l2 2M608 629l0-2-2-2M718 613l2-2 4 0M700 589l6 0 2 2 0 2M466 577l-4-4-2 0-2-2M744 583l0 2M380 583l-2 2M760 579l0-2 2-2 6 0M738 577l0 2 2 2M944 567l0-4 2-2M676 571l-2 2 0 2M746 561l0-6M688 555l0 2-2 2 0 4M978 533l2 0 2-2M976 379l-4 4 0 6M1146 363l-2 2-6 0-2-2 0-6M938 337l-2 2 0 2M1064 331l0 4M950 309l-6-6-2 0-2-2M954 293l0-4M1008 295l2-2 4 0 0-2M1122 293l-2 2M924 291l0 2-4 6M944 279l0-2M908 279l-2 2-2 0M962 271l-2 2 0 2M992 257l2-2M1066 227l0-2M1050 223l-2-2M948 217l-4-4M1132 199l-2-2M858 193l-2 2M934 187l4 4M970 177l-8 0-2-2M908 161l-2 2 0 2M946 153l0-2 2-2 0-4-2-2 0-6M1048 155l-2 2M1062 151l2 2 0 2M1132 147l2 2M574 863l-2 2M772 863l-2 0 0 2M534 865l2 2M558 861l2-2M906 851l-2 2M892 845l-4 4 0 4 2 2 2 0M880 845l-6 0 0 4M870 833l0 2M464 817l2 2 0 4M708 821l2 2 4 0 2-2M626 807l0 2-2 2M530 801l0-2 2-2M838 799l0 2M928 787l2 0M898 785l0 2 2 2 6 0M868 761l-6 2M888 749l2 0 2 2 2-2M882 743l4-4M864 735l2-2M804 745l0 4-4 4M850 733l0-2 2-2 2 0M728 721l0 2 4 4M380 711l-2-2M758 711l2 2M616 689l0-2-10-8M454 699l0 2-2 2M918 695l0 2M654 693l0 4-4 4M478 671l2-2 6-2M738 655l4-6M504 657l-2 2 0 2M954 643l0-8M608 647l2 0M538 631l2 2M886 609l2-2M864 613l4 0 2 2M528 595l-6 6M498 587l-2 2-4 0M444 581l-2-2M930 587l-2 0M834 581l4-4 0-4-2-2 0-4M934 583l-4 0-2 2 0 2M506 569l0-4M760 557l0-2-2-2 2-2M860 555l2-2-2-2M976 559l2 2M984 557l2 0 4 4 0 6M730 553l0 2 2 2M970 539l-2-2 0-2 2-2M680 535l0-2M826 533l2 2 0 8M430 523l-2 0 0-6-2-2 0-2M802 419l-2 2-2 0M960 405l0 2M1012 399l0 2-2 0-2 2M1108 373l-2 0M952 359l-2 0-2-2M1028 365l0 2 4 4M1096 355l2 2M962 343l-2-2M1116 339l4 0M1026 313l0 2M1138 305l-2 0 0 4 2 2M940 267l0-2 2-2M1020 271l2 0 2 2M1104 269l-4 4 0 6 2 2M954 257l-2-2 0-2 6-4M1140 251l2 0 2 2M1132 241l4 4 2 0 2 2 0 4M1086 215l-2 0-2 2-4 0M1122 203l0-2-8-8M918 195l-4 4M1042 191l0 2-2 2M1086 185l0 4-4 4M952 183l-2-2-2 2M1100 169l0 2 2 2-2 2M1020 169l-4 4M1020 149l0-2 2-2M948 139l-2-2M1098 141l2 0M626 831l-2-2M606 817l-8-8M498 825l-4 4-2 0-2 2-2 0-2-2M640 799l0-2M400 793l2-2M496 761l0-2M608 753l-2 0 0 2-2 2M584 749l2 0 2-2M412 763l0 2 2 2M680 753l0 4-4 6M476 749l0 2 2 2 2 0 0 2M488 699l-4 4 0 2-2 2M760 695l0 2M660 681l2 2M934 685l0 2M618 669l-4-4-2 0-2 2-4-4-2 0M996 663l2-2M920 661l2 0M462 659l-2 0-2 2M894 661l0-10M490 663l2 0M934 645l-4-4 0-2M770 653l0 8M388 651l0 2M400 641l-2 0-2-2M812 641l-6-6M834 635l0 2 4 4M854 627l2 0 6-4 4 0M396 617l0 2M824 611l0-2-2-2M606 601l4-4-2-2 0-2M568 607l0-2M428 599l2-2M554 597l2-2M412 597l2 0M762 581l2 0M528 573l-2-2 0-4 4-4M558 571l2 0 2 2 2-2M708 575l2 0 4 6M532 563l-2 0M460 567l-4-6-4 0M584 561l2-2M706 557l0-2 2-2M704 557l2-2M610 549l0-4M680 545l0-2M660 813l0-4 2-2 2 0 2-2 0-2 2 0 2 2M626 789l2 0 2-2 0-4M416 793l-4 4M550 791l4-4M618 773l2-2 4 0M484 771l-2 2M434 767l-6 0 0-4-2-2 0-2M510 753l-2-2M634 759l2 0M540 739l0-2M752 741l-2 2M700 737l2 0 2 2M618 733l-2 0-4-4-2 0-2 2M396 719l-2-2-4 0-6 4M510 715l0 4M918 715l2 0 4 4 0 4M880 709l-2-2-2 0M834 715l-2 2M864 705l4 4 0 2M870 701l0 2 2 2 0 4 2 2M506 695l4 4 2 0M416 689l-4-4-2 0-2 2M844 689l0-2M698 691l-4 4 0 2-2 2M908 685l2 2M492 675l-2-2M908 683l0 2M394 679l-2 2M788 677l2 0 2-2M536 671l0 2-2 0-2 2 0 4M580 657l-8 0M704 663l-2 2-4 0M930 651l0-2M386 659l-2 2M696 649l-2 2-2 0M602 647l2 2 2 0 2-2M658 629l0-4-2-2M440 635l2 2 0 2M772 621l0-4M808 617l-2 0 0-2-4-4M688 583l-10-10M796 573l4-4 0-6M594 579l-2 2 0 2M716 571l2 2 0 2-4 6M620 563l6-4 2 2M478 559l6-6M560 549l0-4-2-2 0-2M462 545l6-4-2-2M598 535l0-6M432 537l-2 0M596 535l0-4 2-2M598 819l-2-2M420 819l0 2M718 813l4 4 2 0M382 793l-2 0M396 789l4 0 2 2M662 791l0 4 4 4M464 795l4 4 2 0 0 2 2 2M520 791l-2 0-2 2-4 0M580 783l2 0M772 781l4 4M648 777l2-2 2 0M714 769l2 2 0 2M714 767l0 2M464 763l2 2 2 0M666 753l-2 2M426 753l0-4 2-2M462 731l-2 2M632 741l0 2 2 0 0 2 2 2M392 729l-2-2M498 735l0 4 2 2M830 725l0 2M766 719l2 0M860 715l2 0 6 6 2 0 4 4M728 719l0 2M498 709l0 4-2 2M852 709l2-2 2 2 6 0 2-2 4 4M740 707l6 4 0 6M934 709l-2 2 0 2M760 711l0 2M724 695l-4 4M588 695l-2 0M406 699l-2 2-2 0M736 691l0-2M798 687l-4-6M466 695l0 8-2 2 0 6-2 2M450 691l-8 0-2 2 0 2-4 4M876 691l2 2M840 671l-2-2 0-4M830 669l2-2 0-4M818 679l-2-2-4 0-2-2-2 0M988 675l4 4M732 675l-4 4M880 655l0-2M484 665l2 2M414 665l0 2 4 4 0 2M958 667l0 2M916 647l0-2M456 657l-4 4M780 643l4 0 2 2 0 2M840 637l-2 2M760 631l-6-6 0-2 6-6M412 629l-2 0-2-2-2 2M860 639l6 6M574 637l0 4M548 641l-2 0 0 2M512 625l-2 2 0 2-4 4M852 613l0-2 2-2-6-4M384 625l4 4 0 2-2 2 0 2 2 2M390 621l0 2 2 2 2 0M780 609l-2-2M708 601l4-6M594 601l8-8M660 599l-2 0-2-2 0-2-2-2-2 0M444 603l-4 0M452 599l-4 4 0 2-2 0-2-2M724 587l4 4 2-2M776 583l-2-2-2 0-4 4M652 577l-6 0-2-2M594 555l-2 0-2-2M580 543l2-2M536 545l0-2 6-6M392 531l-2-2M732 829l0-2M460 839l2 2 0 4M394 821l2 0 0 4M586 823l-4 4M550 827l0 2-2 2M542 811l-2-2-2 2-2 0M566 815l-2 2-2 0-4 4 0 2-4 4 0 2M474 807l-2 0-4 4M464 813l0 4M542 801l-4 4M606 801l0 4-4 0M692 787l-2 0-2 2M384 781l-2-2M450 785l-2 2M684 785l-4 4 0 2M762 777l-2 0M594 767l2 2M748 759l2 2M622 763l2 0 2 2M686 739l-2-2-4 0-2 2-2 0M750 727l2 2M594 727l2 0 2 2M464 721l-2-2 0-2 2-2-2-2M636 723l0 2 2 2M800 717l-2 0-4 4-4 0-2 2M594 725l0 2M882 711l-2-2M812 709l-2 2M718 703l-2 0M800 699l-4 0M608 699l0 2-2 2M936 697l-2 0M758 699l2 0M954 699l4 4M896 693l-2 2 0 4M476 689l0 2 4 4 0 2 2 2 0 4M962 693l4 4M476 687l0 2M524 675l4 0 4 4M950 669l2 0M936 659l0-2-6-6M800 665l2 2M534 665l2 6M592 663l-2 2 2 2-2 2 2 2M736 641l2-2M672 653l-10 10M414 647l-4-4 0-2-6-6M604 641l6 6M454 631l6-6M776 625l-4-4M478 625l2-2-2-6-4 0-2-2M444 635l0 2-2 2M840 635l0 2M592 621l-2 2M698 623l2-2M598 611l0-2M556 597l0-2M874 597l0-2-2-2M862 599l0-2 4-4 0-2 2 0 0-2 2-2M858 591l-2-2 0-2-4-4M784 589l-2 2M452 583l-4 0-2-2-2 0M522 575l-2-2-2-6-4-4 0-4M542 577l-4-4 2-2 2-6M420 569l0-2 4-4 0-2 2-2M544 553l-4 4-4 0M682 559l4 4M432 559l-4 0M514 553l0-2 2-2M488 547l-4-6M572 545l-2-2M554 541l-2-2 4-4M514 523l8-8" stroke-width="1.0" stroke-opacity="0.5"/>
<path d="M700 779l-2-2M742 647l-2-2M722 625l2-2M974 389l-2 0M958 337l-2 2-2 0M884 801l2-2M898 313l2-2M1056 265l0 2 2 2M678 793l0 4M850 197l0-2M704 781l-2 0-2-2M696 663l-2 0 0-2M928 317l-6 6M796 633l-4 0 0 2M758 601l2 2-2 6 2 0 2 2M496 565l6 0M514 659l-4 4 0 2-2 0-2 2M1008 171l-6-6 0-2M928 775l-2 0 0 2M1094 269l-2 2 0 2 2 2 0 4M900 721l4 4 0 2M882 805l2 0 0-4M534 693l2 2-2 6M880 631l0 4 2 2M722 681l-4 4M584 619l0 2-2 2 2 2 0 2-2 2M738 795l2 2 0 4-2 2M780 767l0 2 4 4M752 595l2 0 4 6M856 579l-2-2-2 0M530 689l0 2 2 0 2 2M830 845l0 12M676 701l0 8 2 2M910 597l2 2 4 0 2-2 2 2M504 621l-4 0-2-2 0-2-4-4M788 729l0 4 2 2M450 549l2-2 0-2 4-4 0-6-2-2 0-4M970 335l-2 2-10 0M1032 201l2-2 2 0 0-2 2-2 2 2M870 263l-2 2-10 0M406 629l-4 6M994 581l2-2M780 677l2 2 0 2 4 0 6-4M944 559l-2-2-2 2-2-2M382 513l0-2M738 789l2 2 0 2-2 2M906 595l2 2 2 0M846 527l0-6M540 633l6 10M1098 263l-4 6M1086 229l-4-4 0-6-2 0-2 2-2-2M804 865l-2 2-2 0M776 675l4 0 0 2M614 717l-2 2-2 0 0 4-4 4 2 2 0 2M668 695l4 4 2 0 2 2M882 139l0-2 2 0M916 697l2 0 2 2 4 0M1026 281l10-6M524 657l-2 2-2-2-6-2 0 4M1014 173l-4 0-2-2M424 841l-2 2-2 0M610 807l-2 0-2 2-4-4-2 0-2-2 0-2M506 613l0 6-2 2M1028 197l4 4M984 189l2 0 2-2 0-2 4-4M676 611l0 2-2 0M448 557l0-2 2-2-2-2 2-2M418 837l2 6M750 731l-4 4 0 4M772 679l4-4M588 551l0-4-6-6 4-6 0-6 2-2M874 265l-2-2-2 0M448 715l0-2M678 607l0 2-2 2M1094 385l0 2 2 0 0 2 4 4-4 4M1128 381l-2 2 0 2-2 0 0 2-6 6M978 605l6 4M742 553l2 2 2 0 2-2 0-4 2-2M536 557l-2-2-8 0M384 521l0-4-2-2 0-2M472 775l6 0 0 2 4 4M420 675l4 0 2 2M494 637l0 6-2 2M408 795l4 0 0 4-4 4 0 4M398 583l0-6 2-2 0-2-2-2 2-2 0-2M1092 231l-4 0-2-2M656 777l2 0 2-2 4 0 2 2 0 2M668 691l-2 0 0 2 2 2M888 137l-4 0M476 755l4 0 2 2 0 4M546 529l2-2 2 0 4-4M866 855l4 0M714 739l6 0 2 2 4 0 2-2 2 0 2 2 2 0M560 731l0-2 4-4 2 0 2 2 4-4M898 709l0 10 2 2M898 595l2-2 6 0 0 2M478 547l4-4 2 0 0-8M418 831l0 6M574 619l2-2 6 0 2 2M818 397l2-2 10 0 2-2 2 0M974 597l0 4 4 4M950 391l0 2-2 2-6 0M1100 255l-2 2 0 6M1096 179l-2 2 0 2 2 2M902 855l0 6M450 795l2-2 10 10 4 0 2 2 0 2M806 673l-2-6M944 609l0 2M986 221l-2 2 0 2 2 2 2 0 2 2 0 2 4 4M736 783l2 6M716 591l-2 2M584 785l2 0 0 10M1052 377l0-10M922 345l-2-2-6 0-4-4M832 719l0 6-2 2 4 4 0 2-2 2M1144 229l8 8 0 8M652 785l2-2 0-4 2-2M470 751l4 0 0 2 2 2M1052 259l0 2 4 4M950 171l-2 0 0 2-2 2 0 2 2 2 0 6-2 2-2 0-4 4M436 831l-2 2-6 0-4 4 2 2-2 2M538 767l0 6 2 2M734 733l2 2 0 2 6 0 2 2 2 0M514 603l-8 10M868 233l2 2 2 0 2-2 2 2 2 0M884 537l-2 2-2 0-10-6M716 583l0 4 2 2-2 2M898 561l0 2 4 4-4 4 0 2 10 8M458 713l-2 0-4 4-2 0-2-2M510 539l2 2 2 0 0-2 4-4 2 0 2-2M898 293l4 0M996 245l0-4 4-6M890 785l2 2 4 0 6 6M714 775l-10 6M468 749l0 2 2 0M414 717l-4-4-2-6-4-4M626 609l2 0 2-2 0-2 4-4 0-6M418 595l2 0 0-2 2-2 0-4 4-4 0-2 2-2M466 771l2 2 2 0 0 2 2 0M794 697l-4-6 0-2 2-2 0-4 2-2M654 609l0-2-4-4 0-2-4-4 0-2M632 777l0-2 4-4M702 719l0-8M512 863l0 4M884 261l-4 0-4 4-2 0M980 255l-2-2 0-6 10-10M920 825l2 2 6 0 2-2M618 813l-4 0-4-6M1126 355l-4-4 0-6M962 149l-2-2 0-6-2-2M578 835l-2-2 0-2-2 0-4-4-6 0-2-2M958 277l-4 0-2 2-6-6M880 809l0-2 2-2M810 857l-2 2 0 2-4 4M780 661l2-2 2 0 0-2 6-6 4 4M438 825l-2 2 0 4M584 697l0 2-4 4M502 609l-4 4-4 0M1102 227l-6 0-4 4M560 783l-4 6M696 761l-4 4-4 0-4 4M612 649l4 0 0 2M894 559l2 0 2 2M868 585l-4-4 0-2-8 0M1020 321l4 0 0 2 2 2 2-2 2 0 2 2M1124 167l4 0 4 6M472 599l0 4 2 2 0 2-2 2 0 2-2 2-2 0M880 695l2 2 0 2-6 6-2 6M492 861l6 0 2 2M966 587l8 8 0 2M420 821l-4 4 2 6M382 663l-2 2-2 0M540 623l0 10M438 575l-2-2-2 0 0-2-4-4M872 629l6 0 2 2M858 859l2 0 6-4M648 795l2-2-2-6 2-2 2 0M668 685l2 0 2 2 0 2-2 0-2 2M1136 379l-6 0-2 2M532 769l6 6 2 0M958 677l8 8 2 0 2 2 0 4 2 2M938 301l-2 2 0 2-6 6 2 2-4 4M904 283l-4 4 0 4 2 2M784 715l0 2 4 6 0 6M810 631l0 2-2 2-4 0-2-2-6 0M948 367l-6 0M878 211l2-2 4 0 4 6 2-2 2 0 2 2 8-8M960 175l-2-2-2 0-4-4-2 2M790 827l-2 0-2 2M1078 199l0 4M830 833l0 2 2 2 0 6-2 2M664 685l4 0M824 567l0-2M420 537l-4-4-2 2-2 0-2-2M972 525l2-2 0-4M652 617l-2-2 0-2 4-4M486 585l-2-2 0-10 12-8M856 549l-2 0-2-2 0-2-2-2-2 0-4-4 0-6 2 0 0-6M1008 353l0 2 4 4 0 8M974 313l4-4 0-2-4-4M1144 253l2 2 2 0 4-4M1140 223l0 4 2 0 2 2M1022 197l6 0M746 863l6 4 8 0M412 861l2 2 0 4M662 853l2 2 0 4-4 4 0 2-2 2M412 727l0-2 2-2 0-6M896 703l2 2 0 4M574 753l2-2 2 0 4-4 6 0M916 521l2-2M720 645l8 0 0-2 12-12M944 605l-2 0 0 2 2 2M1046 159l2 2 0 2 4 4 2-2 4 0 2 2 2-2 4 0 2 2M642 731l0 4 4 6 6-2 4 4 2 0 2 2M406 689l-4 4-2 0-4 4 0 2M870 625l0 2 2 2M884 813l-2-2-2 0 0-2M690 837l4-4 2 0M688 819l-2 0 0 2M1066 337l4 4 0 2-2 2 0 4M872 145l6 2 2-2 0-4 2-2M650 701l0 4 4 4 4 0 4-4 2 2 6 0M410 669l4 0 6 6M654 621l-2-2 0-2M618 539l0-8M580 827l-4 4M762 701l4 0 2 2 0 4 4 4 0 4 2 2 0 8M488 665l6-2 4 4 2 0M478 597l-4 0-2 2M896 859l2 2 4 0M644 833l0 8-2 0-2 2 0 2-4 4 0 2-2 2M748 627l-4-6M618 837l-2 2 0 6-2 2-2 0 0 6-6 6 0 2M800 703l-6-6M606 679l0-4-2 0-8-8M880 627l-2 0 0 2M892 539l-2 0-2-2-4 0M912 521l2 2 2-2M938 313l-6 0M492 671l6-4M828 601l4-4 0-2 2 0 2-2M1034 383l2-2 0-4-2-2 2-2 2 0 10-6M958 379l-4 0-4 4 0 4-2 2 2 2M630 773l4 0M684 601l-2 2 0 2-2 0-2 2M952 193l-2 2 0 10-4 4 0 2-2 2M544 865l2 2 2-2 2 0 2 2M770 661l2 2 2 0 2-2 4 0M586 559l2 0 2-2 0-4-2-2M688 837l2 0M816 781l-6 2-6-4-6 4M746 589l6 6M518 859l-2 0-4 4M866 767l-2 0-2-2-2 0-2 2M1048 257l0 2 2 2 2 0M698 795l-2 2-2-2-2 0-4-6-2 0-2 2-4 0-2 2M586 693l0 2-2 2M762 687l2-2 2 0 0-2 6-4M928 349l-2 0-4-4M1116 311l-2 0-2 2-6-6-6 0M478 759l2 0 0 4 2 2M812 627l-2 2 0 2M972 529l-2-2 2-2M986 307l-2 0-2 2M942 233l-2-2-4 4M506 599l-2 2 0 6-2 2M1020 197l2 0M806 791l-4-4-2 0 0-2-2-2M536 761l2 6M932 689l0 2-2 2-2 0-4 4 0 2M882 623l0 2-2 2M710 549l2-2-2-6-4-4-6 0-4-4 0-2M574 843l2-2 2-6M906 843l-2 2 0 8-2 2M558 835l-4-4-2 0M538 803l0 4M810 681l0-4-4-4M1138 283l6-6M504 539l6 0M998 249l0-2-2-2M734 767l0 2 2 2 0 12M500 719l2 2 6 0 2 2 0 4M488 587l-2-2M1006 347l2 2 0 4M1088 179l6 4M886 815l0-2-2 0M628 771l2 2M460 531l0-2M992 317l-2-2 0-2-2 0 0-2-2-2-4 0M980 257l0-2M894 857l2 2M426 773l-4-6M844 767l4 4M490 641l2 2 0 2M1112 355l0-4 2-2M904 281l0 2M554 737l2 0 4-4 0-2M668 733l2 2 0 2-2 2M896 595l2 0M802 603l-4-4-2 0M422 539l-2-2M1102 249l0 4-2 2M870 147l2-2M880 805l2 0M768 719l6 6M596 709l0-2-2 0-2 2-2-2-2 0-2-2-6-2M636 677l12-14M750 629l-2-2M624 611l2-2M560 621l2 0 2 2 0 2 2 0 4-4 2 0 2-2M1018 261l6 0 8 8 0 2 4 4M1080 195l0 2-2 2M1136 167l-2 0-2 2 0 4M524 645l4 4-2 2 2 2-4 4M840 595l-2-2-2 0M920 555l2-2 0-2 4-4 0-2 2 0 6-6 2 0M1104 143l-2-2 0-4M646 831l-2 2M414 597l0-2 4 0M560 591l0-2 4-6M1146 245l2-2 2 0M912 205l4 6M906 171l-2 2-2 0-6-6M1140 147l2 2 2-2 4 0 2 2 2-2M710 739l2-2 2 2M724 677l0 2-2 2M462 623l2-2 0-6M722 867l-2 0M646 753l0 2-2 2 4 4M910 691l2 0 4 6M974 335l-4 0M918 823l2 2M622 813l-4 0M454 769l2 2 10 0M662 683l2 2M518 601l-2 0-2 2M986 527l0-2M1100 177l-2 0-2 2M746 659l0-2-4-6 0-4M516 781l-2 2 0 4 2 2-6 6 0 2-2 2M838 641l0 4 6 6 0 4M782 615l-6-6 4-4M978 561l6 4 4 0 2 2 0 2 4 4M950 563l-2 0-4-4M1110 297l-4 4-2 0-4 6M950 739l4 4M598 625l-2-2-6 0-6 6 0 2-2 2M640 603l-2-2 0-2-4-4M920 299l-4 0-2 2M768 725l2-2 2 0M794 827l-2 2-2-2M760 699l2 2M1078 243l-2-2-2 0-4-4 0-10-2-2-2 0M1054 257l-2 2M884 169l2 2M656 803l6-4 4 0 2 2M392 691l-4 6M962 585l2 0 2 2M1120 165l2 2 2 0M1074 149l-2 0-4 4-2 0-2 2 0 6M740 589l4 4 6 0M528 767l2 2 2 0M786 713l-2 2M450 709l0 2-2 2M856 677l0-8-2-2 0-2M1048 379l2 0 2-2M508 805l2 0M446 791l2 2 0 2 2 0M696 759l0 2M502 747l-4 0M880 653l0-2M384 661l-2 2M420 621l-6 4-6 0-2 2 0 2M618 541l0-2M1138 379l-2 0M1046 359l2 2 4 0 4 4M1046 157l0 2M1024 273l2 0 4-4 2 2M934 255l2-2 8 0M598 809l-2-2 0-4 2-2M828 807l4 4 0 2 2 2M704 623l2-2 2 2 4 0 2-2 6 6 2-2M678 535l2-2 0-2M976 317l-2-2 0-2M1100 141l2-2M690 817l-2 2M1102 281l-2 2 0 2M986 203l-6-10 4-4M732 823l4-4M862 763l-2 2M832 711l0 8M538 621l2 2M608 593l2-2 0-4M1150 401l2 2M1020 285l2-2 4 0 0-2M744 863l2 0M778 851l2 2M400 815l2 2M958 673l0 4M682 619l-2 0-6-6M556 595l4-4M1014 291l6-6M396 763l-2 0-6-4-2 2-2 0M810 755l-8 0-2-2-4 4-4 0M810 747l0 8M538 727l-2 0-2-2-2 2-6 0-2 2-4 0-2-2M384 721l-2 2-4 0M728 679l-2 2-2-2M848 667l0-2M394 625l0 2-4 4 0 2-4 6M396 595l2-2-2-2 0-2 2-2 0-4M648 563l-2 0M984 217l0 2 2 2M852 197l-2-2M410 859l2 2M440 823l-2 2M462 743l6 6M696 673l4-4-4-6M870 587l-2-2M866 537l4-4M738 557l0-2 2-2 2 0M1134 271l4 4M600 853l0 2 6 6M462 845l0 2 2 2M390 757l-2 2M560 529l-4-4M888 259l-2 0-2 2M1122 257l4 4 4 0 4 4 0 2-2 2 2 2M904 195l8 8 0 2M724 831l8-8M572 753l2 0M440 607l-6-6M994 583l0-2M1048 317l0-6-2-2 2-2M868 241l4-4 4 0 2-2M952 207l-2-2M560 779l2 2-2 2M704 627l-2-2 2-2M890 299l-2 2 0 4 2 2 0 2 6 6 2-2M894 289l4 4M1002 147l-2-2-2 2M856 855l0 2 2 2M602 849l0 2-2 2M716 773l-2 2M798 733l-6 0-2 2M878 693l2 2M684 565l-4 4 0 2-4 4-2 0M732 557l6 0M1026 333l4-4 0-2 2-2M1010 223l2 6M914 181l-2-2-2 0-6-6M582 783l2 2M868 623l2 2M1084 385l4-4 2 0 4 4M954 373l-6-6M890 139l-2-2M810 851l0 6M630 783l2-2 0-4M852 583l0-6M480 595l-2 2M994 381l-4 4-6 0-6 6-2 0-2-2M930 155l2-2-2-2M1024 141l-2-2M582 827l-2 0M832 827l0 4-2 2M642 797l6-2M828 803l0 4M392 755l-2 2M410 729l2-2M438 723l-6-6M930 649l0-4-4-6M674 621l2-2-2-6M860 551l-2-2-2 0M1060 353l2 2M1016 317l4 4M1040 281l2-2M960 275l-2 2M1110 223l-2 2-4 0-2 2M488 861l4 0M438 851l0 2-2 2 0 6 4 6M424 777l0-6M456 663l-4 0M884 579l2 2 2-2 4 0 4 4 4 0 2-2 2 2 2 0 2-2M388 531l2 0 0-2-6-6 0-2M922 237l2 0 2 2 2 0 4 4 6 2M1142 219l0 2-2 2M776 763l4 4M894 699l0 2 2 2M988 591l0-2 2 0 4-6M424 577l2-2M822 569l2-2M656 531l-2 0M904 401l-2-2M926 151l2-2 2 2M498 857l-2 2 2 2M658 849l0 2 2 0 2 2M640 729l2 2M946 603l-2 2M940 301l-2 0M902 231l-2-2 0-2 14-14M832 807l0 4M854 729l4 4 10 0 2 2 2 0 4-4 2 0 2-2M628 709l-6 4-4 0-4 4M476 715l0 2M532 681l0 2-2 2 0 4M640 641l-6 6-4 0-6-4M440 641l0 2-2 2 2 2-4 4 0 6-4 4M708 593l2 2 2 0 2-2M458 571l-2-2 0-2-4-4 0-2-4-4M686 563l-2 2M806 403l6-6 2 0 2-2 2 2M1136 357l-2-2-4 0-2 2-2-2M1064 335l2 2M966 151l-2 0-2-2M486 829l-2 2M716 821l4 0 6-6 2 0 2-2 6 6M894 749l2-2M732 727l2 2 0 4M486 667l2-2M610 647l2 2M442 579l-4-4M958 249l2-2M1040 195l0 2M1016 173l-2 0M402 791l2 0 4 4M676 763l4 4M482 707l0 2-6 6M458 661l-2 2M464 649l0 4-6 6 0 2M530 563l0-2-4-6M564 571l10 10M714 581l2 2M598 729l4 0 2 2 0 2 4 4M868 711l2 2 2 6 2 2 2 0M408 687l-2 2M692 699l-6 4-2 6M532 679l0 2M442 639l-2 2M656 623l-2-2M772 617l6-6M802 611l0-2-2-2 2-2-2-2 0-2M800 563l0-2M592 583l4 4M542 565l-4-4 0-2-2-2M558 541l0-4-4-4 0-6 2-2M874 725l2 2 2-2M746 717l6 6 0 6-2 2M434 701l-6 4-2 0-2-2M462 713l-2-2-2 2M436 699l-2 2M502 637l-2 0-2-2-2 0-2 2M760 617l0-2M506 633l-4 4M602 593l4-4 2 0 2-2M652 593l-2 0-2-2M542 537l0-4 4-4M482 703l0 4M404 635l-2 0" stroke-width="1.4" stroke-opacity="0.66"/>
<path d="M790 735l2 2 0 2 4 4 0 2 4 4 0 2-4 4-2 0-2 2M516 551l0-2 4-6 0-4 2-2 0-4M738 817l8 8 6 0 4 4M1096 397l-6 6M728 605l4 4 6 0 2 2 4 0 2 2 4-4 2 2 2-2 6 6M936 209l-6 6 0 4-2 2M908 211l4 0M748 741l2 2-2 6 4 4-2 2 0 8 2 2-2 2 6 6 0 8-6 4 2 2 0 4 4 4M646 595l-6-4M702 711l-2-2-2 0-4-4-2 0-2 2-6 2-4 4M794 655l2 2 0 8 2 2 4 0M556 789l4 4 0 2-2 2 0 4-8 8-2 0-2-2-8 0-2 2 0 2-4 4 2 2 0 4 2 2 2 0 0 4-2 2-4 0M680 767l-6 6-2 0-2 2M434 735l0-2-6-6 0-2 2-2-2-2 0-2M386 639l-4 4-4 0M942 395l-10 0-2-2-2 2-4-4-2 0M1066 173l-4 6 0 12 6 6 6 0 4 6-2 2 0 6-4 0-4 4M500 667l10 10 0 2-2 2 0 4M936 539l2-2 0-2-6-6 0-2-2-2 2-2-2-2 2-2M472 615l-2 0-2-2-2 0-2 2-2-2-6 0-2-2-2 2-4-6-4 0-4-4M510 513l2 0M514 515l2-2M902 793l16-16M648 761l4-4 2 0 4 4M1042 279l6-6M604 751l-2 2 2 2 0 2-2 2M858 167l-2-2-2 0-4-4 0-2-2 0-2-2M662 663l-2 2-2 0-6-4-2 0-2 2-4-4-2 0 0-2-4-4-2 2-2-2-2 2-2-2-6 6-2 0-2 2-4 0M426 677l8 8 0 6M792 675l10-8M738 629l4-4 0-2 6-10 6 6 4-4 2 0M920 581l2 0 6 6-4 4 0 2-2 0 0 4-2 2 2 2 0 2-2 2M580 585l6 4 4 0 2-2 4 0 2-2 2 2 2-2 2 2 2 0 8-8M914 301l-8 8 4 4 0 2-2 2 10 10 0 2M878 725l2 2 0 2 4 4 0 4 6 6 2 0 4 4 2-2 2 0 2 2M576 639l-2 2 2 2 0 4-2 2 0 2 2 2-6 6 0 4-2 2-2 0 0 4M988 155l4-4 2 0 2 2 4-4-6-6 0-2-4-4M396 825l0 2 2 2-2 2 0 4-2 2 0 12-2 2 0 6-2 2 0 8M970 297l0-2-2-2-2 0-2-2-2 2-2 0-2-2-2 0-4-4 0-2-8-8 2-2 0-4-2-2 2-2-4-4M514 807l2 0 4 4 0 6-2 2 4 4-2 2 0 2-2 0-4 4M788 787l-4 4-2 0-2 2M648 591l-2 0-2-2-2 0-2 2M1036 369l2 0 4-4 2 2 8 0 2-2 2 0M930 711l4 4-4 4 0 2-2 2-4 0-2 2-6-2-8 8M482 615l-10 0M946 355l-2 2 0 6-2 2 0 4-2 2-2 0-4 4-4 0-6-6-4 0-2-2-4 0-2-2 0-4-2-2 0-4-4-4 0-6-4-4M1122 191l-4 0-2 2-10 0-12 12-2 0-4 4-2 0M946 349l2 2 0 2-2 2M1040 307l8 0 8-8 6 0 4 4 2-2 6-2 2 2 2 0 2 2 0 2 2 2 2 0 6 6 2 6M862 179l2-2 0-2-2-2 0-2-4-4M884 181l0 4 2 2 0 2 2 0 0 2 2 2 2 0 8 8 2 0 10 10M782 733l2 2 6 0M1100 397l-4 0M556 657l6 6 0 2 4 4M856 185l6-6M928 701l0 4-2 2 0 2 2 2 2 0M670 609l-2-2-8 0-10-10-2 0-2-2M714 705l-4 4 0 2-2 0-2-2-2 0-2 2M416 855l0 4 2 2-4 6M858 839l0 4 14 14M608 863l0 2 2 2 6 0M854 835l4 4M598 799l0-2 2-2-4-4-2 0-2 2-2 0-2 2 0 2-6 4M1034 323l2-2 0-4 2-2 0-6 2-2M1054 203l2 0 2 2 2 0 2-2 6 6 0 6M418 845l-2 2 0 4-2 2 2 2M546 783l2 2 4 0 4 4M490 733l2 2 0 4 4 4 0 6M874 521l2-2M410 551l4-4M542 779l2 2 0 2 2 0M576 717l-4 4 0 2 10 8 0 2 4 4 0 6 2 2 0 2M1022 369l6 4 2 0 4-4 2 0M1046 201l6 0 2 2M440 679l0 4-2 2 0 2-4 4M936 193l0 4-2 2 0 2 2 2-2 2 0 2 2 2M576 709l0 8M932 141l2-2 0-2 2 0M380 765l-2 2 0 6M722 601l2 0 4 4M628 861l-2 2-4 0-2 2 0 2M786 597l-2 2-4 0M432 661l-4 6 0 4-2 2 0 4M404 559l2-6 2 0 2-2M522 555l-2 0-4-4M398 637l-2 2-2-2-6 4-2-2M1116 395l-6 6-2 0 0-2-4-6-4 4M484 723l0 4-2 2 2 2 2 0 0 2 4 0M402 635l-2 2-2 0M836 589l2-2 2-6 2-2 2 0 0-4-10-10M688 773l0-2-2-2-4 0-2-2M930 151l2-2 2 0 0-4-2-2 0-2M858 767l-6 0-4 4 0 4 2 2 0 6 2 2-2 2 0 6M870 533l4-6 0-6M906 865l2 2M846 521l0-2M794 597l-2 2-4 0-2-2M490 647l0 6 6 6 0 2 4 4 0 2M1068 165l0 6-2 2M998 161l-4-4-2 0-2-2 0-2M488 531l4 0 2-2 0-2-4-4 0-4M632 855l-2 2 0 2-2 0 0 2M448 667l-2 2 0 2-2 0-2 2 0 2-2 0 0 4M992 181l-2-2 0-8 2-2-4-4 0-6-2-2 2-2M1138 275l2 2 8 0 2 2M694 777l-4 0 0-2-2-2M446 713l-4-4-4 0-2 2-2 0 0 2 2 2-2 2-4 0-2 2M942 211l-2-2-4 0M834 815l6 6 0 2 4 4 2 0 8 8M400 567l0-2 4-6M698 777l-4 0M740 645l0-2-2-2 0-4 2-2 0-4-2-2M724 623l2-2 0-8-2 0 0-2 4-6M972 389l-2 2-4 0-2-2-2 0-4 4-2-2-6 6-6 0-2-2M954 339l0 2-8 8M886 799l2 0 2-2 4 0 2 2 6-6M900 311l6-2M1058 269l4 4 0 2M678 797l-4 4 0 6-2 2M850 195l-2-2M850 189l4-4 2 0M694 661l0-4 2-2-4-4-2 2-2-2-2 0-2 2-2-2-4 4-2 0-8 8-6 0M922 323l0 2-4 4M792 635l-2 2 0 2 2 2 0 4 4 6 0 2-2 2M762 611l2 2M502 565l6 0 6-6 0-2 2-2 0-4M506 667l-2 0-2 2M1002 163l-2 0-2-2M1094 279l6 6-2 2M904 727l4 4M718 685l4 4-2 2 2 2 0 2-2 2 0 2-6 6M582 629l0 4-6 6M738 803l-2 2 0 10 2 2M852 577l-2-2 0-2-10-8M830 857l2 2-4 6M678 711l2 2M494 613l-6 0-2 2-4 0M1040 197l4 4 2 0M792 677l0-2M938 557l0-4 2-2 0-2-2-2 2-2 0-2-4-4M546 643l6 6 0 4 4 4M608 731l0 8-4 4 0 8M924 699l2 0 2 2M1036 275l6 4M420 843l-2 2M598 801l0-2M674 613l-4-4M746 739l2 2M448 713l-2 0M1118 393l-2 2M526 555l-2 2-2-2M492 645l-2 2M408 807l-4 4 0 4-2 2 0 2-6 6M554 523l-2-2 0-2M734 741l4 0 2 2 6 0 2-2M484 535l4-4M1096 185l2 2 0 4-2 2-2 6-6 6 0 2-2 2M902 861l4 4M714 593l8 8M832 735l6 6-2 2 4 4-2 2 4 4 0 2 10 10 0 2M940 191l-2 0-2 2M540 775l2 2 0 2M878 235l6-6 0-2 2-2 2 0 4-4 2 0 8-8 6-2M908 581l4-4 2 0 6 4M902 293l6 2 6 6M634 595l2-6M794 681l0-2-2-2M636 771l2 0 6-6 0-2 2-2 2 0M580 703l-4 6M616 651l0 2-2 2 0 4 2 2M1032 325l2-2M1132 173l-4 6 0 8-6 4M874 711l-2 2 2 2 0 2 2 2 0 4 2 2M500 863l0 2 2 2M902 207l2 0 4 4M1012 367l0 2 4 4 4-4 2 0M974 303l-4-4 0-2M670 707l2 2 2 0 4 4 0 2M774 725l8 8M634 853l-2 2M606 861l2 2M836 593l0-4M944 213l-2-2M798 783l-2-2-2 2-2 0-4 4M982 309l-6-6-2 0M422 767l2-2-2-2 6-6 0-2 4-4-4-4 0-2-2-2 8-8M796 599l-2-2M564 583l0-4 2-2 4 4 4 0 6 4M896 167l-2 0-2 2-6 2-4 4 0 4 2 2M508 799l2 6 2 2 2 0M994 573l2 2M1066 225l-2-2M1064 161l4 4M736 819l2-2M610 587l4-4 0-4M384 761l-4 4M518 727l-4 4-4 0-2-2M556 525l-2-2M674 575l-6 4-4 0-2 2-2 0-8 8-2 0-2 2M452 663l-4 4M476 717l2 2 2 0 4 4M624 643l-8 8" stroke-width="1.9" stroke-opacity="0.82"/>
<path d="M792 757l-6 6 2 2-2 2-2 6-8 8 0 4 2 2 0 4 2 2 0 4 4 4 2 0 2 2 0 2-2 2 0 16-4 4 2 2-2 2 0 4 2 2 0 6 2 2 0 2-6 6 0 4 2 2-4 4 0 4M522 533l-2-2 0-2 2-2 0-4 2-2 0-4-2-2M756 829l0 2 2 2 0 24 2 2 0 8M760 615l2-2 6-2 4-4 4 0 6-4 0-2-8-8-2 0-2-2 0-4-6-6 0-2 6-6 0-4 12-12M928 221l6 6 0 4 2 2 0 2-2 2 2 2 0 4 8 8 2 0M912 211l2 2 2-2 2 2 2 0 8 8M756 795l0 2-2 2 4 4 0 4 4 6-4 4 2 2-2 2 0 4-2 2 0 2M640 591l-2 0-2-2 0-6 4-4 0-2 4-4 0-2 4-6-8-8 6-6-2-2 0-4 10-6 0-8-2-2M680 713l-2 2 4 4 2 6-6 6 0 2-2 2 0 4-2 0-2 2-6-2-6 6 2 2-4 6 2 2 0 2-2 2 2 6 4 0 4 4 0 4 2 2-6 6 0 2 6 6-2 2 2 2 0 2-2 2 0 4M802 667l6-2 4-4 2 0 4 4 2 0 6-4 4 0 6 4 2-2M428 719l-12-12-2 0-6-4-4 0-2-2-4 0-2-2-2 2-2-2-2 0-6-6-6 0M1068 215l-2 0-4 4 0 2-6 0-2-2-2 2-6 0-2 2-2-2-2 0-4 4-2 0-2-2-4 0-2-2-2 2-2-2-2 2-2 0-6 6 0 4M508 685l2 2 0 2-2 2 2 6 4 4 2 0 0 2 4 4 2 0 0 2 2 2-2 2 0 4M440 603l-6-2-6-6 0-16-2-2 0-2 2 0 2-2 0-12-2-2-2 0-10-10-2 0 0-4-2-2 2-2 0-2-8-10 0-6-2-2 2-2-2-2 0-2 2-2 0-4-2-2-2-6M918 777l8 0 4 4M602 759l-4 4 0 2-4 6 2 2-2 2 0 8-4 4-2 6-6 6 0 2-8 10 0 2-2 2 0 2-4 4 0 2-2 2-6 0-2 2-2 0-4 4-6 0-2 2-2 0-2-2-2 2-6-4M616 661l-2 2-6 0-2-2-4 4-4 0-14 14-2 0-8 8-4 0-4 4-6 0-2 2-4-4-4 0-8 8-2 0-4 4-2 0-2 2 0 2M434 691l-2 2 0 2-8 8-2 0-4 4-2 0M614 579l10-10 0-2 4-4 0-2 4-4 2 0 6-6 2 0 2-2M918 329l-8 8 0 2-2 2-14 0M902 747l4 0 2 2 2-2 4 4 0 4-2 2-2 6-4 4-4 0 0 2 4 4 12 4M566 669l0 2-4 4-2 0-10 10-2 6M942 263l-4-4 8-8M1056 365l2 2 4-4 2 0M908 731l-2 2 0 2 2 2 0 2 4 4-2 2 0 2M1086 209l-10 10-2 0-2-2-6 6-2 0-2-2M872 857l0 2 2 2 0 6M588 747l14 12M850 793l2 2 2 0 0 2 4 4 0 6 4 4 0 8 4 4 0 2 2 2 0 6 2 2 0 6 2 2 0 4 2 2-2 2 0 6" stroke-width="2.6" stroke-opacity="0.93"/>
<path d="M946 251l2 0 4-6 2 0 2 2 2-2 2 2 2 0 2-2 4 0 2-2 4 0 6-6 8 0 2-2 2 2 4-4 2 2 2 0 4-4 6 0 14 14 0 2 14 14 0 2 10 10 6 0 2 2 6 0 6 4 4 0 2-2 6 6 2 0 2-2 2 2 2-2 2 2 4 0 4 4-4 4 4 4-2 2 0 2 2 2-2 2 4 4-2 2 0 4-8 8 0 2-2 2 0 6-2 2-2 6-10 10-2-2-2 2-2 0-6 6 0 4 4 6 2-2 2 0 2 2 4 0 2-2 2 2 4 0 4-4 6 0 6-6 2 0 2-2 4 0 4-4 2 0 2-2 4 0 6-6-2-2 4-4 0-2 16-16 2 0 4-4 2 0M668 801l2 2 0 2 2 2 2 6 6 6 4 0 8 8 0 2 10 8 2 6 10 8 0 4 6 6 0 6M532 829l-2 2-2-2-2 0-4 4-2 0-2-2-8 0-2-2-2 0-2 2-2 0-2-2-6 4-8 0-2-2-4 0-14 12 0 4-6 10 0 6-2 2 0 2-2 0M522 717l-4 4-2 0-12 12 0 2-4 6 2 2-8 8-4 0-6 4 0 4-2 2 0 6-2 2 0 2 2 2 0 8 2 2-6 6 2 2 0 2-4 4 0 2-8 8 0 14-2 2 4 4 0 8 2 2M532 705l-6 6 0 2-4 4" stroke-width="3.4" stroke-opacity="1.0"/>
</g>
<g filter="url(#bR)" fill="none" stroke="#fff" stroke-width="1" stroke-linecap="round" stroke-linejoin="round" opacity="0.5">
<path d="M684 553l1 3M504 556l2 2 4 0M852 590l-1 3-2 2M860 594l-2 2-1 5-1 1M856 620l3 2M825 626l2 0M977 660l-3 2 0 2M807 668l2 0 1 1M788 671l1 1 2 0M783 676l2 2M789 682l-2 2-10 1M948 687l2 0M926 689l-5 6M901 690l1 4M478 699l1 2M759 702l2 2 2 0 1 1 0 4 1 1M765 711l0 2M781 712l0 3-2 2M854 713l1-1 9 0 1 1M853 714l0 3M563 721l2 0 3 2M745 722l2 0M646 730l-1 0 0 1M645 731l0 3M745 732l-2 1M742 733l1 1 0-1M789 738l-1 2" stroke-opacity="0.3"/>
<path d="M514 530l3 2M509 531l-4 4-2 0M517 540l0 2-2 2-4 2-2 0-2 3-2 0-3 3M492 541l3 3 1 5 3 3M388 545l0 4M433 547l0 3M606 547l-1 2M444 548l-2 3M528 548l3 3 5 0 2 2 4-2M596 548l2 0 1 1 5 0M382 550l5 0M486 550l2 3 0 6M557 550l-2 3M464 551l-2 2 0 2-1 1M549 551l3 2 2 0M499 552l-6 7M654 552l-1 1-2 0-4 4M675 552l8 0M502 553l1 2M411 554l0 4 1 1M417 554l0 2-4 3M476 554l-4 4 0 4-1 1M583 554l3 1M663 556l-5 5-3 0M503 557l0 2M493 559l2 2M672 559l3 3 3 1 1 1 0 2M395 560l4 0M519 560l2 2M525 560l-2 2M703 560l-5 5M733 560l-2 2-3 7-3 3M714 561l3 3M741 561l-2 4 0 4M421 562l-2 2-7 1M711 568l2 3 1 4M721 568l4 4M756 568l1 2M739 570l-3 2-2 0-4 4M744 573l-2 2 1 5M748 573l7 0M756 574l0 2 1 1M773 577l-2 0-3 3M784 583l-4 4-2 0-1 1M802 583l-2 2M826 583l0 6M790 584l4 1 2 2M773 585l0 1 3 2M835 585l-5 5-3 0M796 587l-5 6-4 0-4 3M843 587l0 4 1 2 3 2M777 589l1 1 0 3M848 596l1 1 0 4 3 2 3 0M866 600l0 4-1 1M774 601l5 1M856 604l2 2M865 605l-1 1-5 0M785 614l7 1M857 615l8 1 5 4M818 616l-3 4-11 3-2 2M856 616l0 4M841 620l4 4 0 2 2 4M834 622l3 3-1 2 1 9M796 624l-5 5-2 0-2 2-2 4 0 2M828 627l0 5-6 6M848 631l4 0M847 632l-1 2M822 639l3 3 5 0 1 1 0 2-2 3M795 642l0-2 3-2 1 1 3 0 3 3 1 7 1 1M818 648l2 2M813 651l6 7M935 651l3 2 3 0M919 657l-6 4M787 658l0 2 2 2M793 658l-3 4M790 663l5 5M785 666l2 3M964 670l0 2 2 4 4-1M949 677l1 1 2 0 5 4M948 678l-1 1 0 4M917 683l1 1 4 0 3 2 1 2M916 684l0 7M946 684l-5 1-6 6 0 1-6 5M947 688l-1 2M760 689l1 1 7 1 1 1M787 690l-2 3 0 2M885 690l-1 2 1 1 0 5 2 2 0 2M459 691l-2 0-5 4-2 0-1 1-2-2M460 691l2 2 0 4M769 693l-5 5-1 0M901 695l-3 2 0 3M903 695l3 0 2 2 0 3M784 696l-6 0-3 3M786 696l1 2M473 697l2 0 1 1M417 699l-1 2-3 0M774 699l-1 1 0 3 2 3M775 699l4 3M887 703l-1 1-5 1M504 706l-2 2M558 708l0 2 2 2 0 2 2 3 0 3M800 712l2 0 4 3 4 0 3 3M843 714l2 2M756 716l3 0M755 717l1 1 0 5 3 3M603 718l-2 4 2 3M779 718l0 3 4 5 2 5M813 718l-4 4-7 1-3 2-5 0-3 5M818 719l-3 4 0 6-3 2-2 0-4 3M820 719l4 4 1 3M741 722l-2 3-1 5 4 3M767 722l-2 0-4 4M578 723l2-1 5 1M615 725l-4 1M616 726l0 2 1 1M651 726l-4 4-1 0M628 727l-5 4 0 2-2 4M759 730l-3 3-5 2-2 3M775 730l2 2 0 2 1 1 0 5-1 1M721 731l-5 5-1 0M611 732l1 4 5 2M763 732l6 1M795 736l1 1 2 0M618 738l2 0M621 738l4 2 1 2M617 739l-2 3M637 740l0 1 1-1M704 742l-2 1-5 0M668 745l7 1M745 746l-4 4M676 747l1 3M696 750l2 2 3 0M757 753l-1 2M719 757l3 3M718 758l0 3" stroke-opacity="0.4"/>
<path d="M505 528l2 0 2 2M513 529l-3 1M525 536l2 4 0 7M526 548l-2 1M401 549l-7 3M570 549l1 5 3 3M617 549l2 2M389 550l4 2M605 550l1 9M433 551l-3 3-2 0M434 551l7 0M632 551l-12 1M670 551l2 2M499 552l2 0M658 552l1 0 4 4M394 553l0 6M619 553l-3 5-5 2-4 0M581 554l-1 1-2 0-2 2M672 554l0 3M697 554l-3 6 1 4 2 1M663 556l6 0 2 2M721 558l-6 0-1 2M493 559l-3 0-1 1M412 560l-1 4M713 561l-2 5M513 566l2 2 0 3 2 2 0 4-3 3M740 570l5 2M757 571l-1 2M725 572l0 3M726 576l3 0M730 577l1 2M567 582l0 2 1 1M814 582l1 1 0 4-3 3M797 584l2 2M796 587l2 0M801 587l4 3M805 590l6 1M805 590l-6 6M825 590l-3 0-3 3M603 596l-4 4M466 605l2 2M865 605l5 3M600 606l1 0 0 1M783 607l2 0 2-2 5 0 1 1 0 8M793 615l2 2 2 6M832 621l-4 5M534 623l2 1 1 2M798 624l1 1 3 0M578 625l2 2M706 625l5 2M802 625l4 5M817 634l4 4M820 639l-1 1-1 7M799 648l5 5 1 0M817 648l-4 3M807 651l-2 2M808 651l5 0M805 653l1 1 0 3-3 6M638 657l-4 2M933 658l-3 3M599 661l-2 1M789 663l-4 2M493 666l-2 2-2 0-2 2-2 0-3 2-3 4M420 669l1 2M777 682l-1 2M776 685l-4 3 0 3-1 1M648 691l3 3M771 693l3 6M698 695l-1 2M525 699l1 2 0 4M587 700l-2 2M857 700l0 5 2 1M908 700l-1 1 1 0M497 701l-2 2-4 1-1 2M498 701l4 1 2 3M909 701l2 0M887 702l1 1-1 0M547 705l-2 0-1 1-6 0M505 706l5 0 2 1M548 706l0 5M842 714l-2 3M588 715l0 6-2 2M839 719l-2 1M586 724l1 1 0 4 1 2 2 1 2 3 4 0 4 3M653 726l2 5 3 2 2 3 6 0M629 727l2 2 0 2 5 4 2 4M760 727l0 2M760 730l2 2M722 731l6 2 5 4M762 733l0 9M776 742l-5 2-1-1-7 0M777 742l1 1 3 0M761 743l-3 3 0 5M696 744l0 5M676 746l2-2 6 0 6 7M715 746l0 2 2 2M729 749l-11 0-1 1M731 749l1 1 7 0M695 750l-4 0-1 1M705 750l2-1 5 0 3 3M717 750l-1 2M730 750l0 6M690 751l-1 1 0 2M741 752l4 2M740 753l-1 1 0 4M715 754l-7 6-1 4M716 754l2 2M688 755l-2 1M689 755l2 3" stroke-opacity="0.5"/>
<path d="M455 548l-1 2 0 5 1 1 5 0M531 558l4 3 0 3 1 1 0 4-1 1 0 2-2 2M543 558l2-1 2 2 1 4M442 559l-6 3-3 0M427 562l-1 6-8 9-1-1-3 0-5-5M522 563l1 9 2 2 0 5-1 1 4 5M545 564l2 0M623 564l-5 6-3 1M529 568l0 2 4 4M493 570l2 0 3 3M662 571l-2-2-8 0-2 3-2 1M614 572l-1 4M511 576l0 4M458 578l1-1 4 1M643 578l0 2 2 2M600 579l-4 3M731 580l-1 1 0 3-2 2M732 580l5 2 4 4M496 581l-1 4M514 582l2 2 2 0 2 2 3 0 2 2M645 583l-5 2-1 2M568 585l1 0-1 1M451 586l0 2 2 2M425 588l-1 9-5 4 1 1 1 11M525 589l-2 4-8 3-8 8 0 4-4 4-2 6M581 590l1 1 0 2 2 2M563 592l4 4 5 1M766 592l-4 2M449 594l1 1 0 2M761 594l-1 1 1 4M559 596l3 5 0 6-2 2M837 596l4 4 1 6 4 5M390 600l-3 1M762 601l3 3 6-1 2-2M461 602l3 2M555 602l-1 3M659 602l2 2 5 0 1-1 5-1M409 603l1-1 0 1M409 603l1 1 0-1M470 606l-2 1M542 606l11 0M468 607l-1 3M601 607l0 2 6 7M858 607l-1 1 0 5-1 1M593 608l-2 2M691 610l2 2M849 610l-2 1M773 611l-9 8-2 5 5 6 4 1M382 612l1 1 0 4 1 2 6 8M392 612l1 9M693 612l-1 1-4 0-1 1M706 613l4 6 1-1 5 0 1-1 4 1M591 614l-3 3 0 2-2 4M528 615l2 0M460 616l-5 0-6 5M699 616l0 2M845 617l3 3 3 0 1 1 3 0 1-1M481 618l2 2 0 5 5 4M749 618l0 2 1 1M607 619l2 5M408 620l3 2M580 620l-2 2 0 2M406 621l-7 7 0 2-8 6M459 622l-2 2-5 1M527 622l5 0M594 626l-2 3M772 627l0 3M434 631l3 4M772 632l0 3 1 1M408 633l2 1 0 2 4 5 5 1M512 635l-5 1M583 636l6 6M773 636l-1 1 0 4-1 1M776 636l1 1 5 0 2 1M497 638l0 2 2 2 0 2 1 1M718 638l4 4 1 0M785 638l4 5 0 3 2 2M402 639l3 2 2 8M595 639l3 3 3 0 2 2M658 643l-3 2-8 0-2 1M771 643l3 4M737 644l-1 4M774 647l1 0-1 1M512 648l-2 3 0 6-5 5 0 1M662 648l-1 0-4 4-4 0-4 2-5-1-4-3-15 0-7 7M721 648l2 0 3 3M729 648l-1 2M735 649l-1 1-5 1M448 651l5 5M484 651l5 7 4 2M595 651l4 0 1 1 3 0 5 2M612 652l-3 2M595 654l4 4 0 2M776 654l-2 2-1 3M609 655l2 5M700 656l0 4M629 658l2 0 1 1M633 660l0 8 1 1M948 661l3 4 4 3M461 662l7 7M473 664l4 4M518 664l-5 2-6 4M617 664l4 1M625 664l-2 1M729 664l-3 3 1 9M885 664l1 1 0 3-3 3M923 666l0 3M776 670l-1 1-2 0M701 672l4 0M772 672l-1 4M464 673l-3-3-7-1-4 2-2 3-3 1M930 673l1 9M516 674l-2 1M939 674l0 2M459 676l4 0M489 676l-5 4M565 676l0 2 2 4M739 676l-3 2-3 0M850 676l-1 2 0 7-1 1 0 3 1 1 0 2 2 2M835 678l-1 11M828 679l-1 1 0 4-3 3M559 680l0 4M843 680l-2 3 0 2-5 5-1 0M822 683l0 3M461 684l-1-1-7 0-1-1-6 4-4 1-5 5-4 6M735 684l5 1M461 685l-1 1 0 4M558 685l-5 1M667 688l-4 0-2 1M755 688l3 0M881 688l2 0 2 2M754 689l2 5M590 691l4 1M872 691l4 6 0 2-2 4M596 693l4 4M672 693l2 0M863 693l4 5 0 6 2 2M675 694l2 4M700 694l3 0 4 4M795 694l2 0 1 1 8 0M686 697l-1 1 0 2M399 698l4-2 3 0 2-3 3-2 4 2 2 5M659 698l-5 4 0 2 1 1M751 698l-4-1-2 2M846 699l5 5M588 700l8 0 1 1M611 700l0 2 3 3M815 700l-5 6-3 0-2-2-2 0M597 701l-2 2M581 706l0 2 2 3M722 711l-3-2-5 2-3 3-4 2-2-2 0-2M846 711l5 1 1 1M742 712l-3 3M736 715l-3 3 0 4-1 1M617 718l0 3M679 720l-1 3-2 1" stroke-opacity="0.6"/>
<path d="M442 552l1 1 0 5M461 557l2 5 2 1 5 0M443 559l3 2 0 2 1 1 0 6M605 562l0 1 4 4 0 2 4 2M588 563l2 0 2 2M471 564l1 3 3 3M548 565l2 2M435 568l11 3M461 570l3 0 2 2 5 2 4 0M593 572l4 2 4 4M662 572l-2 4-6 5-8 2M533 574l0 10M747 574l2 2 0 4 3 6 0 2 3 2 4 0 1 1M432 575l0 2 6 4 0 2 2 4 0 3M488 575l0 2 2 2 5 0 1 1M457 579l1 1 0 5 3 3M697 580l-3 4 0 5M386 581l-1 1 0 7-1 1M423 582l-2 2-2 0-3 2-3 3-5 0-2 1M477 585l9 6 0 2 3 3 0 2M568 586l2 3 2 0 1 1 0 6M762 587l-1 3M471 588l4 4M546 588l4 4 5 0M460 589l-1 1-6 0M470 589l0 4M602 589l-1 1-5 1-3 3-2 0-1 1-5 0M384 590l-2 2 0 3 3 3 0 2 1 1M384 590l2 2 5 0 2 1M819 593l5 5 1 0M637 594l5 3 0 2 2 2 0 2 3 5-1 1 0 5 2 5 0 6-4 4M818 594l0 3-1 1 1 10-1 2M697 599l-2 2-2-1-5 0-1 1M714 599l1 5M498 600l-1 6-1 2-2 1M476 601l2 0 3 3M773 601l0-1 1 1M386 602l-4 8M431 602l0 10-1 1M409 603l-2 0-4 4M536 603l-5 5-4 6M673 603l1 5M517 604l-1 3 3 3 0 2 2 2M833 604l-1 2M482 605l-1 2-6 5M635 605l0 2-1 1 1 4M714 605l-3 1-1 1 0 2-4 3M716 605l2 1 2 0 1-1M826 605l5 1M554 606l6 3M577 606l4 4 0 1M657 608l-1 7 7 3M681 608l0 2 2 3 1 1 2 0M591 610l0 2 1 1M729 610l0 2 5 6M383 611l8 0M627 612l7 1M521 614l-2 2-7 0-6 9-7 3-5 0M592 614l1 1 2 0 2 4 3 0 1 1 3 0 1-1M742 614l-7 4M407 615l0 4M438 615l0 5M820 616l8 1 4 4M664 619l0 4-2 4 0 5 6 5M778 619l3 4 0 3M523 622l-9 8-1 4M750 622l0 2 5 6 1 5 3 3 1 4M420 625l2 1 1 4 3 3M577 625l-3 0-4 5-2 0-3 3M451 626l-1 1-1 9M744 627l0 4 2 4 0 7 1 1 0 2 1 1 8 0 3-3M712 628l0 7 3 3M488 629l-4 5M604 629l-2 3M492 630l0 5M591 630l-3 1M592 631l0 2 2 2M671 632l-3 5M601 633l-1 1-4 0-1 1M565 634l6 6M513 636l0 8M773 636l2 0M426 637l5 6 0 6 2 3M449 637l1 1 0 3 4 4M675 641l2 2 0 2 1 1-1 5M579 642l4 4M420 643l0 6 1 2-3 3M443 644l4 4M488 644l-4 2 0 4M530 645l2 0 3 3M456 646l3 3 0 5M500 646l0 2-1 1 0 11M774 648l0 3 2 2M948 648l5 6M382 649l0-1 4-4 6 0 3 4 0 2M583 650l1 4M394 651l-3 3M483 651l-1 1-4 0-2 2M784 651l-7 2M537 652l-9 8 0 2-2 3M709 652l-3 3-5 0M593 654l-1 1 0 2-5 5 0 2-4 4-5 1M753 654l5 1 3 3M942 654l5 4M414 655l-4 4-1 4M741 656l0 2-1 1-4 1-4 4M961 656l-1 6 1 1 0 3 3 3M475 657l4 4 3 0 1 1M421 660l-2 2 0 5M422 660l3 3 0 3M517 660l1 1 0 2M930 662l0 3 4 4M396 663l-6-1-5 2M642 663l-4 4-4 2M762 664l2 2 2 0 6 5M893 664l4 4M471 665l-3 4M732 665l2 2 0 3 2 1 3 4M973 665l-4 0-4 4M521 666l-3 3 0 3-1 1M547 666l-4 4-1 0M622 666l0 7 1 1M743 666l6 0 3 3M784 666l-4 0-3 3M601 668l2 0 4 3 3 0 4 6 4 0 1 1M703 668l3 3M634 669l-2 3-2 0-6 3M923 670l-1 1-4 0-2 2M711 671l4 4 2 0 2 2 0 3M657 672l3 3 1 3M899 672l3 4 1 7M468 673l3 2 3 0 4 2M802 673l-1 5 3 4 3 12M940 673l6 0 2 3M405 676l-2 2-2 5-4 4-1 4-3 5M742 677l-1 1 0 6M479 678l1 2 3 0M506 678l-8-3-2 4 0 5-2 5M868 678l-1 1 0 7M869 678l2 2M484 681l0 6 2 2M814 681l0 2 4 4 3 0M512 683l2 0 4 4M754 683l-2 3M856 683l2 0 5 5M465 684l4 2 2 4 0 6 1 1M643 684l4 5M724 685l2 0 1 1 0 3 4 3 0 6 2 2M741 685l2 3M683 686l-8 7M518 687l-5 5-1 0M686 687l0 9M751 687l-1 1-6 0M867 687l3 3M504 688l-6 0-2 2M743 689l0 9M486 690l-3 4 0 2M607 690l4 4M521 694l-3 3-3 1M633 694l0 8M807 695l2 2 4 1 2 2M661 698l4 3 4 2 2 0 2 2M707 699l-1 3-2 2-2 0-1 1-4-1M838 699l-2 2-1 7M617 700l3 3M723 700l6 0 2 2M841 700l3 3 0 6 1 1M569 707l1 1 0 2 2 2 0 4M583 711l-4 2M588 715l1-1 5 0 8 3M739 716l2 5M675 725l-1 5-1 1M706 729l-1 1 0 3 1 1M691 731l-2 2-7 0-1 1" stroke-opacity="0.7"/>
<path d="M555 554l1 3 4 4M575 558l-1 2M637 559l-1 8-4 5-1 3-3 3-1 5-3 3 0 6 1 2-2 4 0 3-3 5-5 2M670 559l-1 1 0 6-1 2-5 4M488 560l-11 10M394 561l0 4-2 2-3 1-1 1 0 2-2 2M573 561l-2 0-1 1-9 0M604 561l-9 2-2 2M560 562l-4 4-5 0-1 1M574 562l2 8 4 4 3 1M411 565l-2 2 0 3M592 566l0 5M550 567l-1 1 0 2-2 2M710 567l-2 1-8 0M699 569l0 10M501 570l-2 3M408 571l-2 2-1 5-2 3 0 7 2 2M447 571l6 6 2 0 1 1M476 571l0 2M591 572l-2 0-5 3M685 572l6 6 2 0 4 2M382 573l3 0M547 573l0 7 2 2M386 574l0 5M476 574l1 1 0 9M499 574l0 4M564 575l-5 2-1 2-4 3-5 0M395 576l-3 3-5 1M584 576l3 7 2 2M725 576l-5 5 0 5 1 1 1 6 3 3 4 0 1 1 5 1 3 3 10 1 6 4M499 579l-2 1M500 579l3 2 5 0 1 1M700 580l1 1 3 0 2 2 3 1 3 4-1 3M509 582l-3 8-5 4 0 2-3 3M549 582l-3 6M476 585l-1 1-2 0-2 2M528 585l4 0M528 585l-2 3M533 585l1 1 3 0 4 4M463 588l6 0M546 588l-3 2-2 0M670 589l2-3 6 0 8 4 7 0M435 590l4 1M453 590l-4 3M462 590l0 8M541 590l-2 3 0 6-1 2M655 590l7 0 1 1 6-1M405 591l-2 3 0 5-2 4 0 3 1 1M670 591l2 2 0 6 1 2M694 591l1 1 0 2 3 3M812 591l3 2 2 0M440 592l1 1 7 0M702 595l-4 2M584 596l0 3-2 2M573 598l4 4M488 599l-6 5M490 599l7 0M698 599l2 3 0 9 1 1M460 602l-2 2M537 602l-1-1-5 0-1 1-5 1M578 602l3 0M538 603l3 3M577 603l-1 2M582 603l9 7M457 605l-2 1M611 605l2 3M575 606l-2 2 0 2-3 3-2 0-1 1-5-1-2-4M541 607l2 4 0 3 3 3 1 5 3 4M832 607l1 2 0 5 1 1 0 2 2 2M401 608l-8 3M807 608l5 3 4 0M403 609l0 3 3 2M614 609l-2 5-3 2-2 0M447 610l-1 1 0 9M817 611l2 2 0 2M665 612l0 2 1 1 0 2-1 1M693 612l4 0 1 1M701 612l4 0M846 612l0 4-1 1M408 614l9 0 1 1 2-1M422 614l7 0M521 614l2 0 1 1M635 614l0 8 1 2-2 3M430 615l1 3 1 1 2 0 3 3M687 615l0 2 2 4 0 3 3 3 0 2 2 2 0 2 2 4M467 616l0 2 4 6 0 8 1 1M524 616l0 5M607 616l-1 2M845 617l-2 0-2 2M491 618l2 9M734 619l-2 4 0 4-7 7-3 0-4 4M836 619l4 0M836 619l-2 2M621 620l0 4 7 7M627 620l7 7M439 621l6 0M437 622l-2 2 0 4-1 2M449 622l2 2M526 623l1 1 0 6 1 1 0 2M679 626l1 1 0 8 2 2M550 627l-3 3-1 4M551 627l1 1 4 0 4 5M634 627l0 2M611 628l7 1 4 4M488 629l3 0M417 630l2 2 2 0 4 4M633 630l-4 0-1 1M635 630l8 0M644 630l5 2 7 7 0 2 2 2M433 631l-4 0-2 2M628 631l-3 2-3 0M561 633l3 0M602 633l4 2 3 3 2 0 4 2 2-1 5-6M473 634l11 0M528 634l-4 2M529 634l4 1 3 4 0 8-1 1M560 634l-1 1 0 8 1 1 1 5 3 2M472 635l-4 4M594 636l0 2M424 637l-4 5M668 637l0 2 1 1M682 637l8 0 1 1M682 637l-2 2-4 0-1 1M691 638l4 0M691 638l-2 5-4 4 0 1M697 638l1 0 6 7 4 0 1 1M715 638l3 0M715 638l-2 5-3 3M468 639l-5 0-7 6M468 639l5 6 0 7 2 2M593 639l-3 3M669 640l5 0M669 640l-1 2-5 4M589 643l0 2M658 643l2 0 3 3M763 643l7 0M762 644l0 11 1 1-1 2M454 645l-2 2-3 0-1 1M501 645l11 0M584 646l4 0M589 646l5 5M569 647l-5 4M710 647l0 4M514 648l5 1 2 2M535 648l0 2 2 2M663 649l-2 7-2 3M406 650l-5 0-3 2M408 650l6 5M958 650l1 0-1 1M446 651l-2 3-2 8-8 9 0 5 2 4 0 3M564 651l1 11M726 651l-1 1 0 4-2 2M958 651l0 2M537 652l2 0M541 652l5 0 3 2M710 652l3 4 0 2 1 1M397 653l0 9M540 653l1 2 0 5 6 6M953 654l4 0M953 654l-5 4M958 654l2 1M971 654l-9 1M414 655l3 0M692 655l-6 6-3 6M418 656l3 3M471 656l2 1M473 658l-1 1 0 4M715 659l7 0M762 659l0 4M714 660l-1 2 0 5-2 4M723 660l6 4M750 661l0 2 5 5M946 661l-3 3-3 0-3 4M901 662l0 3-3 3M912 662l0 8M576 663l0 2 2 4M397 664l1 1 0 3M519 664l2 2M729 664l2 0M761 665l-4 4M876 665l-2 4 0 2M521 666l4 0M526 666l2 3 2 1M547 666l2 0 1 1M550 667l0 4-1 1-1 5-8 9 0 5-1 1 0 2M550 667l2-1 1 1 2 0 2 2 4 1M683 667l-2 2 0 2-1 1M683 667l2 2 5 0 4-2M397 669l-4 4-8 3M398 669l2 1 5 6M468 669l0 3M578 669l-3 2 0 7-1 2-3 2-4 0M755 669l-2 1M757 669l4 4 0 2 2 2-1 3M934 669l2 0M934 669l-4 3M752 670l-5 5-5 2M924 670l3 0 2 2M937 670l2 2M711 671l-1 1-2 0M900 671l11 0M657 672l-6 0-2 3 0 4-1 1M657 672l2-2 7 0 1-1 10 1 2 2M679 672l-8 9-6 1M680 672l4 4 0 9M873 672l-1 1-2 0-2 2M875 672l7 0M897 672l-2 2-3 0-3 3M912 672l2 1M382 673l2 3M465 673l2 0M707 673l0 8M862 673l5 2M883 673l0 3 1 1 4 0M915 674l0 7 1 1M517 675l1 1 0 3 4 4 0 3-1 1M623 675l-3 3M405 676l6 1 2 2 2 0 4 2 7 7 0 3-2 5-3 2-3 0M740 676l2 1M384 677l0 8 3 3 0 4M464 677l0 6M889 678l0 7M620 679l1 2 0 9 1 1 2 0 2 2M647 681l-4 3M648 681l3 3 3 0 5 5M707 681l-1 1-6 0-3 3-10 1M707 681l5 5 2 5 0 3-6 4M567 682l-2 2-5 1M643 684l-5 0-3 3 0 4-1 1M890 686l6 0M518 687l3 0M521 687l1 1 0 5M866 687l-2 0-1 1M889 687l-4 3M824 688l3 4M863 688l0 4M606 689l-8-9-4 0-1 1-8 2-4 4-1 4-3 3-4 1-4 3 0 8M487 690l6 0M660 690l0 7M496 691l0 8 1 1M606 691l-1 1 0 2-4 3M827 692l6 0M827 692l-6 7M626 693l6 0M626 693l-2 2 0 7-3 2M634 693l8 6 0 2 1 1 0 11M834 693l1 1 0 3 3 2M862 693l-5 0-1 1M522 694l2 4M851 694l4 0M851 694l-5 4M856 695l1 1 0 2M528 696l-3 2M552 697l-2 7M600 698l0 2-1 1-2 0M845 698l-3 0-1 1M742 699l-8 0-1 1M838 699l2 0M733 700l-1 2M745 700l0 3 6 4 1 2 0 5 2 2M815 700l5 0M821 701l2 4 2 10-2 2-2 0-1 1M732 703l0 4M620 704l-3 2-2 0M551 705l1 1 4 0 1 1M614 706l-2 3-9 8M559 707l9 0M731 708l-2 2-4 0-2 1M732 708l3 3 1 3M583 711l1 1 2 0 2 3M722 712l0 8-2 5M642 714l-6 0-1 1-5 1-2 2 0 2M643 714l3 4 5 0M697 714l-4 3M689 716l2 0 1 1M652 718l2-2 13 0 2 2 1 3 2 2 2 0 1 1M692 718l0 8M813 718l4 0M652 719l0 6M627 721l-2 1-7 0M628 722l0 4M719 726l-5 2-5 0-1 1-2 0M720 726l1 1 0 3M693 727l6 0 1 1 5 0 1 1M692 728l0 2M692 731l2 3 0 2 1 1 0 5 1 1" stroke-opacity="0.8"/>
</g>
<g filter="url(#bF)">
<g fill="#848484" opacity="0.9"><polygon points="738,705 755,690 775,672 800,655 818,640 824,615 830,640 815,665 795,685 770,705 748,715"/></g>
<g fill="#5c5c5c" opacity="0.85"><ellipse cx="875" cy="825" rx="22" ry="38" transform="rotate(8 875 825)"/></g>
</g>
<g fill="#fff"><polygon points="1151,459.6 1137.9,465.8 1123.2,476.8 1110.9,489 1101,498.9 1091.3,508.7 1082.7,521 1077.8,533.2 1075.4,545.5 1079,555.3 1076.6,572.4 1075.4,597 1076,636 1077.8,650 1080.3,657.4 1088.9,659.8 1103.6,664.7 1101,670.8 1109.7,677 1112.2,686.8 1108.5,699 1110.9,707.6 1120.8,712.5 1130.6,710 1137.9,714.3 1151,717.5 1149,723.6 1145.3,728.5 1144,735.8 1137.9,740.8 1125.7,742 1115.8,737 1108.5,734.6 1099.9,740.8 1096.2,750.6 1096.7,762.8 1102.4,772.6 1114.6,777.5 1122.7,787.4 1119.5,794.7 1119.5,804.5 1124.4,814.3 1129.3,818 1126.9,829 1120.8,836.4 1113.4,843.8 1101,851 1088.9,853.6 1082.7,860.9 1079,868 1152,868 1152,459.2"/><polygon points="1061.9,489 1068,490.3 1068,498.9 1072.9,502.5 1079,507.5 1088.9,510 1087.6,513.6 1077.8,514.8 1075.4,521 1069.2,519.7 1064.3,512.4 1053.3,508.7 1055.8,502.5 1060.7,498.9"/><polygon points="1066.8,551.6 1069.2,557.7 1077.8,557.7 1076.6,567.5 1071.7,573.7 1070.5,583.5 1060.7,584.7 1057,577.4 1051.6,574.4 1064.3,565.1"/></g>
</svg>
<span class="t" style="left:1162.5px;top:136.3px;font-size:15px;line-height:20px;color:#000;letter-spacing:-0.055px;">Layer Styling</span>
<svg style="left:1570px;top:139.9px" width="25.299999999999955" height="11" viewBox="0 0 25.299999999999955 11" fill="none" stroke="#6a6a6a" stroke-width="1"><rect x="0.500" y="0.500" width="10" height="10" rx="2"/><rect x="4.500" y="2.500" width="4" height="4" rx="0.800"/><rect x="2.500" y="4.500" width="4" height="4" rx="0.800" fill="#efefef"/><rect x="14.799999999999955" y="0.500" width="10" height="10" rx="2"/><path d="M17.299999999999955 3l5 5M22.299999999999955 3l-5 5" stroke-width="2.2" stroke="#5e5e5e"/></svg>
<div class="combo" style="left:1161px;top:159px;width:433px;height:23px;"></div>
<svg style="left:1578px;top:167.5px" width="10" height="7" viewBox="0 0 10 7"><path d="M1.200 1.200h7.600l-3.800 4.300z" fill="#4a4a4a"/></svg>
<span class="t" style="left:1186.6px;top:161.0px;font-size:15px;line-height:20px;color:#000;letter-spacing:0.028px;">srtm_37_04</span>
<svg style="left:1169px;top:164.3px" width="12.600000000000001" height="12.600000000000001" viewBox="0 0 12.600000000000001 12.600000000000001"><rect x="0.0" y="0.0" width="4.2" height="4.2" fill="#2c4460"/><rect x="8.4" y="0.0" width="4.2" height="4.2" fill="#2c4460"/><rect x="4.2" y="4.2" width="4.2" height="4.2" fill="#a8c4e4"/><rect x="0.0" y="8.4" width="4.2" height="4.2" fill="#2c4460"/><rect x="8.4" y="8.4" width="4.2" height="4.2" fill="#a8c4e4"/></svg>
<div style="left:1161px;top:221px;width:38px;height:644px;background:#5c5c5c;"></div>
<svg style="left:1161px;top:186px" width="38" height="170" viewBox="0 0 38 170"><g transform="translate(3.5 6.7)"><path d="M1.500 13.500l3-3.500 9 4-3 5z" fill="#d05868"/><path d="M3 9.500l3-4 9.500 3.500-3 5z" fill="#5b8cc4"/><path d="M5 5.500l3-3.500 9 3-2.500 4z" fill="#c4d870"/><path d="M9 11.500l5-3.500 4 5.500-6 3z" fill="#a8a480" stroke="#8a8660" stroke-width="0.700"/><path d="M16 9.500l6-6.500" stroke="#b09048" stroke-width="2.300" stroke-linecap="round"/></g><g transform="translate(3.5 40.2)"><defs><linearGradient id="sg" x1="0" y1="0" x2="1" y2="1"><stop offset="0" stop-color="#4a6898"/><stop offset="1" stop-color="#e8eef8"/></linearGradient></defs><rect x="1" y="1.500" width="22" height="15" fill="url(#sg)" stroke="#e0e0e0" stroke-width="1.200"/><path d="M5 6c2-1 3 0 3 1.500s2 1 2.500 0 2-2 4-1.500 3 1 4 0.500v3c-2 1-3 0-4 1s-2 0-3-0.500-2 1-3.500 0.500-2-2-3-4.500z" fill="#8ca8d0" opacity="0.800"/><path d="M1 19.500h22" stroke="#f0f0f0" stroke-width="2"/><path d="M2.500 19.500h2" stroke="#2c4c80" stroke-width="1.400"/><path d="M6 19.500h1.500M9 19.500h1.500M12 19.500h1.500M15 19.500h1.500M18 19.500h1.500" stroke="#6a6a6a" stroke-width="0.700"/></g><g transform="translate(3.5 69.9)"><rect x="1" y="4" width="22" height="15" fill="#f0f0f0" stroke="#c8c8c8" stroke-width="1"/><path d="M3.500 7v9.500h17" stroke="#8a8a8a" stroke-width="0.800" fill="none"/><path d="M5 13l4-3.500 4 3 3.500-2.500 3 3" stroke="#4a6a9a" stroke-width="1" fill="none"/></g><g transform="translate(3.5 102.6)"><path d="M5 16v-8M12 8v10M19 16v-8M5 12h14" stroke="#e0a030" stroke-width="2.600" fill="none" stroke-linecap="round"/><rect x="7.500" y="1" width="9.500" height="6.500" fill="#e85860" stroke="#c83840" stroke-width="0.600"/><rect x="0.500" y="16" width="10" height="7.500" fill="#f8e050" stroke="#d0b020" stroke-width="0.600"/><rect x="13.500" y="16" width="10" height="7.500" fill="#80b0e8" stroke="#5088c8" stroke-width="0.600"/></g><g transform="translate(3.5 134.7)"><path d="M13 6.500l-5.500-5v3c-4.500 0-6.500 2.500-6.500 6h3c0-2 1-3 3.500-3v3.500z" fill="#58b070" stroke="#3a9050" stroke-width="0.500"/><path d="M9 15.500l5.500-5v3c4.500 0 7 1.500 7 5 0 2.500-2 4.500-5 4.500v-2.700c1.300 0 2.200-0.700 2.200-1.800 0-1.500-1.500-2-4.200-2v3.500z" fill="#f08030" stroke="#d06018" stroke-width="0.500"/></g></svg>
<div style="left:1580.6px;top:189.5px;width:13.5px;height:644px;background:#e2e2e2;border-left:1px solid #c0c0c0;"></div>
<div style="left:1581.6px;top:189.5px;width:12.5px;height:13px;background:#f4f4f4;border-bottom:1px solid #c8c8c8;"></div>
<div style="left:1581.6px;top:202.5px;width:12.5px;height:539.5px;background:linear-gradient(90deg,#ffffff,#ededed);border-bottom:1px solid #b8b8b8;"></div>
<div style="left:1581.6px;top:820.3px;width:12.5px;height:13.2px;background:#f4f4f4;border-top:1px solid #c8c8c8;"></div>
<svg style="left:1581.600px;top:189.500px" width="12.500" height="644" viewBox="0 0 12.500 644"><path d="M2.200 8l3.800-4 3.800 4z M2.200 635l3.800 4 3.800-4z" fill="#4a4a4a"/></svg>
<div class="combo" style="left:1202.5px;top:189.5px;width:377px;height:24px;"></div>
<svg style="left:1563.5px;top:198.5px" width="10" height="7" viewBox="0 0 10 7"><path d="M1.200 1.200h7.600l-3.800 4.300z" fill="#4a4a4a"/></svg>
<div style="left:1210px;top:195.8px;width:12.2px;height:11.2px;background:linear-gradient(90deg,#000,#fff);border:1px solid #555;"></div>
<span class="t" style="left:1227.5px;top:192.0px;font-size:15px;line-height:20px;color:#000;letter-spacing:-0.028px;">Singleband gray</span>
<span class="t" style="left:1202.5px;top:222.8px;font-size:15px;line-height:20px;color:#000;letter-spacing:-0.227px;">Gray band</span>
<div class="combo" style="left:1306.5px;top:220.6px;width:273px;height:24px;"></div>
<svg style="left:1563.5px;top:229.6px" width="10" height="7" viewBox="0 0 10 7"><path d="M1.200 1.200h7.600l-3.800 4.300z" fill="#4a4a4a"/></svg>
<span class="t" style="left:1311.5px;top:222.9px;font-size:15px;line-height:20px;color:#000;letter-spacing:-0.325px;">Band 1 (Gray)</span>
<span class="t" style="left:1202.5px;top:253.9px;font-size:15px;line-height:20px;color:#000;letter-spacing:0.270px;">Color gradient</span>
<div class="combo" style="left:1306.5px;top:251.7px;width:273px;height:23.7px;"></div>
<svg style="left:1563.5px;top:260.6px" width="10" height="7" viewBox="0 0 10 7"><path d="M1.200 1.200h7.600l-3.800 4.300z" fill="#4a4a4a"/></svg>
<span class="t" style="left:1311.5px;top:253.9px;font-size:15px;line-height:20px;color:#000;letter-spacing:0.152px;">Black to White</span>
<span class="t" style="left:1306.6px;top:284.8px;font-size:15px;line-height:20px;color:#000;letter-spacing:0.276px;">Min</span>
<div class="edit" style="left:1338.2px;top:282.6px;width:99.5px;height:24px;"></div>
<span class="t" style="left:1342.5px;top:285.0px;font-size:15px;line-height:20px;color:#000;letter-spacing:-0.396px;">-12</span>
<span class="t" style="left:1444.9px;top:284.8px;font-size:15px;line-height:20px;color:#000;letter-spacing:-0.115px;">Max</span>
<div class="edit" style="left:1479.5px;top:282.6px;width:100px;height:24px;"></div>
<span class="t" style="left:1483px;top:285.0px;font-size:15px;line-height:20px;color:#000;letter-spacing:-0.094px;">3186</span>
<span class="t" style="left:1202.5px;top:312.2px;font-size:15px;line-height:20px;color:#000;letter-spacing:0.162px;">Contrast</span>
<span class="t" style="left:1202.5px;top:328.8px;font-size:15px;line-height:20px;color:#000;letter-spacing:0.190px;">enhancement</span>
<div class="combo" style="left:1306.5px;top:317.5px;width:273px;height:24px;"></div>
<svg style="left:1563.5px;top:326.5px" width="10" height="7" viewBox="0 0 10 7"><path d="M1.200 1.200h7.600l-3.800 4.300z" fill="#4a4a4a"/></svg>
<span class="t" style="left:1311.5px;top:319.8px;font-size:15px;line-height:20px;color:#000;letter-spacing:0.243px;">Stretch to MinMax</span>
<svg style="left:1206.500px;top:357.500px" width="9" height="12" viewBox="0 0 9 12"><path d="M1 1l7 5-7 5z" fill="#3a3a3a"/></svg>
<span class="t" style="left:1224.7px;top:353.3px;font-size:15px;line-height:20px;color:#000;letter-spacing:0.158px;font-weight:bold;">Min / Max Value Settings</span>
<div class="btn" style="left:1447.2px;top:382.3px;width:132.3px;height:24.3px;"></div>
<span class="t" style="left:1451.4px;top:384.7px;font-size:15px;line-height:20px;color:#000;letter-spacing:0.170px;">Legend Settings...</span>
<span class="t" style="left:1204.8px;top:414.2px;font-size:15px;line-height:20px;color:#000;letter-spacing:-0.158px;font-weight:bold;">Layer Rendering</span>
<div class="grp" style="left:1203.5px;top:435px;width:376.5px;height:325.5px;"></div>
<span class="t" style="left:1214.4px;top:447.9px;font-size:15px;line-height:20px;color:#000;letter-spacing:0.148px;">Blending mode</span>
<div class="combo" style="left:1323.2px;top:445.2px;width:244.5px;height:24.4px;"></div>
<svg style="left:1551.7px;top:454.4px" width="10" height="7" viewBox="0 0 10 7"><path d="M1.200 1.200h7.600l-3.800 4.300z" fill="#4a4a4a"/></svg>
<span class="t" style="left:1328.2px;top:447.7px;font-size:15px;line-height:20px;color:#000;letter-spacing:0.276px;">Normal</span>
<span class="t" style="left:1214.4px;top:478.8px;font-size:15px;line-height:20px;color:#000;letter-spacing:0.113px;">Brightness</span>
<div style="left:1324px;top:486.3px;width:142.5999999999999px;height:5px;background:linear-gradient(#c4c4c4,#dadada);border:1px solid #b0b0b0;border-radius:2.5px;"></div>
<div style="left:1324px;top:486.3px;width:71.29999999999995px;height:5px;background:linear-gradient(#3a9ae8,#4ca8f0);border:1px solid #2a80c8;border-radius:2.5px;"></div>
<div style="left:1389.1px;top:482.40000000000003px;width:12.4px;height:12.8px;background:linear-gradient(#ffffff,#ececec);border:1px solid #a4a4a4;border-radius:3px;"></div>
<div style="left:1474.1px;top:477.0px;width:93.6px;height:23.5px;background:#fff;border:1px solid #b4b4b4;border-radius:3px;"></div>
<div style="left:1552.6999999999998px;top:478.0px;width:14px;height:21.5px;background:linear-gradient(#fbfbfb,#efefef);border-left:1px solid #c4c4c4;border-radius:0 2px 2px 0;"></div>
<svg style="left:1553.6999999999998px;top:478.0px" width="13" height="21.5" viewBox="0 0 13 21.5"><path d="M3.200 9.2l3.300-3.600 3.300 3.600z M3.200 12.6l3.300 3.600 3.300-3.600z" fill="#4a4a4a"/></svg>
<span class="t" style="left:1479.6px;top:479.1px;font-size:15px;line-height:20px;color:#000;">0</span>
<span class="t" style="left:1214.4px;top:509.8px;font-size:15px;line-height:20px;color:#000;letter-spacing:0.161px;">Saturation</span>
<div style="left:1324px;top:517.25px;width:142.5999999999999px;height:5px;background:linear-gradient(#c4c4c4,#dadada);border:1px solid #b0b0b0;border-radius:2.5px;"></div>
<div style="left:1324px;top:517.25px;width:71.29999999999995px;height:5px;background:linear-gradient(#3a9ae8,#4ca8f0);border:1px solid #2a80c8;border-radius:2.5px;"></div>
<div style="left:1389.1px;top:513.35px;width:12.4px;height:12.8px;background:linear-gradient(#ffffff,#ececec);border:1px solid #a4a4a4;border-radius:3px;"></div>
<div style="left:1474.1px;top:507.95px;width:93.6px;height:23.5px;background:#fff;border:1px solid #b4b4b4;border-radius:3px;"></div>
<div style="left:1552.6999999999998px;top:508.95px;width:14px;height:21.5px;background:linear-gradient(#fbfbfb,#efefef);border-left:1px solid #c4c4c4;border-radius:0 2px 2px 0;"></div>
<svg style="left:1553.6999999999998px;top:508.95px" width="13" height="21.5" viewBox="0 0 13 21.5"><path d="M3.200 9.2l3.300-3.600 3.300 3.600z M3.200 12.6l3.300 3.600 3.300-3.600z" fill="#4a4a4a"/></svg>
<span class="t" style="left:1479.6px;top:510.0px;font-size:15px;line-height:20px;color:#000;">0</span>
<span class="t" style="left:1214.4px;top:540.7px;font-size:15px;line-height:20px;color:#000;letter-spacing:0.162px;">Contrast</span>
<div style="left:1324px;top:548.2px;width:142.5999999999999px;height:5px;background:linear-gradient(#c4c4c4,#dadada);border:1px solid #b0b0b0;border-radius:2.5px;"></div>
<div style="left:1324px;top:548.2px;width:71.29999999999995px;height:5px;background:linear-gradient(#3a9ae8,#4ca8f0);border:1px solid #2a80c8;border-radius:2.5px;"></div>
<div style="left:1389.1px;top:544.3000000000001px;width:12.4px;height:12.8px;background:linear-gradient(#ffffff,#ececec);border:1px solid #a4a4a4;border-radius:3px;"></div>
<div style="left:1474.1px;top:538.9000000000001px;width:93.6px;height:23.5px;background:#fff;border:1px solid #b4b4b4;border-radius:3px;"></div>
<div style="left:1552.6999999999998px;top:539.9000000000001px;width:14px;height:21.5px;background:linear-gradient(#fbfbfb,#efefef);border-left:1px solid #c4c4c4;border-radius:0 2px 2px 0;"></div>
<svg style="left:1553.6999999999998px;top:539.9000000000001px" width="13" height="21.5" viewBox="0 0 13 21.5"><path d="M3.200 9.2l3.300-3.600 3.300 3.600z M3.200 12.6l3.300 3.600 3.300-3.600z" fill="#4a4a4a"/></svg>
<span class="t" style="left:1479.6px;top:541.0px;font-size:15px;line-height:20px;color:#000;">0</span>
<span class="t" style="left:1214.4px;top:571.6px;font-size:15px;line-height:20px;color:#000;letter-spacing:-0.469px;">Gamma</span>
<div style="left:1324px;top:579.15px;width:142.5999999999999px;height:5px;background:linear-gradient(#c4c4c4,#dadada);border:1px solid #b0b0b0;border-radius:2.5px;"></div>
<div style="left:1324px;top:579.15px;width:18px;height:5px;background:linear-gradient(#3a9ae8,#4ca8f0);border:1px solid #2a80c8;border-radius:2.5px;"></div>
<div style="left:1335.8px;top:575.25px;width:12.4px;height:12.8px;background:linear-gradient(#ffffff,#ececec);border:1px solid #a4a4a4;border-radius:3px;"></div>
<div style="left:1474.1px;top:569.85px;width:93.6px;height:23.5px;background:#fff;border:1px solid #b4b4b4;border-radius:3px;"></div>
<div style="left:1552.6999999999998px;top:570.85px;width:14px;height:21.5px;background:linear-gradient(#fbfbfb,#efefef);border-left:1px solid #c4c4c4;border-radius:0 2px 2px 0;"></div>
<svg style="left:1553.6999999999998px;top:570.85px" width="13" height="21.5" viewBox="0 0 13 21.5"><path d="M3.200 9.2l3.300-3.600 3.300 3.600z M3.200 12.6l3.300 3.600 3.300-3.600z" fill="#4a4a4a"/></svg>
<span class="t" style="left:1479.6px;top:571.9px;font-size:15px;line-height:20px;color:#000;letter-spacing:0.074px;">1,00</span>
<div class="chk" style="left:1323.3px;top:605px;width:13.5px;height:13.5px;"></div>
<span class="t" style="left:1342.7px;top:601.8px;font-size:15px;line-height:20px;color:#000;letter-spacing:0.177px;">Invert colors</span>
<span class="t" style="left:1214.4px;top:631.6px;font-size:15px;line-height:20px;color:#000;letter-spacing:-0.392px;">Grayscale</span>
<div class="combo" style="left:1323.2px;top:629.5px;width:244.5px;height:24px;"></div>
<svg style="left:1551.7px;top:638.5px" width="10" height="7" viewBox="0 0 10 7"><path d="M1.200 1.200h7.600l-3.800 4.300z" fill="#4a4a4a"/></svg>
<span class="t" style="left:1328.2px;top:631.8px;font-size:15px;line-height:20px;color:#000;letter-spacing:0.755px;">Off</span>
<div class="chk" style="left:1323.3px;top:666.7px;width:13.5px;height:13.5px;"></div>
<span class="t" style="left:1342.7px;top:663.8px;font-size:15px;line-height:20px;color:#000;">Colorize</span>
<div style="left:1468.5px;top:660.5px;width:87px;height:27px;background:linear-gradient(#f8f8f8,#ededed);border:1px solid #d2d2d2;border-radius:3px;"></div>
<div style="left:1472.7px;top:666px;width:78.5px;height:16px;background:#ebe3e3;border-radius:3px;"></div>
<div style="left:1556.8px;top:660.5px;width:11px;height:27px;background:linear-gradient(#f8f8f8,#ededed);border:1px solid #d2d2d2;border-radius:3px;"></div>
<svg style="left:1558.300px;top:671.500px" width="8" height="6" viewBox="0 0 8 6"><path d="M0.800 1h6.400l-3.200 3.600z" fill="#c0c0c0"/></svg>
<span class="t" style="left:1214.6px;top:679.7px;font-size:15px;line-height:20px;color:#000;letter-spacing:-0.177px;">Hue</span>
<span class="t" style="left:1323.3px;top:696.9px;font-size:15px;line-height:20px;color:#000;letter-spacing:0.285px;">Strength</span>
<div style="left:1397.1px;top:704.2px;width:90px;height:5px;background:linear-gradient(#b0b0b0,#d0d0d0);border:1px solid #a4a4a4;border-radius:2.500px;"></div>
<div style="left:1475.1px;top:700.3px;width:12.6px;height:12.8px;background:linear-gradient(#ffffff,#ececec);border:1px solid #a4a4a4;border-radius:3px;"></div>
<div style="left:1495.5px;top:695.4px;width:72.2px;height:22.2px;background:#efefef;border:1px solid #cfcfcf;border-radius:3px;"></div>
<div style="left:1552.7px;top:696.4px;width:14px;height:20.2px;background:linear-gradient(#fbfbfb,#efefef);border-left:1px solid #d8d8d8;border-radius:0 2px 2px 0;"></div>
<svg style="left:1553.7px;top:696.4px" width="13" height="20.2" viewBox="0 0 13 20.2"><path d="M3.200 8.5l3.300-3.600 3.300 3.600z M3.200 11.9l3.300 3.600 3.300-3.600z" fill="#c4c4c4"/></svg>
<span class="t" style="left:1501.0px;top:696.8px;font-size:15px;line-height:20px;color:#b4b4b4;letter-spacing:-0.344px;">100%</span>
<div class="btn" style="left:1323.3px;top:725.3px;width:72.3px;height:23.3px;"></div>
<svg style="left:1328px;top:730.500px" width="12" height="13" viewBox="0 0 12 13"><path d="M0.500 4.500l4.500-4v2.500c4 0 6.500 2 6.500 5 0 2.500-2 4.500-4.500 4.500v-2.500c1.200 0 2-0.800 2-2 0-1.300-1.200-2-4-2v2.700z" fill="#e87a30"/></svg>
<span class="t" style="left:1344.6px;top:727.4px;font-size:15px;line-height:20px;color:#000;letter-spacing:-0.237px;">Reset</span>
<span class="t" style="left:1204.8px;top:768.0px;font-size:15px;line-height:20px;color:#000;letter-spacing:-0.303px;font-weight:bold;">Resampling</span>
<div class="grp" style="left:1203.5px;top:788.6px;width:376.5px;height:60px;border-bottom:none;border-radius:3px 3px 0 0;"></div>
<span class="t" style="left:1214px;top:801.9px;font-size:15px;line-height:20px;color:#000;letter-spacing:0.014px;">Zoomed in</span>
<div class="combo" style="left:1394.2px;top:799.1px;width:173.5px;height:24.6px;"></div>
<svg style="left:1551.7px;top:808.4px" width="10" height="7" viewBox="0 0 10 7"><path d="M1.200 1.200h7.600l-3.800 4.300z" fill="#4a4a4a"/></svg>
<span class="t" style="left:1399.2px;top:801.7px;font-size:15px;line-height:20px;color:#000;letter-spacing:0.164px;">Nearest Neighbour</span>
<div style="left:1394.2px;top:830.3px;width:173.5px;height:10px;background:#fbfbfb;border:1px solid #b4b4b4;border-bottom:none;border-radius:3px 3px 0 0;"></div>
<div style="left:1200px;top:833.5px;width:397px;height:33.5px;background:#efefef;"></div>
<div class="btn" style="left:1202.8px;top:841.3px;width:23px;height:22.4px;"></div>
<div class="btn" style="left:1232.3px;top:841.3px;width:23.3px;height:22.4px;"></div>
<svg style="left:1202.800px;top:841.300px" width="53" height="22.400" viewBox="0 0 53 22.400"><path d="M5 9.500l4.800-4.300v2.700c4.200 0 6.800 2.100 6.800 5.300 0 2.600-2.100 4.700-4.700 4.700v-2.600c1.300 0 2.100-0.800 2.100-2.100 0-1.400-1.300-2.100-4.200-2.100v2.800z" fill="#e87a30"/><path d="M46.800 9.500l-4.800-4.300v2.700c-4.200 0-6.800 2.100-6.800 5.300 0 2.600 2.100 4.700 4.700 4.700v-2.600c-1.300 0-2.100-0.800-2.100-2.100 0-1.400 1.300-2.100 4.200-2.100v2.800z" fill="#6aaa6c"/></svg>
<div class="chk" style="left:1403.2px;top:845.5px;width:13.5px;height:13.5px;"></div>
<svg style="left:1403.2px;top:845.5px" width="13.5" height="13.5" viewBox="0 0 13.500 13.500"><path d="M3 7l2.600 3.300 5-7.300" stroke="#111" stroke-width="1.700" fill="none" stroke-linecap="round" stroke-linejoin="round"/></svg>
<span class="t" style="left:1422.4px;top:842.8px;font-size:15px;line-height:20px;color:#000;letter-spacing:0.038px;">Live update</span>
<div class="btn" style="left:1514.4px;top:840.3px;width:79.2px;height:24.3px;"></div>
<svg style="left:1522.800px;top:844.400px" width="16" height="16" viewBox="0 0 16 16"><circle cx="8" cy="8" r="7.800" fill="#1f9a2c"/><path d="M4 8.300l2.800 2.900 5-5.600" stroke="#fff" stroke-width="1.900" fill="none" stroke-linecap="round" stroke-linejoin="round"/></svg>
<span class="t" style="left:1541.3px;top:842.8px;font-size:15px;line-height:20px;color:#000;letter-spacing:0.254px;">Apply</span>
<div style="left:1595px;top:397px;width:2px;height:14px;background:#111;"></div>
<svg style="left:344px;top:139.9px" width="25.19999999999999" height="11" viewBox="0 0 25.19999999999999 11" fill="none" stroke="#6a6a6a" stroke-width="1"><rect x="0.500" y="0.500" width="10" height="10" rx="2"/><rect x="4.500" y="2.500" width="4" height="4" rx="0.800"/><rect x="2.500" y="4.500" width="4" height="4" rx="0.800" fill="#efefef"/><rect x="14.699999999999989" y="0.500" width="10" height="10" rx="2"/><path d="M17.19999999999999 3l5 5M22.19999999999999 3l-5 5" stroke-width="2.2" stroke="#5e5e5e"/></svg>
<svg style="left:344px;top:323px" width="25.19999999999999" height="11" viewBox="0 0 25.19999999999999 11" fill="none" stroke="#6a6a6a" stroke-width="1"><rect x="0.500" y="0.500" width="10" height="10" rx="2"/><rect x="4.500" y="2.500" width="4" height="4" rx="0.800"/><rect x="2.500" y="4.500" width="4" height="4" rx="0.800" fill="#efefef"/><rect x="14.699999999999989" y="0.500" width="10" height="10" rx="2"/><path d="M17.19999999999999 3l5 5M22.19999999999999 3l-5 5" stroke-width="2.2" stroke="#5e5e5e"/></svg>
<svg style="left:0;top:137px" width="372" height="260" viewBox="0 137 372 260"><g transform="translate(5.2 161.8)"><rect x="1" y="1.500" width="11.500" height="11.500" fill="#f4f4f4" stroke="#8a8a8a" stroke-width="1.100"/><rect x="9" y="10.500" width="6" height="6" rx="1.200" fill="#5a9a5c"/><circle cx="12" cy="13.500" r="1.800" fill="#c8e0c8"/></g><g transform="translate(29.9 161.8)"><g fill="#4a88cc" stroke="#3a70b0" stroke-width="0.400"><path d="M1.500 7.300c0-3.700 3-6 6.400-6 2 0 3.500 0.800 4.700 2l1.700-1.700v5.700h-5.700l2-2c-0.700-0.800-1.600-1.300-2.700-1.300-1.900 0-3.400 1.300-3.700 3.300z"/><path d="M14.500 9c0 3.700-3 6-6.400 6-2 0-3.500-0.800-4.700-2l-1.700 1.700v-5.700h5.700l-2 2c0.700 0.800 1.600 1.300 2.700 1.300 1.900 0 3.400-1.300 3.700-3.300z"/></g></g><g transform="translate(55.1 161.8)"><path d="M0.800 1.500h14.400l-5.700 7v6l-3 -1.500v-4.500z" fill="#6a9ad0" stroke="#4a78b0" stroke-width="0.800" stroke-linejoin="round"/><path d="M1.500 2.300h13" stroke="#f8e040" stroke-width="1.600"/></g><g transform="translate(80.8 161.8)"><path d="M1 2.500h13M2.500 2.500v11M2.500 7.500h3M2.500 12.500h3" stroke="#9a9a9a" stroke-width="0.900" fill="none"/><rect x="4.500" y="5.500" width="3.200" height="3.200" fill="#f8a020" stroke="#e08000" stroke-width="0.500"/><rect x="4.500" y="11" width="3.200" height="3.200" fill="#f8a020" stroke="#e08000" stroke-width="0.500"/><path d="M11 0.500l5 5.500h-3v8.500h-4v-8.500h-3z" fill="#5b8cc4" stroke="#2c4c78" stroke-width="0.900" stroke-linejoin="round"/></g><g transform="translate(105.0 161.8)"><circle cx="8" cy="8" r="7" fill="#6294cc" stroke="#5484bc" stroke-width="0.600"/><text x="5.800" y="12.500" class="fr" font-size="12.500" font-weight="bold" font-style="italic" fill="#fff">i</text></g><g transform="translate(16.6 188.9)"><path d="M8 0.800l2.200 4.900 5.300 0.500-4 3.500 1.200 5.200-4.700-2.800-4.700 2.800 1.200-5.200-4-3.500 5.300-0.500z" fill="#fce94f" stroke="#d4b000" stroke-width="0.900" stroke-linejoin="round"/></g><g transform="translate(16.6 207.9)"><path d="M1.500 2h13v12.500h-11a2 2 0 0 1-2-2z" fill="#e4e4e4" stroke="#b0b0b0" stroke-width="0.900"/><path d="M1.500 1.500c1.800 0 2.200 1 2.200 2v9.500c0 1-0.700 1.500-2.200 1.500" fill="#f4f4f4" stroke="#b0b0b0" stroke-width="0.800"/><path d="M9 1.500h3.500v6l-1.750 1.800-1.750-1.800z" fill="#5b8cc4" stroke="#3e6da6" stroke-width="0.600"/></g><g transform="translate(16.6 226.9)"><path d="M1 2h5.500l1.500 1.800h7v10.700h-14z" fill="#a8d850" stroke="#9a9a9a" stroke-width="0.900" stroke-linejoin="round"/><path d="M1.500 13.500l13-9M2 4l8 10" stroke="#e8f4c0" stroke-width="1.100"/><path d="M8 6.500h5l-1 3.500-2.500 1.500z" fill="#1a9a28"/></g><g transform="translate(16.6 245.9)"><path d="M1 2h5.500l1.500 1.800h7v10.700h-14z" fill="#f4f4f4" stroke="#9a9a9a" stroke-width="0.900" stroke-linejoin="round"/><path d="M4.500 9.500l3.500-3.300 3.500 3.300M5.500 9v3.500h5v-3.500" fill="none" stroke="#2a2a2a" stroke-width="1.100"/></g><g transform="translate(16.6 264.9)"><path d="M1 2h5.500l1.500 1.800h7v10.700h-14z" fill="#f0f0f0" stroke="#9a9a9a" stroke-width="0.900" stroke-linejoin="round"/></g><g transform="translate(16.6 283.9)"><circle cx="8.300" cy="5.500" r="4.800" fill="#88acd8" stroke="#4a6a9a" stroke-width="0.600"/><path d="M5.500 3.500c1.300-0.700 2 0.300 1.300 1.300s-2 0.700-1.300-1.300zM8.500 4.500c1-1 2.700-0.300 2.700 1s-1.300 2-2.300 1.300-1-1.600-0.400-2.300z" fill="#3a5a8c"/><path d="M0.800 6l7.200 3.700v6l-7.200-3.700z" fill="#e8c020" stroke="#8a7000" stroke-width="0.700" stroke-linejoin="round"/><path d="M8 9.700l7.300-3.700v6l-7.300 3.700z" fill="#fcf080" stroke="#8a7000" stroke-width="0.700" stroke-linejoin="round"/></g><path d="M4 211.6l4.500 4-4.500 4z" fill="#6e6e6e"/><path d="M4 230.6l4.500 4-4.500 4z" fill="#6e6e6e"/><path d="M4 249.6l4.500 4-4.500 4z" fill="#6e6e6e"/><path d="M4 268.59999999999997l4.500 4-4.500 4z" fill="#6e6e6e"/><rect x="1.500" y="342.500" width="23.300" height="21.600" rx="3" fill="#dcdcdc" stroke="#b4b4b4" stroke-width="1"/><g transform="translate(5.1 345.0)"><path d="M1 10.500l2-2.500 6.500 3-2 3.500z" fill="#e04040"/><path d="M2 7.500l2-3 7 2.500-2 3.500z" fill="#5b8cc4"/><path d="M3.500 4.500l2-2.500 6.500 2-1.500 3z" fill="#f0d830"/><path d="M6.500 10l3.500-2.500 3 4-4.500 2.500z" fill="#d8b070" stroke="#a88040" stroke-width="0.600"/><path d="M11.500 8l4-4.500" stroke="#c09048" stroke-width="1.800" stroke-linecap="round"/></g><g transform="translate(29.9 345.0)"><path d="M1.500 6.500v8.500h8.500" stroke="#7a7a7a" stroke-width="0.900" fill="none"/><rect x="3.500" y="4" width="9" height="9" fill="#f4f4f4" stroke="#7a7a7a" stroke-width="0.900"/><path d="M6.500 3v-1.500a1.500 1.500 0 0 1 3 0v7" stroke="#4a78b0" stroke-width="1.200" fill="none"/><rect x="9.500" y="10.500" width="6" height="6" rx="1.200" fill="#5a9a5c"/><circle cx="12.500" cy="13.500" r="1.800" fill="#e0f0e0"/></g><g transform="translate(54.7 345.0)"><path d="M0.500 7.500c3.500-5 10.500-5 15 0-4.500 4.500-11.500 4.500-15 0z" fill="#f6f6f6" stroke="#8a8a8a" stroke-width="0.900"/><circle cx="8" cy="7.300" r="3" fill="#5b8cc4" stroke="#3e6da6" stroke-width="0.500"/><circle cx="8" cy="7.300" r="1.200" fill="#1a2a40"/><path d="M11 13h5l-2.500 3z" fill="#4a4a4a"/></g><g transform="translate(80.1 345.0)"><path d="M0.800 1.500h14.400l-5.700 7v6l-3 -1.500v-4.500z" fill="#6a9ad0" stroke="#4a78b0" stroke-width="0.800" stroke-linejoin="round"/><path d="M1.500 2.300h13" stroke="#f8e040" stroke-width="1.600"/><path d="M11.500 13.500h5l-2.500 3z" fill="#4a4a4a"/></g><g transform="translate(105.6 345.0)"><text x="0.500" y="10" class="fr" font-size="15" fill="#d4d4d4">ε</text><path d="M9 10h6.500l-2 2.500v3.500l-2.500-1v-2.500z" fill="#e0e0e0"/></g><g transform="translate(142.1 345.0)"><path d="M1 2.500h13M2.500 2.500v11M2.500 7.500h3M2.500 12.500h3" stroke="#9a9a9a" stroke-width="0.900" fill="none"/><rect x="4.500" y="5.500" width="3.200" height="3.200" fill="#f8a020" stroke="#e08000" stroke-width="0.500"/><rect x="4.500" y="11" width="3.200" height="3.200" fill="#f8a020" stroke="#e08000" stroke-width="0.500"/><path d="M11 15.500l5-5.500h-3v-8.500h-4v8.500h-3z" fill="#5b8cc4" stroke="#2c4c78" stroke-width="0.900" stroke-linejoin="round"/></g><g transform="translate(167.6 345.0)"><path d="M1 2.500h13M2.500 2.500v11M2.500 7.500h3M2.500 12.500h3" stroke="#9a9a9a" stroke-width="0.900" fill="none"/><rect x="4.500" y="5.500" width="3.200" height="3.200" fill="#f8a020" stroke="#e08000" stroke-width="0.500"/><rect x="4.500" y="11" width="3.200" height="3.200" fill="#f8a020" stroke="#e08000" stroke-width="0.500"/><path d="M11 0.500l5 5.500h-3v8.500h-4v-8.500h-3z" fill="#5b8cc4" stroke="#2c4c78" stroke-width="0.900" stroke-linejoin="round"/></g><g transform="translate(191.7 345.0)"><rect x="1" y="1.500" width="11.500" height="11.500" fill="#f4f4f4" stroke="#8a8a8a" stroke-width="1.100"/><rect x="9" y="10.500" width="6.500" height="5" rx="1.200" fill="#e82828"/><path d="M10.500 13h3.500" stroke="#fff" stroke-width="1.300"/></g><path d="M127.300 351h7l-3.500 4z" fill="#d0d0d0"/></svg>
<div style="left:0px;top:302px;width:356px;height:10.5px;overflow:hidden;"><svg style="left:16.600px;top:1px" width="16" height="16" viewBox="0 0 16 16"><path d="M15 0.500c-6 1.300-10 5.300-12.300 12.300l-1.200 3 1-0.300 1.300-2.700c3.300-0.700 6-2.300 8-5.300 1.700-2.300 2.700-4.700 3.200-7z" fill="#8cb0dc" stroke="#4a6c9c" stroke-width="0.700" stroke-linejoin="round"/></svg></div>
<svg style="left:0;top:370px" width="60" height="19" viewBox="0 370 60 19"><path d="M3.500 376.500h8.500l-4.250 4.600z" fill="#1c2c40"/><rect x="21.300" y="372.700" width="13.200" height="13.200" rx="1.500" fill="#fff" stroke="#c8d8e8" stroke-width="0.800"/><path d="M24.200 379.500l2.700 3.300 4.900-7.300" stroke="#111" stroke-width="1.700" fill="none" stroke-linecap="round" stroke-linejoin="round"/></svg>
<svg style="left:42.7px;top:373px" width="13.200000000000001" height="13.200000000000001" viewBox="0 0 13.200000000000001 13.200000000000001"><rect x="0.0" y="0.0" width="4.4" height="4.4" fill="#24507c"/><rect x="8.8" y="0.0" width="4.4" height="4.4" fill="#24507c"/><rect x="4.4" y="4.4" width="4.4" height="4.4" fill="#6aa4d8"/><rect x="0.0" y="8.8" width="4.4" height="4.4" fill="#24507c"/><rect x="8.8" y="8.8" width="4.4" height="4.4" fill="#6aa4d8"/></svg>
<div class="edit" style="left:1.5px;top:871px;width:267px;height:25px;"></div>
<svg style="left:8px;top:876px" width="16" height="16" viewBox="0 0 16 16"><circle cx="6.500" cy="6.500" r="4.300" fill="none" stroke="#8a8a8a" stroke-width="1.400"/><path d="M9.800 9.800l4 4" stroke="#8a8a8a" stroke-width="1.700" stroke-linecap="round"/></svg>
<span class="t" style="left:30px;top:874.0px;font-size:15px;line-height:20px;color:#7f7f7f;letter-spacing:0.058px;">Type to locate (Ctrl+K)</span>
<span class="t" style="left:733.2px;top:873.9px;font-size:13.3px;line-height:20px;color:#000;letter-spacing:-0.466px;">Coordinate</span>
<div class="edit" style="left:797.4px;top:872px;width:91.2px;height:23.5px;"></div>
<span class="t" style="left:807px;top:874.0px;font-size:13.3px;line-height:20px;color:#000;letter-spacing:-0.703px;">3,251 43,212</span>
<svg style="left:892px;top:874px" width="18" height="20" viewBox="0 0 18 20"><g transform="rotate(-25 9 10)"><rect x="4.500" y="3" width="9" height="14" rx="4.300" fill="#f4f4f4" stroke="#3a3a3a" stroke-width="1.200"/><path d="M4.500 8.500h9M9 3v5.500" stroke="#3a3a3a" stroke-width="1"/><circle cx="9" cy="12.500" r="1.800" fill="none" stroke="#3a3a3a" stroke-width="0.900"/><path d="M6 4.500l-1.500 3M12 4.500l1.500 3" stroke="#3a3a3a" stroke-width="1.200"/></g><path d="M14.500 2.500l2-1.500M15.500 5l2-0.500" stroke="#3a3a3a" stroke-width="0.800"/></svg>
<span class="t" style="left:922.5px;top:873.9px;font-size:13.3px;line-height:20px;color:#000;letter-spacing:-1.153px;">Scale</span>
<div class="edit" style="left:954.2px;top:871.5px;width:96.4px;height:24.3px;"></div>
<div style="left:1030.5px;top:872.5px;width:19.1px;height:22.3px;background:linear-gradient(#fbfbfb,#eeeeee);border-left:1px solid #c4c4c4;border-radius:0 2px 2px 0;"></div>
<svg style="left:1035px;top:880.500px" width="10" height="7" viewBox="0 0 10 7"><path d="M1.200 1.200h7.600l-3.800 4.300z" fill="#4a4a4a"/></svg>
<span class="t" style="left:958.6px;top:874.0px;font-size:13.3px;line-height:20px;color:#000;letter-spacing:-0.771px;">1:786812</span>
<svg style="left:1062px;top:875px" width="14" height="17" viewBox="0 0 14 17"><path d="M3.500 8v-3a3.500 3.500 0 0 1 7 0v3" fill="none" stroke="#6a6a6a" stroke-width="1.800"/><rect x="1" y="7.500" width="12" height="8.500" rx="1.500" fill="#6a6a6a"/></svg>
<span class="t" style="left:1084.2px;top:873.9px;font-size:13.3px;line-height:20px;color:#000;letter-spacing:-0.321px;">Magnifier</span>
<div style="left:1140.3px;top:872px;width:92.6px;height:23.8px;background:#fff;border:1px solid #b4b4b4;border-radius:3px;"></div>
<div style="left:1217.8999999999999px;top:873px;width:14px;height:21.8px;background:linear-gradient(#fbfbfb,#efefef);border-left:1px solid #c4c4c4;border-radius:0 2px 2px 0;"></div>
<svg style="left:1218.8999999999999px;top:873px" width="13" height="21.8" viewBox="0 0 13 21.8"><path d="M3.200 9.3l3.300-3.600 3.300 3.600z M3.200 12.7l3.300 3.600 3.300-3.600z" fill="#4a4a4a"/></svg>
<span class="t" style="left:1145.1px;top:874.2px;font-size:13.3px;line-height:20px;color:#000;letter-spacing:-1.004px;">100%</span>
<span class="t" style="left:1243.5px;top:873.9px;font-size:13.3px;line-height:20px;color:#000;letter-spacing:-0.341px;">Rotation</span>
<div style="left:1300.3px;top:872px;width:93.1px;height:23.8px;background:#fff;border:1px solid #b4b4b4;border-radius:3px;"></div>
<div style="left:1378.3999999999999px;top:873px;width:14px;height:21.8px;background:linear-gradient(#fbfbfb,#efefef);border-left:1px solid #c4c4c4;border-radius:0 2px 2px 0;"></div>
<svg style="left:1379.3999999999999px;top:873px" width="13" height="21.8" viewBox="0 0 13 21.8"><path d="M3.200 9.3l3.300-3.600 3.300 3.600z M3.200 12.7l3.300 3.600 3.300-3.600z" fill="#4a4a4a"/></svg>
<span class="t" style="left:1305.2px;top:874.2px;font-size:13.3px;line-height:20px;color:#000;letter-spacing:-0.860px;">0,0 °</span>
<div class="chk" style="left:1400.3px;top:876.6px;width:13.5px;height:13.5px;"></div>
<svg style="left:1400.3px;top:876.6px" width="13.5" height="13.5" viewBox="0 0 13.500 13.500"><path d="M3 7l2.600 3.300 5-7.300" stroke="#111" stroke-width="1.700" fill="none" stroke-linecap="round" stroke-linejoin="round"/></svg>
<span class="t" style="left:1419.3px;top:873.9px;font-size:13.3px;line-height:20px;color:#000;letter-spacing:-0.804px;">Render</span>
<svg style="left:1474px;top:876px" width="16" height="16" viewBox="0 0 16 16" fill="none" stroke="#6a6a6a" stroke-width="0.900"><circle cx="8" cy="8" r="6.300"/><ellipse cx="8" cy="8" rx="3" ry="6.300"/><path d="M1.700 8h12.600M8 1.700v12.600M2.700 4.800h10.600M2.700 11.200h10.600M0.500 3h3M12.500 13h3"/></svg>
<span class="t" style="left:1492px;top:873.9px;font-size:13.3px;line-height:20px;color:#000;letter-spacing:-1.200px;">EPSG:4326</span>
<svg style="left:1573px;top:876px" width="18" height="17" viewBox="0 0 18 17"><path d="M9 1c4.500 0 8 2.600 8 6s-3.500 6-8 6c-0.700 0-1.400-0.100-2-0.200l0.500 3.200-4-4.300c-1.500-1.100-2.500-2.800-2.500-4.700 0-3.400 3.500-6 8-6z" fill="#6e6e6e"/><circle cx="5.300" cy="7" r="1.100" fill="#efefef"/><circle cx="9" cy="7" r="1.100" fill="#efefef"/><circle cx="12.700" cy="7" r="1.100" fill="#efefef"/></svg>
</div>
</body></html>
